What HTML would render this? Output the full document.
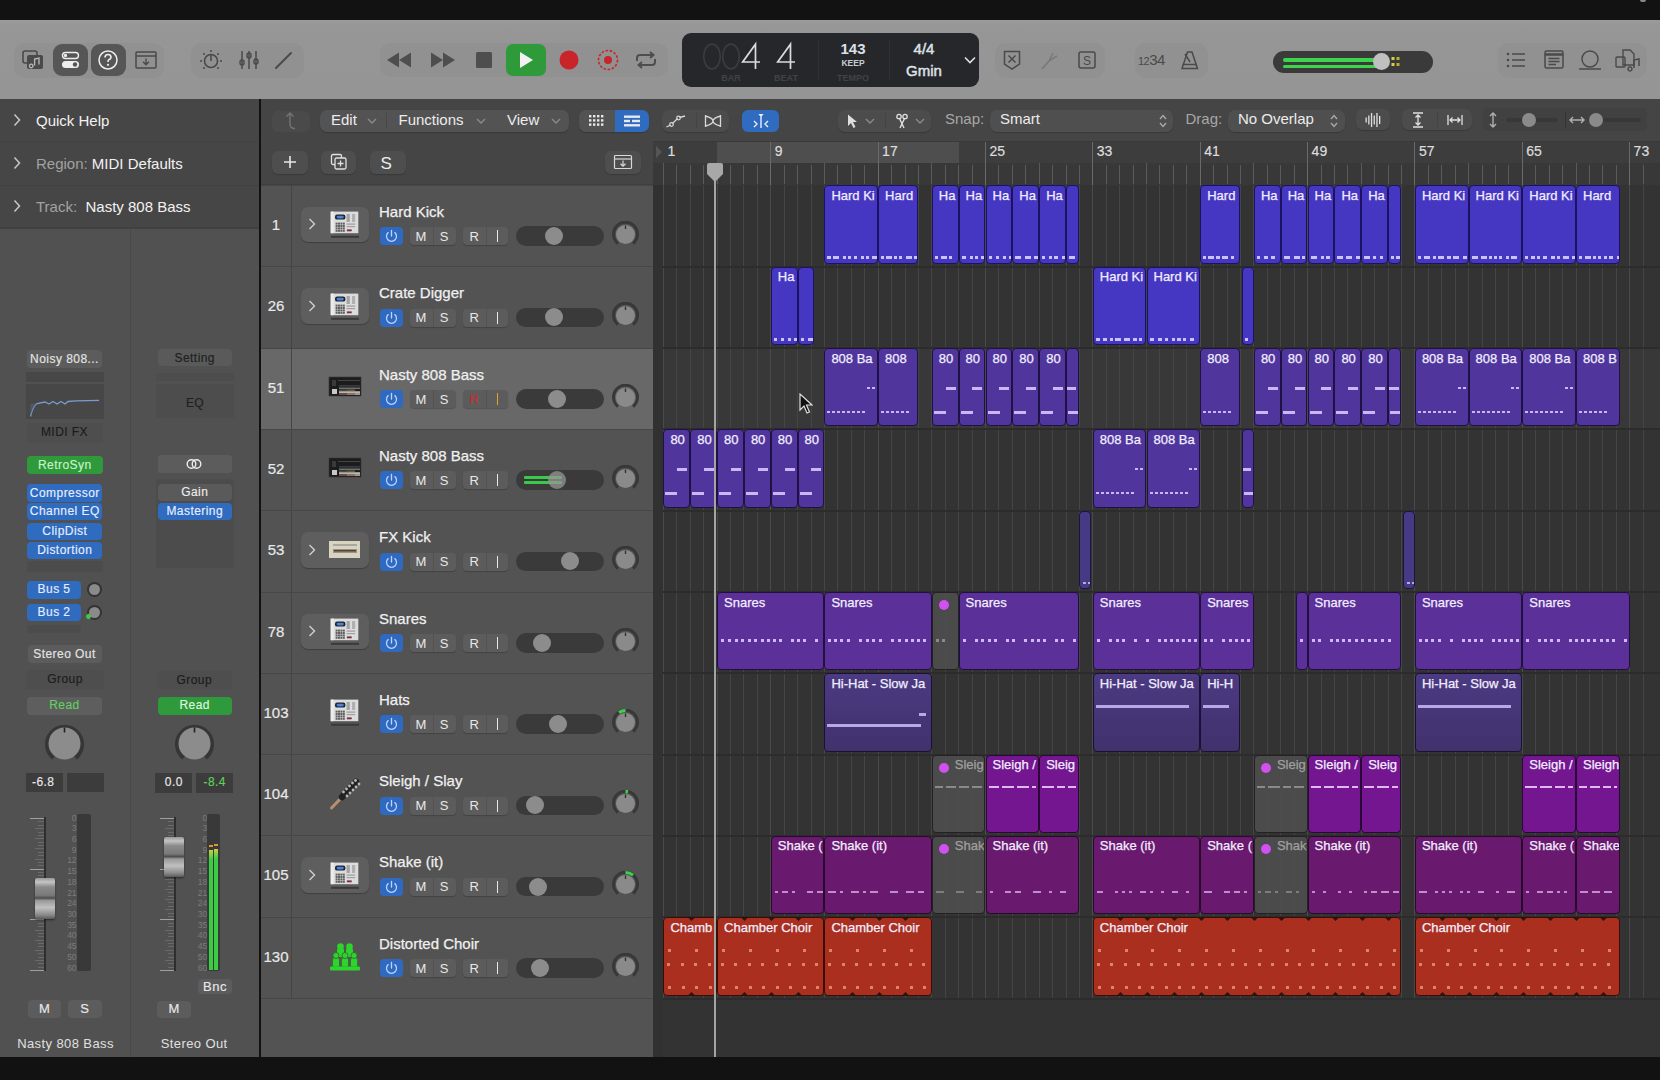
<!DOCTYPE html><html><head><meta charset="utf-8"><style>
html,body{margin:0;padding:0;} body{width:1660px;height:1080px;overflow:hidden;position:relative;background:#121212;font-family:"Liberation Sans", sans-serif;} div{box-sizing:border-box;}
.rg{position:absolute;border:1px solid;border-radius:4px;overflow:hidden;box-sizing:border-box;font-family:"Liberation Sans",sans-serif}.rg i{position:absolute;display:block}
</style></head><body>
<div style="position:absolute;left:0px;top:0px;width:1660px;height:20px;background:#121212"></div>
<div style="position:absolute;left:0px;top:20px;width:1660px;height:79px;background:linear-gradient(#9b9b9b, #969696 6px, #959595)"></div>
<div style="position:absolute;left:0px;top:99px;width:259px;height:958px;background:#515151"></div>
<div style="position:absolute;left:0px;top:99px;width:259px;height:128px;background:#464646"></div>
<div style="position:absolute;left:0px;top:140.5px;width:259px;height:1px;background:#424242"></div>
<div style="position:absolute;left:0px;top:184.5px;width:259px;height:1px;background:#424242"></div>
<div style="position:absolute;left:0px;top:227px;width:259px;height:2px;background:#404040"></div>
<div style="position:absolute;left:130px;top:228px;width:1px;height:829px;background:#484848"></div>
<div style="position:absolute;left:259px;top:99px;width:1.5px;height:958px;background:#121212"></div>
<div style="position:absolute;left:260.5px;top:99px;width:392.5px;height:958px;background:#535353"></div>
<div style="position:absolute;left:260.5px;top:99px;width:392.5px;height:86px;background:#454545"></div>
<div style="position:absolute;left:260.5px;top:184px;width:392.5px;height:1.5px;background:#3f3f3f"></div>
<div style="position:absolute;left:653px;top:99px;width:1007px;height:44px;background:#454545"></div>
<div style="position:absolute;left:653px;top:141px;width:1007px;height:44px;background:#3a3a3a"></div>
<div style="position:absolute;left:653px;top:185px;width:1007px;height:872px;background:#333333"></div>
<div style="position:absolute;left:653px;top:348.0px;width:1007px;height:81.3px;background:#383838"></div>
<div style="position:absolute;left:662.9px;top:185px;width:1px;height:813px;background:#4a4a4a"></div>
<div style="position:absolute;left:676.3px;top:185px;width:1px;height:813px;background:#454545"></div>
<div style="position:absolute;left:689.7px;top:185px;width:1px;height:813px;background:#454545"></div>
<div style="position:absolute;left:703.2px;top:185px;width:1px;height:813px;background:#454545"></div>
<div style="position:absolute;left:716.6px;top:185px;width:1px;height:813px;background:#454545"></div>
<div style="position:absolute;left:730.0px;top:185px;width:1px;height:813px;background:#454545"></div>
<div style="position:absolute;left:743.4px;top:185px;width:1px;height:813px;background:#454545"></div>
<div style="position:absolute;left:756.8px;top:185px;width:1px;height:813px;background:#454545"></div>
<div style="position:absolute;left:770.3px;top:185px;width:1px;height:813px;background:#4a4a4a"></div>
<div style="position:absolute;left:783.7px;top:185px;width:1px;height:813px;background:#454545"></div>
<div style="position:absolute;left:797.1px;top:185px;width:1px;height:813px;background:#454545"></div>
<div style="position:absolute;left:810.5px;top:185px;width:1px;height:813px;background:#454545"></div>
<div style="position:absolute;left:823.9px;top:185px;width:1px;height:813px;background:#454545"></div>
<div style="position:absolute;left:837.4px;top:185px;width:1px;height:813px;background:#454545"></div>
<div style="position:absolute;left:850.8px;top:185px;width:1px;height:813px;background:#454545"></div>
<div style="position:absolute;left:864.2px;top:185px;width:1px;height:813px;background:#454545"></div>
<div style="position:absolute;left:877.6px;top:185px;width:1px;height:813px;background:#4a4a4a"></div>
<div style="position:absolute;left:891.0px;top:185px;width:1px;height:813px;background:#454545"></div>
<div style="position:absolute;left:904.5px;top:185px;width:1px;height:813px;background:#454545"></div>
<div style="position:absolute;left:917.9px;top:185px;width:1px;height:813px;background:#454545"></div>
<div style="position:absolute;left:931.3px;top:185px;width:1px;height:813px;background:#454545"></div>
<div style="position:absolute;left:944.7px;top:185px;width:1px;height:813px;background:#454545"></div>
<div style="position:absolute;left:958.1px;top:185px;width:1px;height:813px;background:#454545"></div>
<div style="position:absolute;left:971.6px;top:185px;width:1px;height:813px;background:#454545"></div>
<div style="position:absolute;left:985.0px;top:185px;width:1px;height:813px;background:#4a4a4a"></div>
<div style="position:absolute;left:998.4px;top:185px;width:1px;height:813px;background:#454545"></div>
<div style="position:absolute;left:1011.8px;top:185px;width:1px;height:813px;background:#454545"></div>
<div style="position:absolute;left:1025.2px;top:185px;width:1px;height:813px;background:#454545"></div>
<div style="position:absolute;left:1038.7px;top:185px;width:1px;height:813px;background:#454545"></div>
<div style="position:absolute;left:1052.1px;top:185px;width:1px;height:813px;background:#454545"></div>
<div style="position:absolute;left:1065.5px;top:185px;width:1px;height:813px;background:#454545"></div>
<div style="position:absolute;left:1078.9px;top:185px;width:1px;height:813px;background:#454545"></div>
<div style="position:absolute;left:1092.3px;top:185px;width:1px;height:813px;background:#4a4a4a"></div>
<div style="position:absolute;left:1105.8px;top:185px;width:1px;height:813px;background:#454545"></div>
<div style="position:absolute;left:1119.2px;top:185px;width:1px;height:813px;background:#454545"></div>
<div style="position:absolute;left:1132.6px;top:185px;width:1px;height:813px;background:#454545"></div>
<div style="position:absolute;left:1146.0px;top:185px;width:1px;height:813px;background:#454545"></div>
<div style="position:absolute;left:1159.4px;top:185px;width:1px;height:813px;background:#454545"></div>
<div style="position:absolute;left:1172.9px;top:185px;width:1px;height:813px;background:#454545"></div>
<div style="position:absolute;left:1186.3px;top:185px;width:1px;height:813px;background:#454545"></div>
<div style="position:absolute;left:1199.7px;top:185px;width:1px;height:813px;background:#4a4a4a"></div>
<div style="position:absolute;left:1213.1px;top:185px;width:1px;height:813px;background:#454545"></div>
<div style="position:absolute;left:1226.5px;top:185px;width:1px;height:813px;background:#454545"></div>
<div style="position:absolute;left:1240.0px;top:185px;width:1px;height:813px;background:#454545"></div>
<div style="position:absolute;left:1253.4px;top:185px;width:1px;height:813px;background:#454545"></div>
<div style="position:absolute;left:1266.8px;top:185px;width:1px;height:813px;background:#454545"></div>
<div style="position:absolute;left:1280.2px;top:185px;width:1px;height:813px;background:#454545"></div>
<div style="position:absolute;left:1293.6px;top:185px;width:1px;height:813px;background:#454545"></div>
<div style="position:absolute;left:1307.1px;top:185px;width:1px;height:813px;background:#4a4a4a"></div>
<div style="position:absolute;left:1320.5px;top:185px;width:1px;height:813px;background:#454545"></div>
<div style="position:absolute;left:1333.9px;top:185px;width:1px;height:813px;background:#454545"></div>
<div style="position:absolute;left:1347.3px;top:185px;width:1px;height:813px;background:#454545"></div>
<div style="position:absolute;left:1360.7px;top:185px;width:1px;height:813px;background:#454545"></div>
<div style="position:absolute;left:1374.2px;top:185px;width:1px;height:813px;background:#454545"></div>
<div style="position:absolute;left:1387.6px;top:185px;width:1px;height:813px;background:#454545"></div>
<div style="position:absolute;left:1401.0px;top:185px;width:1px;height:813px;background:#454545"></div>
<div style="position:absolute;left:1414.4px;top:185px;width:1px;height:813px;background:#4a4a4a"></div>
<div style="position:absolute;left:1427.8px;top:185px;width:1px;height:813px;background:#454545"></div>
<div style="position:absolute;left:1441.3px;top:185px;width:1px;height:813px;background:#454545"></div>
<div style="position:absolute;left:1454.7px;top:185px;width:1px;height:813px;background:#454545"></div>
<div style="position:absolute;left:1468.1px;top:185px;width:1px;height:813px;background:#454545"></div>
<div style="position:absolute;left:1481.5px;top:185px;width:1px;height:813px;background:#454545"></div>
<div style="position:absolute;left:1494.9px;top:185px;width:1px;height:813px;background:#454545"></div>
<div style="position:absolute;left:1508.4px;top:185px;width:1px;height:813px;background:#454545"></div>
<div style="position:absolute;left:1521.8px;top:185px;width:1px;height:813px;background:#4a4a4a"></div>
<div style="position:absolute;left:1535.2px;top:185px;width:1px;height:813px;background:#454545"></div>
<div style="position:absolute;left:1548.6px;top:185px;width:1px;height:813px;background:#454545"></div>
<div style="position:absolute;left:1562.0px;top:185px;width:1px;height:813px;background:#454545"></div>
<div style="position:absolute;left:1575.5px;top:185px;width:1px;height:813px;background:#454545"></div>
<div style="position:absolute;left:1588.9px;top:185px;width:1px;height:813px;background:#454545"></div>
<div style="position:absolute;left:1602.3px;top:185px;width:1px;height:813px;background:#454545"></div>
<div style="position:absolute;left:1615.7px;top:185px;width:1px;height:813px;background:#454545"></div>
<div style="position:absolute;left:1629.1px;top:185px;width:1px;height:813px;background:#4a4a4a"></div>
<div style="position:absolute;left:1642.6px;top:185px;width:1px;height:813px;background:#454545"></div>
<div style="position:absolute;left:653px;top:265.6px;width:1007px;height:2px;background:#2c2c2c"></div>
<div style="position:absolute;left:653px;top:347.0px;width:1007px;height:2px;background:#2c2c2c"></div>
<div style="position:absolute;left:653px;top:428.3px;width:1007px;height:2px;background:#2c2c2c"></div>
<div style="position:absolute;left:653px;top:509.6px;width:1007px;height:2px;background:#2c2c2c"></div>
<div style="position:absolute;left:653px;top:591.0px;width:1007px;height:2px;background:#2c2c2c"></div>
<div style="position:absolute;left:653px;top:672.3px;width:1007px;height:2px;background:#2c2c2c"></div>
<div style="position:absolute;left:653px;top:753.6px;width:1007px;height:2px;background:#2c2c2c"></div>
<div style="position:absolute;left:653px;top:834.9px;width:1007px;height:2px;background:#2c2c2c"></div>
<div style="position:absolute;left:653px;top:916.3px;width:1007px;height:2px;background:#2c2c2c"></div>
<div style="position:absolute;left:653px;top:997.6px;width:1007px;height:2px;background:#2c2c2c"></div>
<div style="position:absolute;left:653px;top:185px;width:10px;height:872px;background:#313131"></div>
<div class="rg" style="left:824.4px;top:185.3px;width:53.7px;height:78.3px;background:#4637c2;border-color:#1b1360"><i style="left:2px;top:70px;width:4px;height:3px;background:#c9c2ff"></i><i style="left:8px;top:70px;width:6px;height:3px;background:#c9c2ff"></i><i style="left:18px;top:70px;width:3px;height:3px;background:#c9c2ff"></i><i style="left:23px;top:70px;width:3px;height:3px;background:#c9c2ff"></i><i style="left:29px;top:70px;width:3px;height:3px;background:#c9c2ff"></i><i style="left:36px;top:70px;width:3px;height:3px;background:#c9c2ff"></i><i style="left:41px;top:70px;width:3px;height:3px;background:#c9c2ff"></i><i style="left:47px;top:70px;width:6px;height:3px;background:#c9c2ff"></i><b style="position:absolute;left:6px;top:1.5px;font-weight:normal;font-size:13px;line-height:15px;color:#f2eeff;white-space:nowrap;-webkit-text-stroke:0.25px #f2eeff">Hard Ki</b></div>
<div class="rg" style="left:878.1px;top:185.3px;width:40.3px;height:78.3px;background:#4637c2;border-color:#1b1360"><i style="left:2px;top:70px;width:3px;height:3px;background:#c9c2ff"></i><i style="left:7px;top:70px;width:6px;height:3px;background:#c9c2ff"></i><i style="left:15px;top:70px;width:3px;height:3px;background:#c9c2ff"></i><i style="left:20px;top:70px;width:3px;height:3px;background:#c9c2ff"></i><i style="left:27px;top:70px;width:6px;height:3px;background:#c9c2ff"></i><i style="left:35px;top:70px;width:3px;height:3px;background:#c9c2ff"></i><b style="position:absolute;left:6px;top:1.5px;font-weight:normal;font-size:13px;line-height:15px;color:#f2eeff;white-space:nowrap;-webkit-text-stroke:0.25px #f2eeff">Hard</b></div>
<div class="rg" style="left:931.8px;top:185.3px;width:26.8px;height:78.3px;background:#4637c2;border-color:#1b1360"><i style="left:2px;top:70px;width:3px;height:3px;background:#c9c2ff"></i><i style="left:8px;top:70px;width:6px;height:3px;background:#c9c2ff"></i><i style="left:16px;top:70px;width:3px;height:3px;background:#c9c2ff"></i><b style="position:absolute;left:6px;top:1.5px;font-weight:normal;font-size:13px;line-height:15px;color:#f2eeff;white-space:nowrap;-webkit-text-stroke:0.25px #f2eeff">Ha</b></div>
<div class="rg" style="left:958.6px;top:185.3px;width:26.8px;height:78.3px;background:#4637c2;border-color:#1b1360"><i style="left:2px;top:70px;width:4px;height:3px;background:#c9c2ff"></i><i style="left:10px;top:70px;width:3px;height:3px;background:#c9c2ff"></i><i style="left:15px;top:70px;width:3px;height:3px;background:#c9c2ff"></i><i style="left:21px;top:70px;width:3px;height:3px;background:#c9c2ff"></i><b style="position:absolute;left:6px;top:1.5px;font-weight:normal;font-size:13px;line-height:15px;color:#f2eeff;white-space:nowrap;-webkit-text-stroke:0.25px #f2eeff">Ha</b></div>
<div class="rg" style="left:985.5px;top:185.3px;width:26.8px;height:78.3px;background:#4637c2;border-color:#1b1360"><i style="left:2px;top:70px;width:3px;height:3px;background:#c9c2ff"></i><i style="left:9px;top:70px;width:3px;height:3px;background:#c9c2ff"></i><i style="left:16px;top:70px;width:3px;height:3px;background:#c9c2ff"></i><i style="left:22px;top:70px;width:6px;height:3px;background:#c9c2ff"></i><b style="position:absolute;left:6px;top:1.5px;font-weight:normal;font-size:13px;line-height:15px;color:#f2eeff;white-space:nowrap;-webkit-text-stroke:0.25px #f2eeff">Ha</b></div>
<div class="rg" style="left:1012.3px;top:185.3px;width:26.8px;height:78.3px;background:#4637c2;border-color:#1b1360"><i style="left:2px;top:70px;width:6px;height:3px;background:#c9c2ff"></i><i style="left:12px;top:70px;width:6px;height:3px;background:#c9c2ff"></i><i style="left:21px;top:70px;width:4px;height:3px;background:#c9c2ff"></i><b style="position:absolute;left:6px;top:1.5px;font-weight:normal;font-size:13px;line-height:15px;color:#f2eeff;white-space:nowrap;-webkit-text-stroke:0.25px #f2eeff">Ha</b></div>
<div class="rg" style="left:1039.2px;top:185.3px;width:26.8px;height:78.3px;background:#4637c2;border-color:#1b1360"><i style="left:2px;top:70px;width:3px;height:3px;background:#c9c2ff"></i><i style="left:9px;top:70px;width:3px;height:3px;background:#c9c2ff"></i><i style="left:14px;top:70px;width:4px;height:3px;background:#c9c2ff"></i><i style="left:22px;top:70px;width:6px;height:3px;background:#c9c2ff"></i><b style="position:absolute;left:6px;top:1.5px;font-weight:normal;font-size:13px;line-height:15px;color:#f2eeff;white-space:nowrap;-webkit-text-stroke:0.25px #f2eeff">Ha</b></div>
<div class="rg" style="left:1066.0px;top:185.3px;width:13.4px;height:78.3px;background:#4637c2;border-color:#1b1360"><i style="left:2px;top:70px;width:6px;height:3px;background:#c9c2ff"></i></div>
<div class="rg" style="left:1200.2px;top:185.3px;width:40.3px;height:78.3px;background:#4637c2;border-color:#1b1360"><i style="left:2px;top:70px;width:3px;height:3px;background:#c9c2ff"></i><i style="left:7px;top:70px;width:6px;height:3px;background:#c9c2ff"></i><i style="left:15px;top:70px;width:4px;height:3px;background:#c9c2ff"></i><i style="left:21px;top:70px;width:6px;height:3px;background:#c9c2ff"></i><i style="left:30px;top:70px;width:3px;height:3px;background:#c9c2ff"></i><b style="position:absolute;left:6px;top:1.5px;font-weight:normal;font-size:13px;line-height:15px;color:#f2eeff;white-space:nowrap;-webkit-text-stroke:0.25px #f2eeff">Hard</b></div>
<div class="rg" style="left:1253.9px;top:185.3px;width:26.8px;height:78.3px;background:#4637c2;border-color:#1b1360"><i style="left:2px;top:70px;width:3px;height:3px;background:#c9c2ff"></i><i style="left:9px;top:70px;width:4px;height:3px;background:#c9c2ff"></i><i style="left:16px;top:70px;width:4px;height:3px;background:#c9c2ff"></i><b style="position:absolute;left:6px;top:1.5px;font-weight:normal;font-size:13px;line-height:15px;color:#f2eeff;white-space:nowrap;-webkit-text-stroke:0.25px #f2eeff">Ha</b></div>
<div class="rg" style="left:1280.7px;top:185.3px;width:26.8px;height:78.3px;background:#4637c2;border-color:#1b1360"><i style="left:2px;top:70px;width:6px;height:3px;background:#c9c2ff"></i><i style="left:12px;top:70px;width:6px;height:3px;background:#c9c2ff"></i><i style="left:20px;top:70px;width:3px;height:3px;background:#c9c2ff"></i><b style="position:absolute;left:6px;top:1.5px;font-weight:normal;font-size:13px;line-height:15px;color:#f2eeff;white-space:nowrap;-webkit-text-stroke:0.25px #f2eeff">Ha</b></div>
<div class="rg" style="left:1307.6px;top:185.3px;width:26.8px;height:78.3px;background:#4637c2;border-color:#1b1360"><i style="left:2px;top:70px;width:6px;height:3px;background:#c9c2ff"></i><i style="left:12px;top:70px;width:3px;height:3px;background:#c9c2ff"></i><i style="left:17px;top:70px;width:4px;height:3px;background:#c9c2ff"></i><b style="position:absolute;left:6px;top:1.5px;font-weight:normal;font-size:13px;line-height:15px;color:#f2eeff;white-space:nowrap;-webkit-text-stroke:0.25px #f2eeff">Ha</b></div>
<div class="rg" style="left:1334.4px;top:185.3px;width:26.8px;height:78.3px;background:#4637c2;border-color:#1b1360"><i style="left:2px;top:70px;width:6px;height:3px;background:#c9c2ff"></i><i style="left:11px;top:70px;width:6px;height:3px;background:#c9c2ff"></i><i style="left:21px;top:70px;width:4px;height:3px;background:#c9c2ff"></i><b style="position:absolute;left:6px;top:1.5px;font-weight:normal;font-size:13px;line-height:15px;color:#f2eeff;white-space:nowrap;-webkit-text-stroke:0.25px #f2eeff">Ha</b></div>
<div class="rg" style="left:1361.2px;top:185.3px;width:26.8px;height:78.3px;background:#4637c2;border-color:#1b1360"><i style="left:2px;top:70px;width:6px;height:3px;background:#c9c2ff"></i><i style="left:11px;top:70px;width:3px;height:3px;background:#c9c2ff"></i><i style="left:18px;top:70px;width:3px;height:3px;background:#c9c2ff"></i><b style="position:absolute;left:6px;top:1.5px;font-weight:normal;font-size:13px;line-height:15px;color:#f2eeff;white-space:nowrap;-webkit-text-stroke:0.25px #f2eeff">Ha</b></div>
<div class="rg" style="left:1388.1px;top:185.3px;width:13.4px;height:78.3px;background:#4637c2;border-color:#1b1360"><i style="left:2px;top:70px;width:3px;height:3px;background:#c9c2ff"></i><i style="left:7px;top:70px;width:4px;height:3px;background:#c9c2ff"></i></div>
<div class="rg" style="left:1414.9px;top:185.3px;width:53.7px;height:78.3px;background:#4637c2;border-color:#1b1360"><i style="left:2px;top:70px;width:3px;height:3px;background:#c9c2ff"></i><i style="left:8px;top:70px;width:6px;height:3px;background:#c9c2ff"></i><i style="left:17px;top:70px;width:3px;height:3px;background:#c9c2ff"></i><i style="left:22px;top:70px;width:6px;height:3px;background:#c9c2ff"></i><i style="left:31px;top:70px;width:4px;height:3px;background:#c9c2ff"></i><i style="left:37px;top:70px;width:6px;height:3px;background:#c9c2ff"></i><i style="left:47px;top:70px;width:4px;height:3px;background:#c9c2ff"></i><b style="position:absolute;left:6px;top:1.5px;font-weight:normal;font-size:13px;line-height:15px;color:#f2eeff;white-space:nowrap;-webkit-text-stroke:0.25px #f2eeff">Hard Ki</b></div>
<div class="rg" style="left:1468.6px;top:185.3px;width:53.7px;height:78.3px;background:#4637c2;border-color:#1b1360"><i style="left:2px;top:70px;width:6px;height:3px;background:#c9c2ff"></i><i style="left:11px;top:70px;width:6px;height:3px;background:#c9c2ff"></i><i style="left:19px;top:70px;width:3px;height:3px;background:#c9c2ff"></i><i style="left:24px;top:70px;width:3px;height:3px;background:#c9c2ff"></i><i style="left:29px;top:70px;width:3px;height:3px;background:#c9c2ff"></i><i style="left:36px;top:70px;width:3px;height:3px;background:#c9c2ff"></i><i style="left:41px;top:70px;width:6px;height:3px;background:#c9c2ff"></i><b style="position:absolute;left:6px;top:1.5px;font-weight:normal;font-size:13px;line-height:15px;color:#f2eeff;white-space:nowrap;-webkit-text-stroke:0.25px #f2eeff">Hard Ki</b></div>
<div class="rg" style="left:1522.3px;top:185.3px;width:53.7px;height:78.3px;background:#4637c2;border-color:#1b1360"><i style="left:2px;top:70px;width:3px;height:3px;background:#c9c2ff"></i><i style="left:8px;top:70px;width:4px;height:3px;background:#c9c2ff"></i><i style="left:14px;top:70px;width:3px;height:3px;background:#c9c2ff"></i><i style="left:20px;top:70px;width:4px;height:3px;background:#c9c2ff"></i><i style="left:28px;top:70px;width:4px;height:3px;background:#c9c2ff"></i><i style="left:34px;top:70px;width:3px;height:3px;background:#c9c2ff"></i><i style="left:40px;top:70px;width:6px;height:3px;background:#c9c2ff"></i><i style="left:49px;top:70px;width:6px;height:3px;background:#c9c2ff"></i><b style="position:absolute;left:6px;top:1.5px;font-weight:normal;font-size:13px;line-height:15px;color:#f2eeff;white-space:nowrap;-webkit-text-stroke:0.25px #f2eeff">Hard Ki</b></div>
<div class="rg" style="left:1576.0px;top:185.3px;width:44.3px;height:78.3px;background:#4637c2;border-color:#1b1360"><i style="left:2px;top:70px;width:3px;height:3px;background:#c9c2ff"></i><i style="left:8px;top:70px;width:6px;height:3px;background:#c9c2ff"></i><i style="left:16px;top:70px;width:3px;height:3px;background:#c9c2ff"></i><i style="left:21px;top:70px;width:3px;height:3px;background:#c9c2ff"></i><i style="left:27px;top:70px;width:3px;height:3px;background:#c9c2ff"></i><i style="left:32px;top:70px;width:4px;height:3px;background:#c9c2ff"></i><i style="left:40px;top:70px;width:3px;height:3px;background:#c9c2ff"></i><b style="position:absolute;left:6px;top:1.5px;font-weight:normal;font-size:13px;line-height:15px;color:#f2eeff;white-space:nowrap;-webkit-text-stroke:0.25px #f2eeff">Hard</b></div>
<div class="rg" style="left:770.8px;top:266.6px;width:26.8px;height:78.3px;background:#4637c2;border-color:#1b1360"><i style="left:2px;top:70px;width:3px;height:3px;background:#c9c2ff"></i><i style="left:9px;top:70px;width:3px;height:3px;background:#c9c2ff"></i><i style="left:16px;top:70px;width:3px;height:3px;background:#c9c2ff"></i><i style="left:22px;top:70px;width:3px;height:3px;background:#c9c2ff"></i><b style="position:absolute;left:6px;top:1.5px;font-weight:normal;font-size:13px;line-height:15px;color:#f2eeff;white-space:nowrap;-webkit-text-stroke:0.25px #f2eeff">Ha</b></div>
<div class="rg" style="left:797.6px;top:266.6px;width:16.8px;height:78.3px;background:#4637c2;border-color:#1b1360"><i style="left:2px;top:70px;width:3px;height:3px;background:#c9c2ff"></i><i style="left:9px;top:70px;width:6px;height:3px;background:#c9c2ff"></i></div>
<div class="rg" style="left:1092.8px;top:266.6px;width:53.7px;height:78.3px;background:#4637c2;border-color:#1b1360"><i style="left:2px;top:70px;width:4px;height:3px;background:#c9c2ff"></i><i style="left:9px;top:70px;width:4px;height:3px;background:#c9c2ff"></i><i style="left:16px;top:70px;width:3px;height:3px;background:#c9c2ff"></i><i style="left:21px;top:70px;width:6px;height:3px;background:#c9c2ff"></i><i style="left:30px;top:70px;width:6px;height:3px;background:#c9c2ff"></i><i style="left:39px;top:70px;width:4px;height:3px;background:#c9c2ff"></i><i style="left:45px;top:70px;width:3px;height:3px;background:#c9c2ff"></i><b style="position:absolute;left:6px;top:1.5px;font-weight:normal;font-size:13px;line-height:15px;color:#f2eeff;white-space:nowrap;-webkit-text-stroke:0.25px #f2eeff">Hard Ki</b></div>
<div class="rg" style="left:1146.5px;top:266.6px;width:53.7px;height:78.3px;background:#4637c2;border-color:#1b1360"><i style="left:2px;top:70px;width:4px;height:3px;background:#c9c2ff"></i><i style="left:10px;top:70px;width:4px;height:3px;background:#c9c2ff"></i><i style="left:17px;top:70px;width:3px;height:3px;background:#c9c2ff"></i><i style="left:24px;top:70px;width:3px;height:3px;background:#c9c2ff"></i><i style="left:29px;top:70px;width:4px;height:3px;background:#c9c2ff"></i><i style="left:35px;top:70px;width:3px;height:3px;background:#c9c2ff"></i><i style="left:42px;top:70px;width:4px;height:3px;background:#c9c2ff"></i><b style="position:absolute;left:6px;top:1.5px;font-weight:normal;font-size:13px;line-height:15px;color:#f2eeff;white-space:nowrap;-webkit-text-stroke:0.25px #f2eeff">Hard Ki</b></div>
<div class="rg" style="left:1241.8px;top:266.6px;width:12.1px;height:78.3px;background:#4637c2;border-color:#1b1360"><i style="left:2px;top:70px;width:3px;height:3px;background:#c9c2ff"></i></div>
<div class="rg" style="left:824.4px;top:348.0px;width:53.7px;height:78.3px;background:#50369c;border-color:#1e1245"><i style="left:41.680000000000064px;top:38px;width:3px;height:2px;background:#c8b8f8"></i><i style="left:46.680000000000064px;top:38px;width:3px;height:2px;background:#c8b8f8"></i><i style="left:2px;top:62px;width:3px;height:2px;background:#c8b8f8"></i><i style="left:7px;top:62px;width:3px;height:2px;background:#c8b8f8"></i><i style="left:12px;top:62px;width:3px;height:2px;background:#c8b8f8"></i><i style="left:17px;top:62px;width:3px;height:2px;background:#c8b8f8"></i><i style="left:22px;top:62px;width:3px;height:2px;background:#c8b8f8"></i><i style="left:27px;top:62px;width:3px;height:2px;background:#c8b8f8"></i><i style="left:32px;top:62px;width:3px;height:2px;background:#c8b8f8"></i><i style="left:37px;top:62px;width:3px;height:2px;background:#c8b8f8"></i><b style="position:absolute;left:6px;top:1.5px;font-weight:normal;font-size:13px;line-height:15px;color:#f2eeff;white-space:nowrap;-webkit-text-stroke:0.25px #f2eeff">808 Ba</b></div>
<div class="rg" style="left:878.1px;top:348.0px;width:40.3px;height:78.3px;background:#50369c;border-color:#1e1245"><i style="left:2px;top:62px;width:3px;height:2px;background:#c8b8f8"></i><i style="left:7px;top:62px;width:3px;height:2px;background:#c8b8f8"></i><i style="left:12px;top:62px;width:3px;height:2px;background:#c8b8f8"></i><i style="left:17px;top:62px;width:3px;height:2px;background:#c8b8f8"></i><i style="left:22px;top:62px;width:3px;height:2px;background:#c8b8f8"></i><i style="left:27px;top:62px;width:3px;height:2px;background:#c8b8f8"></i><b style="position:absolute;left:6px;top:1.5px;font-weight:normal;font-size:13px;line-height:15px;color:#f2eeff;white-space:nowrap;-webkit-text-stroke:0.25px #f2eeff">808</b></div>
<div class="rg" style="left:931.8px;top:348.0px;width:26.8px;height:78.3px;background:#50369c;border-color:#1e1245"><i style="left:12.840000000000032px;top:38px;width:10px;height:3px;background:#c8b8f8"></i><i style="left:1px;top:62px;width:12px;height:3px;background:#c8b8f8"></i><b style="position:absolute;left:6px;top:1.5px;font-weight:normal;font-size:13px;line-height:15px;color:#f2eeff;white-space:nowrap;-webkit-text-stroke:0.25px #f2eeff">80</b></div>
<div class="rg" style="left:958.6px;top:348.0px;width:26.8px;height:78.3px;background:#50369c;border-color:#1e1245"><i style="left:12.840000000000032px;top:38px;width:10px;height:3px;background:#c8b8f8"></i><i style="left:1px;top:62px;width:12px;height:3px;background:#c8b8f8"></i><b style="position:absolute;left:6px;top:1.5px;font-weight:normal;font-size:13px;line-height:15px;color:#f2eeff;white-space:nowrap;-webkit-text-stroke:0.25px #f2eeff">80</b></div>
<div class="rg" style="left:985.5px;top:348.0px;width:26.8px;height:78.3px;background:#50369c;border-color:#1e1245"><i style="left:12.839999999999918px;top:38px;width:10px;height:3px;background:#c8b8f8"></i><i style="left:1px;top:62px;width:12px;height:3px;background:#c8b8f8"></i><b style="position:absolute;left:6px;top:1.5px;font-weight:normal;font-size:13px;line-height:15px;color:#f2eeff;white-space:nowrap;-webkit-text-stroke:0.25px #f2eeff">80</b></div>
<div class="rg" style="left:1012.3px;top:348.0px;width:26.8px;height:78.3px;background:#50369c;border-color:#1e1245"><i style="left:12.839999999999918px;top:38px;width:10px;height:3px;background:#c8b8f8"></i><i style="left:1px;top:62px;width:12px;height:3px;background:#c8b8f8"></i><b style="position:absolute;left:6px;top:1.5px;font-weight:normal;font-size:13px;line-height:15px;color:#f2eeff;white-space:nowrap;-webkit-text-stroke:0.25px #f2eeff">80</b></div>
<div class="rg" style="left:1039.2px;top:348.0px;width:26.8px;height:78.3px;background:#50369c;border-color:#1e1245"><i style="left:12.840000000000146px;top:38px;width:10px;height:3px;background:#c8b8f8"></i><i style="left:1px;top:62px;width:12px;height:3px;background:#c8b8f8"></i><b style="position:absolute;left:6px;top:1.5px;font-weight:normal;font-size:13px;line-height:15px;color:#f2eeff;white-space:nowrap;-webkit-text-stroke:0.25px #f2eeff">80</b></div>
<div class="rg" style="left:1066.0px;top:348.0px;width:13.4px;height:78.3px;background:#50369c;border-color:#1e1245"><i style="left:-0.5799999999999272px;top:38px;width:10px;height:3px;background:#c8b8f8"></i><i style="left:1px;top:62px;width:12px;height:3px;background:#c8b8f8"></i></div>
<div class="rg" style="left:1200.2px;top:348.0px;width:40.3px;height:78.3px;background:#50369c;border-color:#1e1245"><i style="left:2px;top:62px;width:3px;height:2px;background:#c8b8f8"></i><i style="left:7px;top:62px;width:3px;height:2px;background:#c8b8f8"></i><i style="left:12px;top:62px;width:3px;height:2px;background:#c8b8f8"></i><i style="left:17px;top:62px;width:3px;height:2px;background:#c8b8f8"></i><i style="left:22px;top:62px;width:3px;height:2px;background:#c8b8f8"></i><i style="left:27px;top:62px;width:3px;height:2px;background:#c8b8f8"></i><b style="position:absolute;left:6px;top:1.5px;font-weight:normal;font-size:13px;line-height:15px;color:#f2eeff;white-space:nowrap;-webkit-text-stroke:0.25px #f2eeff">808</b></div>
<div class="rg" style="left:1253.9px;top:348.0px;width:26.8px;height:78.3px;background:#50369c;border-color:#1e1245"><i style="left:12.839999999999918px;top:38px;width:10px;height:3px;background:#c8b8f8"></i><i style="left:1px;top:62px;width:12px;height:3px;background:#c8b8f8"></i><b style="position:absolute;left:6px;top:1.5px;font-weight:normal;font-size:13px;line-height:15px;color:#f2eeff;white-space:nowrap;-webkit-text-stroke:0.25px #f2eeff">80</b></div>
<div class="rg" style="left:1280.7px;top:348.0px;width:26.8px;height:78.3px;background:#50369c;border-color:#1e1245"><i style="left:12.839999999999918px;top:38px;width:10px;height:3px;background:#c8b8f8"></i><i style="left:1px;top:62px;width:12px;height:3px;background:#c8b8f8"></i><b style="position:absolute;left:6px;top:1.5px;font-weight:normal;font-size:13px;line-height:15px;color:#f2eeff;white-space:nowrap;-webkit-text-stroke:0.25px #f2eeff">80</b></div>
<div class="rg" style="left:1307.6px;top:348.0px;width:26.8px;height:78.3px;background:#50369c;border-color:#1e1245"><i style="left:12.840000000000146px;top:38px;width:10px;height:3px;background:#c8b8f8"></i><i style="left:1px;top:62px;width:12px;height:3px;background:#c8b8f8"></i><b style="position:absolute;left:6px;top:1.5px;font-weight:normal;font-size:13px;line-height:15px;color:#f2eeff;white-space:nowrap;-webkit-text-stroke:0.25px #f2eeff">80</b></div>
<div class="rg" style="left:1334.4px;top:348.0px;width:26.8px;height:78.3px;background:#50369c;border-color:#1e1245"><i style="left:12.839999999999918px;top:38px;width:10px;height:3px;background:#c8b8f8"></i><i style="left:1px;top:62px;width:12px;height:3px;background:#c8b8f8"></i><b style="position:absolute;left:6px;top:1.5px;font-weight:normal;font-size:13px;line-height:15px;color:#f2eeff;white-space:nowrap;-webkit-text-stroke:0.25px #f2eeff">80</b></div>
<div class="rg" style="left:1361.2px;top:348.0px;width:26.8px;height:78.3px;background:#50369c;border-color:#1e1245"><i style="left:12.839999999999918px;top:38px;width:10px;height:3px;background:#c8b8f8"></i><i style="left:1px;top:62px;width:12px;height:3px;background:#c8b8f8"></i><b style="position:absolute;left:6px;top:1.5px;font-weight:normal;font-size:13px;line-height:15px;color:#f2eeff;white-space:nowrap;-webkit-text-stroke:0.25px #f2eeff">80</b></div>
<div class="rg" style="left:1388.1px;top:348.0px;width:13.4px;height:78.3px;background:#50369c;border-color:#1e1245"><i style="left:-0.5799999999999272px;top:38px;width:10px;height:3px;background:#c8b8f8"></i><i style="left:1px;top:62px;width:12px;height:3px;background:#c8b8f8"></i></div>
<div class="rg" style="left:1414.9px;top:348.0px;width:53.7px;height:78.3px;background:#50369c;border-color:#1e1245"><i style="left:41.679999999999836px;top:38px;width:3px;height:2px;background:#c8b8f8"></i><i style="left:46.679999999999836px;top:38px;width:3px;height:2px;background:#c8b8f8"></i><i style="left:2px;top:62px;width:3px;height:2px;background:#c8b8f8"></i><i style="left:7px;top:62px;width:3px;height:2px;background:#c8b8f8"></i><i style="left:12px;top:62px;width:3px;height:2px;background:#c8b8f8"></i><i style="left:17px;top:62px;width:3px;height:2px;background:#c8b8f8"></i><i style="left:22px;top:62px;width:3px;height:2px;background:#c8b8f8"></i><i style="left:27px;top:62px;width:3px;height:2px;background:#c8b8f8"></i><i style="left:32px;top:62px;width:3px;height:2px;background:#c8b8f8"></i><i style="left:37px;top:62px;width:3px;height:2px;background:#c8b8f8"></i><b style="position:absolute;left:6px;top:1.5px;font-weight:normal;font-size:13px;line-height:15px;color:#f2eeff;white-space:nowrap;-webkit-text-stroke:0.25px #f2eeff">808 Ba</b></div>
<div class="rg" style="left:1468.6px;top:348.0px;width:53.7px;height:78.3px;background:#50369c;border-color:#1e1245"><i style="left:41.680000000000064px;top:38px;width:3px;height:2px;background:#c8b8f8"></i><i style="left:46.680000000000064px;top:38px;width:3px;height:2px;background:#c8b8f8"></i><i style="left:2px;top:62px;width:3px;height:2px;background:#c8b8f8"></i><i style="left:7px;top:62px;width:3px;height:2px;background:#c8b8f8"></i><i style="left:12px;top:62px;width:3px;height:2px;background:#c8b8f8"></i><i style="left:17px;top:62px;width:3px;height:2px;background:#c8b8f8"></i><i style="left:22px;top:62px;width:3px;height:2px;background:#c8b8f8"></i><i style="left:27px;top:62px;width:3px;height:2px;background:#c8b8f8"></i><i style="left:32px;top:62px;width:3px;height:2px;background:#c8b8f8"></i><i style="left:37px;top:62px;width:3px;height:2px;background:#c8b8f8"></i><b style="position:absolute;left:6px;top:1.5px;font-weight:normal;font-size:13px;line-height:15px;color:#f2eeff;white-space:nowrap;-webkit-text-stroke:0.25px #f2eeff">808 Ba</b></div>
<div class="rg" style="left:1522.3px;top:348.0px;width:53.7px;height:78.3px;background:#50369c;border-color:#1e1245"><i style="left:41.680000000000064px;top:38px;width:3px;height:2px;background:#c8b8f8"></i><i style="left:46.680000000000064px;top:38px;width:3px;height:2px;background:#c8b8f8"></i><i style="left:2px;top:62px;width:3px;height:2px;background:#c8b8f8"></i><i style="left:7px;top:62px;width:3px;height:2px;background:#c8b8f8"></i><i style="left:12px;top:62px;width:3px;height:2px;background:#c8b8f8"></i><i style="left:17px;top:62px;width:3px;height:2px;background:#c8b8f8"></i><i style="left:22px;top:62px;width:3px;height:2px;background:#c8b8f8"></i><i style="left:27px;top:62px;width:3px;height:2px;background:#c8b8f8"></i><i style="left:32px;top:62px;width:3px;height:2px;background:#c8b8f8"></i><i style="left:37px;top:62px;width:3px;height:2px;background:#c8b8f8"></i><b style="position:absolute;left:6px;top:1.5px;font-weight:normal;font-size:13px;line-height:15px;color:#f2eeff;white-space:nowrap;-webkit-text-stroke:0.25px #f2eeff">808 Ba</b></div>
<div class="rg" style="left:1576.0px;top:348.0px;width:44.3px;height:78.3px;background:#50369c;border-color:#1e1245"><i style="left:2px;top:62px;width:3px;height:2px;background:#c8b8f8"></i><i style="left:7px;top:62px;width:3px;height:2px;background:#c8b8f8"></i><i style="left:12px;top:62px;width:3px;height:2px;background:#c8b8f8"></i><i style="left:17px;top:62px;width:3px;height:2px;background:#c8b8f8"></i><i style="left:22px;top:62px;width:3px;height:2px;background:#c8b8f8"></i><i style="left:27px;top:62px;width:3px;height:2px;background:#c8b8f8"></i><b style="position:absolute;left:6px;top:1.5px;font-weight:normal;font-size:13px;line-height:15px;color:#f2eeff;white-space:nowrap;-webkit-text-stroke:0.25px #f2eeff">808 B</b></div>
<div class="rg" style="left:663.4px;top:429.3px;width:26.8px;height:78.3px;background:#50369c;border-color:#1e1245"><i style="left:12.840000000000032px;top:38px;width:10px;height:3px;background:#c8b8f8"></i><i style="left:1px;top:62px;width:12px;height:3px;background:#c8b8f8"></i><b style="position:absolute;left:6px;top:1.5px;font-weight:normal;font-size:13px;line-height:15px;color:#f2eeff;white-space:nowrap;-webkit-text-stroke:0.25px #f2eeff">80</b></div>
<div class="rg" style="left:690.2px;top:429.3px;width:26.8px;height:78.3px;background:#50369c;border-color:#1e1245"><i style="left:12.839999999999918px;top:38px;width:10px;height:3px;background:#c8b8f8"></i><i style="left:1px;top:62px;width:12px;height:3px;background:#c8b8f8"></i><b style="position:absolute;left:6px;top:1.5px;font-weight:normal;font-size:13px;line-height:15px;color:#f2eeff;white-space:nowrap;-webkit-text-stroke:0.25px #f2eeff">80</b></div>
<div class="rg" style="left:717.1px;top:429.3px;width:26.8px;height:78.3px;background:#50369c;border-color:#1e1245"><i style="left:12.840000000000032px;top:38px;width:10px;height:3px;background:#c8b8f8"></i><i style="left:1px;top:62px;width:12px;height:3px;background:#c8b8f8"></i><b style="position:absolute;left:6px;top:1.5px;font-weight:normal;font-size:13px;line-height:15px;color:#f2eeff;white-space:nowrap;-webkit-text-stroke:0.25px #f2eeff">80</b></div>
<div class="rg" style="left:743.9px;top:429.3px;width:26.8px;height:78.3px;background:#50369c;border-color:#1e1245"><i style="left:12.840000000000032px;top:38px;width:10px;height:3px;background:#c8b8f8"></i><i style="left:1px;top:62px;width:12px;height:3px;background:#c8b8f8"></i><b style="position:absolute;left:6px;top:1.5px;font-weight:normal;font-size:13px;line-height:15px;color:#f2eeff;white-space:nowrap;-webkit-text-stroke:0.25px #f2eeff">80</b></div>
<div class="rg" style="left:770.8px;top:429.3px;width:26.8px;height:78.3px;background:#50369c;border-color:#1e1245"><i style="left:12.839999999999918px;top:38px;width:10px;height:3px;background:#c8b8f8"></i><i style="left:1px;top:62px;width:12px;height:3px;background:#c8b8f8"></i><b style="position:absolute;left:6px;top:1.5px;font-weight:normal;font-size:13px;line-height:15px;color:#f2eeff;white-space:nowrap;-webkit-text-stroke:0.25px #f2eeff">80</b></div>
<div class="rg" style="left:797.6px;top:429.3px;width:26.8px;height:78.3px;background:#50369c;border-color:#1e1245"><i style="left:12.840000000000032px;top:38px;width:10px;height:3px;background:#c8b8f8"></i><i style="left:1px;top:62px;width:12px;height:3px;background:#c8b8f8"></i><b style="position:absolute;left:6px;top:1.5px;font-weight:normal;font-size:13px;line-height:15px;color:#f2eeff;white-space:nowrap;-webkit-text-stroke:0.25px #f2eeff">80</b></div>
<div class="rg" style="left:1092.8px;top:429.3px;width:53.7px;height:78.3px;background:#50369c;border-color:#1e1245"><i style="left:41.680000000000064px;top:38px;width:3px;height:2px;background:#c8b8f8"></i><i style="left:46.680000000000064px;top:38px;width:3px;height:2px;background:#c8b8f8"></i><i style="left:2px;top:62px;width:3px;height:2px;background:#c8b8f8"></i><i style="left:7px;top:62px;width:3px;height:2px;background:#c8b8f8"></i><i style="left:12px;top:62px;width:3px;height:2px;background:#c8b8f8"></i><i style="left:17px;top:62px;width:3px;height:2px;background:#c8b8f8"></i><i style="left:22px;top:62px;width:3px;height:2px;background:#c8b8f8"></i><i style="left:27px;top:62px;width:3px;height:2px;background:#c8b8f8"></i><i style="left:32px;top:62px;width:3px;height:2px;background:#c8b8f8"></i><i style="left:37px;top:62px;width:3px;height:2px;background:#c8b8f8"></i><b style="position:absolute;left:6px;top:1.5px;font-weight:normal;font-size:13px;line-height:15px;color:#f2eeff;white-space:nowrap;-webkit-text-stroke:0.25px #f2eeff">808 Ba</b></div>
<div class="rg" style="left:1146.5px;top:429.3px;width:53.7px;height:78.3px;background:#50369c;border-color:#1e1245"><i style="left:41.679999999999836px;top:38px;width:3px;height:2px;background:#c8b8f8"></i><i style="left:46.679999999999836px;top:38px;width:3px;height:2px;background:#c8b8f8"></i><i style="left:2px;top:62px;width:3px;height:2px;background:#c8b8f8"></i><i style="left:7px;top:62px;width:3px;height:2px;background:#c8b8f8"></i><i style="left:12px;top:62px;width:3px;height:2px;background:#c8b8f8"></i><i style="left:17px;top:62px;width:3px;height:2px;background:#c8b8f8"></i><i style="left:22px;top:62px;width:3px;height:2px;background:#c8b8f8"></i><i style="left:27px;top:62px;width:3px;height:2px;background:#c8b8f8"></i><i style="left:32px;top:62px;width:3px;height:2px;background:#c8b8f8"></i><i style="left:37px;top:62px;width:3px;height:2px;background:#c8b8f8"></i><b style="position:absolute;left:6px;top:1.5px;font-weight:normal;font-size:13px;line-height:15px;color:#f2eeff;white-space:nowrap;-webkit-text-stroke:0.25px #f2eeff">808 Ba</b></div>
<div class="rg" style="left:1241.8px;top:429.3px;width:12.1px;height:78.3px;background:#50369c;border-color:#1e1245"><i style="left:-1.9220000000000255px;top:38px;width:10px;height:3px;background:#c8b8f8"></i><i style="left:1px;top:62px;width:12px;height:3px;background:#c8b8f8"></i></div>
<div class="rg" style="left:1079.4px;top:510.6px;width:12.1px;height:78.3px;background:#463a84;border-color:#1c1540"><i style="left:3px;top:70px;width:3px;height:2px;background:#b8a8e8"></i><i style="left:8px;top:70px;width:3px;height:2px;background:#b8a8e8"></i></div>
<div class="rg" style="left:1402.8px;top:510.6px;width:12.7px;height:78.3px;background:#463a84;border-color:#1c1540"><i style="left:3px;top:70px;width:3px;height:2px;background:#b8a8e8"></i><i style="left:8px;top:70px;width:3px;height:2px;background:#b8a8e8"></i></div>
<div class="rg" style="left:717.1px;top:592.0px;width:107.4px;height:78.3px;background:#5c3099;border-color:#20103f"><i style="left:3px;top:46px;width:3px;height:2.5px;background:#d0b8ff"></i><i style="left:10px;top:46px;width:3px;height:2.5px;background:#d0b8ff"></i><i style="left:17px;top:46px;width:3px;height:2.5px;background:#d0b8ff"></i><i style="left:23px;top:46px;width:3px;height:2.5px;background:#d0b8ff"></i><i style="left:30px;top:46px;width:3px;height:2.5px;background:#d0b8ff"></i><i style="left:36px;top:46px;width:3px;height:2.5px;background:#d0b8ff"></i><i style="left:43px;top:46px;width:3px;height:2.5px;background:#d0b8ff"></i><i style="left:49px;top:46px;width:3px;height:2.5px;background:#d0b8ff"></i><i style="left:55px;top:46px;width:3px;height:2.5px;background:#d0b8ff"></i><i style="left:61px;top:46px;width:3px;height:2.5px;background:#d0b8ff"></i><i style="left:73px;top:46px;width:3px;height:2.5px;background:#d0b8ff"></i><i style="left:79px;top:46px;width:3px;height:2.5px;background:#d0b8ff"></i><i style="left:85px;top:46px;width:3px;height:2.5px;background:#d0b8ff"></i><i style="left:97px;top:46px;width:3px;height:2.5px;background:#d0b8ff"></i><b style="position:absolute;left:6px;top:1.5px;font-weight:normal;font-size:13px;line-height:15px;color:#f2eeff;white-space:nowrap;-webkit-text-stroke:0.25px #f2eeff">Snares</b></div>
<div class="rg" style="left:824.4px;top:592.0px;width:107.4px;height:78.3px;background:#5c3099;border-color:#20103f"><i style="left:3px;top:46px;width:3px;height:2.5px;background:#d0b8ff"></i><i style="left:9px;top:46px;width:3px;height:2.5px;background:#d0b8ff"></i><i style="left:15px;top:46px;width:3px;height:2.5px;background:#d0b8ff"></i><i style="left:22px;top:46px;width:3px;height:2.5px;background:#d0b8ff"></i><i style="left:34px;top:46px;width:3px;height:2.5px;background:#d0b8ff"></i><i style="left:41px;top:46px;width:3px;height:2.5px;background:#d0b8ff"></i><i style="left:47px;top:46px;width:3px;height:2.5px;background:#d0b8ff"></i><i style="left:54px;top:46px;width:3px;height:2.5px;background:#d0b8ff"></i><i style="left:66px;top:46px;width:3px;height:2.5px;background:#d0b8ff"></i><i style="left:73px;top:46px;width:3px;height:2.5px;background:#d0b8ff"></i><i style="left:80px;top:46px;width:3px;height:2.5px;background:#d0b8ff"></i><i style="left:86px;top:46px;width:3px;height:2.5px;background:#d0b8ff"></i><i style="left:92px;top:46px;width:3px;height:2.5px;background:#d0b8ff"></i><i style="left:98px;top:46px;width:3px;height:2.5px;background:#d0b8ff"></i><b style="position:absolute;left:6px;top:1.5px;font-weight:normal;font-size:13px;line-height:15px;color:#f2eeff;white-space:nowrap;-webkit-text-stroke:0.25px #f2eeff">Snares</b></div>
<div class="rg" style="left:958.6px;top:592.0px;width:120.8px;height:78.3px;background:#5c3099;border-color:#20103f"><i style="left:3px;top:46px;width:3px;height:2.5px;background:#d0b8ff"></i><i style="left:15px;top:46px;width:3px;height:2.5px;background:#d0b8ff"></i><i style="left:21px;top:46px;width:3px;height:2.5px;background:#d0b8ff"></i><i style="left:28px;top:46px;width:3px;height:2.5px;background:#d0b8ff"></i><i style="left:34px;top:46px;width:3px;height:2.5px;background:#d0b8ff"></i><i style="left:46px;top:46px;width:3px;height:2.5px;background:#d0b8ff"></i><i style="left:52px;top:46px;width:3px;height:2.5px;background:#d0b8ff"></i><i style="left:64px;top:46px;width:3px;height:2.5px;background:#d0b8ff"></i><i style="left:71px;top:46px;width:3px;height:2.5px;background:#d0b8ff"></i><i style="left:77px;top:46px;width:3px;height:2.5px;background:#d0b8ff"></i><i style="left:83px;top:46px;width:3px;height:2.5px;background:#d0b8ff"></i><i style="left:95px;top:46px;width:3px;height:2.5px;background:#d0b8ff"></i><i style="left:101px;top:46px;width:3px;height:2.5px;background:#d0b8ff"></i><i style="left:113px;top:46px;width:3px;height:2.5px;background:#d0b8ff"></i><b style="position:absolute;left:6px;top:1.5px;font-weight:normal;font-size:13px;line-height:15px;color:#f2eeff;white-space:nowrap;-webkit-text-stroke:0.25px #f2eeff">Snares</b></div>
<div class="rg" style="left:1092.8px;top:592.0px;width:107.4px;height:78.3px;background:#5c3099;border-color:#20103f"><i style="left:3px;top:46px;width:3px;height:2.5px;background:#d0b8ff"></i><i style="left:15px;top:46px;width:3px;height:2.5px;background:#d0b8ff"></i><i style="left:22px;top:46px;width:3px;height:2.5px;background:#d0b8ff"></i><i style="left:28px;top:46px;width:3px;height:2.5px;background:#d0b8ff"></i><i style="left:40px;top:46px;width:3px;height:2.5px;background:#d0b8ff"></i><i style="left:52px;top:46px;width:3px;height:2.5px;background:#d0b8ff"></i><i style="left:64px;top:46px;width:3px;height:2.5px;background:#d0b8ff"></i><i style="left:70px;top:46px;width:3px;height:2.5px;background:#d0b8ff"></i><i style="left:76px;top:46px;width:3px;height:2.5px;background:#d0b8ff"></i><i style="left:82px;top:46px;width:3px;height:2.5px;background:#d0b8ff"></i><i style="left:88px;top:46px;width:3px;height:2.5px;background:#d0b8ff"></i><i style="left:94px;top:46px;width:3px;height:2.5px;background:#d0b8ff"></i><i style="left:100px;top:46px;width:3px;height:2.5px;background:#d0b8ff"></i><b style="position:absolute;left:6px;top:1.5px;font-weight:normal;font-size:13px;line-height:15px;color:#f2eeff;white-space:nowrap;-webkit-text-stroke:0.25px #f2eeff">Snares</b></div>
<div class="rg" style="left:1200.2px;top:592.0px;width:53.7px;height:78.3px;background:#5c3099;border-color:#20103f"><i style="left:3px;top:46px;width:3px;height:2.5px;background:#d0b8ff"></i><i style="left:9px;top:46px;width:3px;height:2.5px;background:#d0b8ff"></i><i style="left:21px;top:46px;width:3px;height:2.5px;background:#d0b8ff"></i><i style="left:28px;top:46px;width:3px;height:2.5px;background:#d0b8ff"></i><i style="left:34px;top:46px;width:3px;height:2.5px;background:#d0b8ff"></i><i style="left:40px;top:46px;width:3px;height:2.5px;background:#d0b8ff"></i><i style="left:46px;top:46px;width:3px;height:2.5px;background:#d0b8ff"></i><b style="position:absolute;left:6px;top:1.5px;font-weight:normal;font-size:13px;line-height:15px;color:#f2eeff;white-space:nowrap;-webkit-text-stroke:0.25px #f2eeff">Snares</b></div>
<div class="rg" style="left:1295.5px;top:592.0px;width:12.1px;height:78.3px;background:#5c3099;border-color:#20103f"><i style="left:3px;top:46px;width:3px;height:2.5px;background:#d0b8ff"></i></div>
<div class="rg" style="left:1307.6px;top:592.0px;width:93.9px;height:78.3px;background:#5c3099;border-color:#20103f"><i style="left:3px;top:46px;width:3px;height:2.5px;background:#d0b8ff"></i><i style="left:9px;top:46px;width:3px;height:2.5px;background:#d0b8ff"></i><i style="left:21px;top:46px;width:3px;height:2.5px;background:#d0b8ff"></i><i style="left:27px;top:46px;width:3px;height:2.5px;background:#d0b8ff"></i><i style="left:33px;top:46px;width:3px;height:2.5px;background:#d0b8ff"></i><i style="left:39px;top:46px;width:3px;height:2.5px;background:#d0b8ff"></i><i style="left:46px;top:46px;width:3px;height:2.5px;background:#d0b8ff"></i><i style="left:52px;top:46px;width:3px;height:2.5px;background:#d0b8ff"></i><i style="left:59px;top:46px;width:3px;height:2.5px;background:#d0b8ff"></i><i style="left:65px;top:46px;width:3px;height:2.5px;background:#d0b8ff"></i><i style="left:72px;top:46px;width:3px;height:2.5px;background:#d0b8ff"></i><i style="left:79px;top:46px;width:3px;height:2.5px;background:#d0b8ff"></i><b style="position:absolute;left:6px;top:1.5px;font-weight:normal;font-size:13px;line-height:15px;color:#f2eeff;white-space:nowrap;-webkit-text-stroke:0.25px #f2eeff">Snares</b></div>
<div class="rg" style="left:1414.9px;top:592.0px;width:107.4px;height:78.3px;background:#5c3099;border-color:#20103f"><i style="left:3px;top:46px;width:3px;height:2.5px;background:#d0b8ff"></i><i style="left:9px;top:46px;width:3px;height:2.5px;background:#d0b8ff"></i><i style="left:15px;top:46px;width:3px;height:2.5px;background:#d0b8ff"></i><i style="left:22px;top:46px;width:3px;height:2.5px;background:#d0b8ff"></i><i style="left:34px;top:46px;width:3px;height:2.5px;background:#d0b8ff"></i><i style="left:46px;top:46px;width:3px;height:2.5px;background:#d0b8ff"></i><i style="left:52px;top:46px;width:3px;height:2.5px;background:#d0b8ff"></i><i style="left:58px;top:46px;width:3px;height:2.5px;background:#d0b8ff"></i><i style="left:64px;top:46px;width:3px;height:2.5px;background:#d0b8ff"></i><i style="left:76px;top:46px;width:3px;height:2.5px;background:#d0b8ff"></i><i style="left:82px;top:46px;width:3px;height:2.5px;background:#d0b8ff"></i><i style="left:88px;top:46px;width:3px;height:2.5px;background:#d0b8ff"></i><i style="left:94px;top:46px;width:3px;height:2.5px;background:#d0b8ff"></i><i style="left:100px;top:46px;width:3px;height:2.5px;background:#d0b8ff"></i><b style="position:absolute;left:6px;top:1.5px;font-weight:normal;font-size:13px;line-height:15px;color:#f2eeff;white-space:nowrap;-webkit-text-stroke:0.25px #f2eeff">Snares</b></div>
<div class="rg" style="left:1522.3px;top:592.0px;width:107.4px;height:78.3px;background:#5c3099;border-color:#20103f"><i style="left:3px;top:46px;width:3px;height:2.5px;background:#d0b8ff"></i><i style="left:15px;top:46px;width:3px;height:2.5px;background:#d0b8ff"></i><i style="left:21px;top:46px;width:3px;height:2.5px;background:#d0b8ff"></i><i style="left:27px;top:46px;width:3px;height:2.5px;background:#d0b8ff"></i><i style="left:34px;top:46px;width:3px;height:2.5px;background:#d0b8ff"></i><i style="left:46px;top:46px;width:3px;height:2.5px;background:#d0b8ff"></i><i style="left:52px;top:46px;width:3px;height:2.5px;background:#d0b8ff"></i><i style="left:58px;top:46px;width:3px;height:2.5px;background:#d0b8ff"></i><i style="left:64px;top:46px;width:3px;height:2.5px;background:#d0b8ff"></i><i style="left:70px;top:46px;width:3px;height:2.5px;background:#d0b8ff"></i><i style="left:77px;top:46px;width:3px;height:2.5px;background:#d0b8ff"></i><i style="left:83px;top:46px;width:3px;height:2.5px;background:#d0b8ff"></i><i style="left:89px;top:46px;width:3px;height:2.5px;background:#d0b8ff"></i><i style="left:101px;top:46px;width:3px;height:2.5px;background:#d0b8ff"></i><b style="position:absolute;left:6px;top:1.5px;font-weight:normal;font-size:13px;line-height:15px;color:#f2eeff;white-space:nowrap;-webkit-text-stroke:0.25px #f2eeff">Snares</b></div>
<div class="rg" style="left:931.8px;top:592.0px;width:26.8px;height:78.3px;background:rgba(78,78,78,0.9);border-color:#222222"><i style="left:3px;top:46px;width:3px;height:2.5px;background:#8a8a8a"></i><i style="left:9px;top:46px;width:3px;height:2.5px;background:#8a8a8a"></i><i style="left:6px;top:7px;width:10px;height:10px;border-radius:50%;background:#d050f0"></i></div>
<div class="rg" style="left:824.4px;top:673.3px;width:107.4px;height:78.3px;background:linear-gradient(#4c3a82, #41316c);border-color:#1a1235"><i style="left:2px;top:50px;width:93.36000000000001px;height:2.5px;background:#b8a8e8"></i><i style="left:93.36000000000001px;top:39px;width:7px;height:3px;background:#b8a8e8"></i><b style="position:absolute;left:6px;top:1.5px;font-weight:normal;font-size:13px;line-height:15px;color:#f2eeff;white-space:nowrap;-webkit-text-stroke:0.25px #f2eeff">Hi-Hat - Slow Ja</b></div>
<div class="rg" style="left:1092.8px;top:673.3px;width:107.4px;height:78.3px;background:linear-gradient(#4c3a82, #41316c);border-color:#1a1235"><i style="left:2px;top:31px;width:93.3599999999999px;height:2.5px;background:#b8a8e8"></i><b style="position:absolute;left:6px;top:1.5px;font-weight:normal;font-size:13px;line-height:15px;color:#f2eeff;white-space:nowrap;-webkit-text-stroke:0.25px #f2eeff">Hi-Hat - Slow Ja</b></div>
<div class="rg" style="left:1200.2px;top:673.3px;width:40.3px;height:78.3px;background:linear-gradient(#4c3a82, #41316c);border-color:#1a1235"><i style="left:2px;top:31px;width:26.26000000000022px;height:2.5px;background:#b8a8e8"></i><b style="position:absolute;left:6px;top:1.5px;font-weight:normal;font-size:13px;line-height:15px;color:#f2eeff;white-space:nowrap;-webkit-text-stroke:0.25px #f2eeff">Hi-H</b></div>
<div class="rg" style="left:1414.9px;top:673.3px;width:107.4px;height:78.3px;background:linear-gradient(#4c3a82, #41316c);border-color:#1a1235"><i style="left:2px;top:31px;width:93.3599999999999px;height:2.5px;background:#b8a8e8"></i><b style="position:absolute;left:6px;top:1.5px;font-weight:normal;font-size:13px;line-height:15px;color:#f2eeff;white-space:nowrap;-webkit-text-stroke:0.25px #f2eeff">Hi-Hat - Slow Ja</b></div>
<div class="rg" style="left:985.5px;top:754.6px;width:53.7px;height:78.3px;background:#731690;border-color:#2a0838"><i style="left:2px;top:30px;width:10px;height:2.5px;background:#e0b8f0"></i><i style="left:15px;top:30px;width:12px;height:2.5px;background:#e0b8f0"></i><i style="left:30px;top:30px;width:12px;height:2.5px;background:#e0b8f0"></i><i style="left:45px;top:30px;width:4.679999999999836px;height:2.5px;background:#e0b8f0"></i><b style="position:absolute;left:6px;top:1.5px;font-weight:normal;font-size:13px;line-height:15px;color:#f2eeff;white-space:nowrap;-webkit-text-stroke:0.25px #f2eeff">Sleigh /</b></div>
<div class="rg" style="left:1039.2px;top:754.6px;width:40.3px;height:78.3px;background:#731690;border-color:#2a0838"><i style="left:2px;top:30px;width:12px;height:2.5px;background:#e0b8f0"></i><i style="left:17px;top:30px;width:8px;height:2.5px;background:#e0b8f0"></i><i style="left:28px;top:30px;width:8.260000000000218px;height:2.5px;background:#e0b8f0"></i><b style="position:absolute;left:6px;top:1.5px;font-weight:normal;font-size:13px;line-height:15px;color:#f2eeff;white-space:nowrap;-webkit-text-stroke:0.25px #f2eeff">Sleig</b></div>
<div class="rg" style="left:1307.6px;top:754.6px;width:53.7px;height:78.3px;background:#731690;border-color:#2a0838"><i style="left:2px;top:30px;width:10px;height:2.5px;background:#e0b8f0"></i><i style="left:15px;top:30px;width:10px;height:2.5px;background:#e0b8f0"></i><i style="left:28px;top:30px;width:12px;height:2.5px;background:#e0b8f0"></i><i style="left:43px;top:30px;width:6.680000000000064px;height:2.5px;background:#e0b8f0"></i><b style="position:absolute;left:6px;top:1.5px;font-weight:normal;font-size:13px;line-height:15px;color:#f2eeff;white-space:nowrap;-webkit-text-stroke:0.25px #f2eeff">Sleigh /</b></div>
<div class="rg" style="left:1361.2px;top:754.6px;width:40.3px;height:78.3px;background:#731690;border-color:#2a0838"><i style="left:2px;top:30px;width:10px;height:2.5px;background:#e0b8f0"></i><i style="left:15px;top:30px;width:12px;height:2.5px;background:#e0b8f0"></i><i style="left:30px;top:30px;width:6.259999999999991px;height:2.5px;background:#e0b8f0"></i><b style="position:absolute;left:6px;top:1.5px;font-weight:normal;font-size:13px;line-height:15px;color:#f2eeff;white-space:nowrap;-webkit-text-stroke:0.25px #f2eeff">Sleig</b></div>
<div class="rg" style="left:1522.3px;top:754.6px;width:53.7px;height:78.3px;background:#731690;border-color:#2a0838"><i style="left:2px;top:30px;width:12px;height:2.5px;background:#e0b8f0"></i><i style="left:17px;top:30px;width:12px;height:2.5px;background:#e0b8f0"></i><i style="left:32px;top:30px;width:10px;height:2.5px;background:#e0b8f0"></i><i style="left:45px;top:30px;width:4.680000000000064px;height:2.5px;background:#e0b8f0"></i><b style="position:absolute;left:6px;top:1.5px;font-weight:normal;font-size:13px;line-height:15px;color:#f2eeff;white-space:nowrap;-webkit-text-stroke:0.25px #f2eeff">Sleigh /</b></div>
<div class="rg" style="left:1576.0px;top:754.6px;width:44.3px;height:78.3px;background:#731690;border-color:#2a0838"><i style="left:2px;top:30px;width:8px;height:2.5px;background:#e0b8f0"></i><i style="left:13px;top:30px;width:10px;height:2.5px;background:#e0b8f0"></i><i style="left:26px;top:30px;width:8px;height:2.5px;background:#e0b8f0"></i><i style="left:37px;top:30px;width:3.286000000000058px;height:2.5px;background:#e0b8f0"></i><b style="position:absolute;left:6px;top:1.5px;font-weight:normal;font-size:13px;line-height:15px;color:#f2eeff;white-space:nowrap;-webkit-text-stroke:0.25px #f2eeff">Sleigh</b></div>
<div class="rg" style="left:931.8px;top:754.6px;width:53.7px;height:78.3px;background:rgba(78,78,78,0.9);border-color:#222222"><i style="left:2px;top:30px;width:8px;height:2.5px;background:#8a8a8a"></i><i style="left:13px;top:30px;width:10px;height:2.5px;background:#8a8a8a"></i><i style="left:26px;top:30px;width:10px;height:2.5px;background:#8a8a8a"></i><i style="left:39px;top:30px;width:10px;height:2.5px;background:#8a8a8a"></i><i style="left:6px;top:7px;width:10px;height:10px;border-radius:50%;background:#d050f0"></i><b style="position:absolute;left:22px;top:1.5px;font-weight:normal;font-size:13px;line-height:15px;color:#a0a0a0;white-space:nowrap;-webkit-text-stroke:0.25px #a0a0a0">Sleig</b></div>
<div class="rg" style="left:1253.9px;top:754.6px;width:53.7px;height:78.3px;background:rgba(78,78,78,0.9);border-color:#222222"><i style="left:2px;top:30px;width:8px;height:2.5px;background:#8a8a8a"></i><i style="left:13px;top:30px;width:12px;height:2.5px;background:#8a8a8a"></i><i style="left:28px;top:30px;width:8px;height:2.5px;background:#8a8a8a"></i><i style="left:39px;top:30px;width:10px;height:2.5px;background:#8a8a8a"></i><i style="left:6px;top:7px;width:10px;height:10px;border-radius:50%;background:#d050f0"></i><b style="position:absolute;left:22px;top:1.5px;font-weight:normal;font-size:13px;line-height:15px;color:#a0a0a0;white-space:nowrap;-webkit-text-stroke:0.25px #a0a0a0">Sleig</b></div>
<div class="rg" style="left:770.8px;top:835.9px;width:53.7px;height:78.3px;background:#6a1a6e;border-color:#280a2c"><i style="left:3px;top:54px;width:3px;height:2.5px;background:#d8a8e0;opacity:.8"></i><i style="left:10px;top:54px;width:6px;height:2.5px;background:#d8a8e0;opacity:.8"></i><i style="left:20px;top:54px;width:3px;height:2.5px;background:#d8a8e0;opacity:.8"></i><i style="left:35px;top:54px;width:6px;height:2.5px;background:#d8a8e0;opacity:.8"></i><i style="left:45px;top:54px;width:6px;height:2.5px;background:#d8a8e0;opacity:.8"></i><b style="position:absolute;left:6px;top:1.5px;font-weight:normal;font-size:13px;line-height:15px;color:#f2eeff;white-space:nowrap;-webkit-text-stroke:0.25px #f2eeff">Shake (</b></div>
<div class="rg" style="left:824.4px;top:835.9px;width:107.4px;height:78.3px;background:#6a1a6e;border-color:#280a2c"><i style="left:3px;top:54px;width:8px;height:2.5px;background:#d8a8e0;opacity:.8"></i><i style="left:15px;top:54px;width:3px;height:2.5px;background:#d8a8e0;opacity:.8"></i><i style="left:26px;top:54px;width:8px;height:2.5px;background:#d8a8e0;opacity:.8"></i><i style="left:38px;top:54px;width:3px;height:2.5px;background:#d8a8e0;opacity:.8"></i><i style="left:45px;top:54px;width:8px;height:2.5px;background:#d8a8e0;opacity:.8"></i><i style="left:65px;top:54px;width:8px;height:2.5px;background:#d8a8e0;opacity:.8"></i><i style="left:81px;top:54px;width:8px;height:2.5px;background:#d8a8e0;opacity:.8"></i><i style="left:93px;top:54px;width:6px;height:2.5px;background:#d8a8e0;opacity:.8"></i><b style="position:absolute;left:6px;top:1.5px;font-weight:normal;font-size:13px;line-height:15px;color:#f2eeff;white-space:nowrap;-webkit-text-stroke:0.25px #f2eeff">Shake (it)</b></div>
<div class="rg" style="left:985.5px;top:835.9px;width:93.9px;height:78.3px;background:#6a1a6e;border-color:#280a2c"><i style="left:3px;top:54px;width:3px;height:2.5px;background:#d8a8e0;opacity:.8"></i><i style="left:18px;top:54px;width:6px;height:2.5px;background:#d8a8e0;opacity:.8"></i><i style="left:28px;top:54px;width:6px;height:2.5px;background:#d8a8e0;opacity:.8"></i><i style="left:46px;top:54px;width:8px;height:2.5px;background:#d8a8e0;opacity:.8"></i><i style="left:62px;top:54px;width:3px;height:2.5px;background:#d8a8e0;opacity:.8"></i><i style="left:73px;top:54px;width:6px;height:2.5px;background:#d8a8e0;opacity:.8"></i><b style="position:absolute;left:6px;top:1.5px;font-weight:normal;font-size:13px;line-height:15px;color:#f2eeff;white-space:nowrap;-webkit-text-stroke:0.25px #f2eeff">Shake (it)</b></div>
<div class="rg" style="left:1092.8px;top:835.9px;width:107.4px;height:78.3px;background:#6a1a6e;border-color:#280a2c"><i style="left:3px;top:54px;width:6px;height:2.5px;background:#d8a8e0;opacity:.8"></i><i style="left:21px;top:54px;width:3px;height:2.5px;background:#d8a8e0;opacity:.8"></i><i style="left:28px;top:54px;width:3px;height:2.5px;background:#d8a8e0;opacity:.8"></i><i style="left:35px;top:54px;width:3px;height:2.5px;background:#d8a8e0;opacity:.8"></i><i style="left:46px;top:54px;width:6px;height:2.5px;background:#d8a8e0;opacity:.8"></i><i style="left:56px;top:54px;width:3px;height:2.5px;background:#d8a8e0;opacity:.8"></i><i style="left:67px;top:54px;width:3px;height:2.5px;background:#d8a8e0;opacity:.8"></i><i style="left:78px;top:54px;width:6px;height:2.5px;background:#d8a8e0;opacity:.8"></i><i style="left:92px;top:54px;width:3px;height:2.5px;background:#d8a8e0;opacity:.8"></i><b style="position:absolute;left:6px;top:1.5px;font-weight:normal;font-size:13px;line-height:15px;color:#f2eeff;white-space:nowrap;-webkit-text-stroke:0.25px #f2eeff">Shake (it)</b></div>
<div class="rg" style="left:1200.2px;top:835.9px;width:53.7px;height:78.3px;background:#6a1a6e;border-color:#280a2c"><i style="left:3px;top:54px;width:8px;height:2.5px;background:#d8a8e0;opacity:.8"></i><i style="left:23px;top:54px;width:6px;height:2.5px;background:#d8a8e0;opacity:.8"></i><i style="left:33px;top:54px;width:6px;height:2.5px;background:#d8a8e0;opacity:.8"></i><i style="left:43px;top:54px;width:3px;height:2.5px;background:#d8a8e0;opacity:.8"></i><b style="position:absolute;left:6px;top:1.5px;font-weight:normal;font-size:13px;line-height:15px;color:#f2eeff;white-space:nowrap;-webkit-text-stroke:0.25px #f2eeff">Shake (</b></div>
<div class="rg" style="left:1307.6px;top:835.9px;width:93.9px;height:78.3px;background:#6a1a6e;border-color:#280a2c"><i style="left:3px;top:54px;width:3px;height:2.5px;background:#d8a8e0;opacity:.8"></i><i style="left:14px;top:54px;width:3px;height:2.5px;background:#d8a8e0;opacity:.8"></i><i style="left:29px;top:54px;width:3px;height:2.5px;background:#d8a8e0;opacity:.8"></i><i style="left:40px;top:54px;width:3px;height:2.5px;background:#d8a8e0;opacity:.8"></i><i style="left:55px;top:54px;width:3px;height:2.5px;background:#d8a8e0;opacity:.8"></i><i style="left:62px;top:54px;width:6px;height:2.5px;background:#d8a8e0;opacity:.8"></i><i style="left:72px;top:54px;width:8px;height:2.5px;background:#d8a8e0;opacity:.8"></i><i style="left:84px;top:54px;width:6px;height:2.5px;background:#d8a8e0;opacity:.8"></i><b style="position:absolute;left:6px;top:1.5px;font-weight:normal;font-size:13px;line-height:15px;color:#f2eeff;white-space:nowrap;-webkit-text-stroke:0.25px #f2eeff">Shake (it)</b></div>
<div class="rg" style="left:1414.9px;top:835.9px;width:107.4px;height:78.3px;background:#6a1a6e;border-color:#280a2c"><i style="left:3px;top:54px;width:8px;height:2.5px;background:#d8a8e0;opacity:.8"></i><i style="left:19px;top:54px;width:3px;height:2.5px;background:#d8a8e0;opacity:.8"></i><i style="left:26px;top:54px;width:3px;height:2.5px;background:#d8a8e0;opacity:.8"></i><i style="left:33px;top:54px;width:3px;height:2.5px;background:#d8a8e0;opacity:.8"></i><i style="left:44px;top:54px;width:3px;height:2.5px;background:#d8a8e0;opacity:.8"></i><i style="left:51px;top:54px;width:3px;height:2.5px;background:#d8a8e0;opacity:.8"></i><i style="left:62px;top:54px;width:6px;height:2.5px;background:#d8a8e0;opacity:.8"></i><i style="left:80px;top:54px;width:3px;height:2.5px;background:#d8a8e0;opacity:.8"></i><i style="left:91px;top:54px;width:8px;height:2.5px;background:#d8a8e0;opacity:.8"></i><b style="position:absolute;left:6px;top:1.5px;font-weight:normal;font-size:13px;line-height:15px;color:#f2eeff;white-space:nowrap;-webkit-text-stroke:0.25px #f2eeff">Shake (it)</b></div>
<div class="rg" style="left:1522.3px;top:835.9px;width:53.7px;height:78.3px;background:#6a1a6e;border-color:#280a2c"><i style="left:3px;top:54px;width:3px;height:2.5px;background:#d8a8e0;opacity:.8"></i><i style="left:14px;top:54px;width:6px;height:2.5px;background:#d8a8e0;opacity:.8"></i><i style="left:24px;top:54px;width:6px;height:2.5px;background:#d8a8e0;opacity:.8"></i><i style="left:34px;top:54px;width:3px;height:2.5px;background:#d8a8e0;opacity:.8"></i><i style="left:41px;top:54px;width:3px;height:2.5px;background:#d8a8e0;opacity:.8"></i><b style="position:absolute;left:6px;top:1.5px;font-weight:normal;font-size:13px;line-height:15px;color:#f2eeff;white-space:nowrap;-webkit-text-stroke:0.25px #f2eeff">Shake (</b></div>
<div class="rg" style="left:1576.0px;top:835.9px;width:44.3px;height:78.3px;background:#6a1a6e;border-color:#280a2c"><i style="left:3px;top:54px;width:8px;height:2.5px;background:#d8a8e0;opacity:.8"></i><i style="left:15px;top:54px;width:8px;height:2.5px;background:#d8a8e0;opacity:.8"></i><i style="left:27px;top:54px;width:8px;height:2.5px;background:#d8a8e0;opacity:.8"></i><b style="position:absolute;left:6px;top:1.5px;font-weight:normal;font-size:13px;line-height:15px;color:#f2eeff;white-space:nowrap;-webkit-text-stroke:0.25px #f2eeff">Shake</b></div>
<div class="rg" style="left:931.8px;top:835.9px;width:53.7px;height:78.3px;background:rgba(78,78,78,0.9);border-color:#222222"><i style="left:3px;top:54px;width:8px;height:2.5px;background:#8a8a8a;opacity:.8"></i><i style="left:23px;top:54px;width:8px;height:2.5px;background:#8a8a8a;opacity:.8"></i><i style="left:43px;top:54px;width:6px;height:2.5px;background:#8a8a8a;opacity:.8"></i><i style="left:6px;top:7px;width:10px;height:10px;border-radius:50%;background:#d050f0"></i><b style="position:absolute;left:22px;top:1.5px;font-weight:normal;font-size:13px;line-height:15px;color:#a0a0a0;white-space:nowrap;-webkit-text-stroke:0.25px #a0a0a0">Shak</b></div>
<div class="rg" style="left:1253.9px;top:835.9px;width:53.7px;height:78.3px;background:rgba(78,78,78,0.9);border-color:#222222"><i style="left:3px;top:54px;width:3px;height:2.5px;background:#8a8a8a;opacity:.8"></i><i style="left:10px;top:54px;width:6px;height:2.5px;background:#8a8a8a;opacity:.8"></i><i style="left:20px;top:54px;width:3px;height:2.5px;background:#8a8a8a;opacity:.8"></i><i style="left:31px;top:54px;width:6px;height:2.5px;background:#8a8a8a;opacity:.8"></i><i style="left:41px;top:54px;width:3px;height:2.5px;background:#8a8a8a;opacity:.8"></i><i style="left:6px;top:7px;width:10px;height:10px;border-radius:50%;background:#d050f0"></i><b style="position:absolute;left:22px;top:1.5px;font-weight:normal;font-size:13px;line-height:15px;color:#a0a0a0;white-space:nowrap;-webkit-text-stroke:0.25px #a0a0a0">Shak</b></div>
<div class="rg" style="left:663.4px;top:917.3px;width:53.7px;height:78.3px;background:#aa2f1f;border-color:#3a0e08"><i style="left:4.0px;top:31px;width:3px;height:2.5px;background:#f0a080;opacity:.75"></i><i style="left:30.8px;top:31px;width:3px;height:2.5px;background:#f0a080;opacity:.75"></i><i style="left:3.0px;top:45px;width:3px;height:2.5px;background:#f0a080;opacity:.75"></i><i style="left:16.4px;top:45px;width:3px;height:2.5px;background:#f0a080;opacity:.75"></i><i style="left:29.8px;top:45px;width:3px;height:2.5px;background:#f0a080;opacity:.75"></i><i style="left:43.3px;top:45px;width:3px;height:2.5px;background:#f0a080;opacity:.75"></i><i style="left:4.0px;top:68px;width:3px;height:2.5px;background:#f0a080;opacity:.75"></i><i style="left:17.4px;top:68px;width:3px;height:2.5px;background:#f0a080;opacity:.75"></i><i style="left:30.8px;top:68px;width:3px;height:2.5px;background:#f0a080;opacity:.75"></i><i style="left:44.3px;top:68px;width:3px;height:2.5px;background:#f0a080;opacity:.75"></i><i style="left:24.3px;top:-3.5px;width:5px;height:5px;background:#2a1410;transform:rotate(45deg)"></i><i style="left:24.3px;top:74.8px;width:5px;height:5px;background:#2a1410;transform:rotate(45deg)"></i><b style="position:absolute;left:6px;top:1.5px;font-weight:normal;font-size:13px;line-height:15px;color:#f2eeff;white-space:nowrap;-webkit-text-stroke:0.25px #f2eeff">Chamb</b></div>
<div class="rg" style="left:717.1px;top:917.3px;width:107.4px;height:78.3px;background:#aa2f1f;border-color:#3a0e08"><i style="left:4.0px;top:31px;width:3px;height:2.5px;background:#f0a080;opacity:.75"></i><i style="left:30.8px;top:31px;width:3px;height:2.5px;background:#f0a080;opacity:.75"></i><i style="left:57.7px;top:31px;width:3px;height:2.5px;background:#f0a080;opacity:.75"></i><i style="left:84.5px;top:31px;width:3px;height:2.5px;background:#f0a080;opacity:.75"></i><i style="left:3.0px;top:45px;width:3px;height:2.5px;background:#f0a080;opacity:.75"></i><i style="left:16.4px;top:45px;width:3px;height:2.5px;background:#f0a080;opacity:.75"></i><i style="left:29.8px;top:45px;width:3px;height:2.5px;background:#f0a080;opacity:.75"></i><i style="left:43.3px;top:45px;width:3px;height:2.5px;background:#f0a080;opacity:.75"></i><i style="left:56.7px;top:45px;width:3px;height:2.5px;background:#f0a080;opacity:.75"></i><i style="left:70.1px;top:45px;width:3px;height:2.5px;background:#f0a080;opacity:.75"></i><i style="left:83.5px;top:45px;width:3px;height:2.5px;background:#f0a080;opacity:.75"></i><i style="left:96.9px;top:45px;width:3px;height:2.5px;background:#f0a080;opacity:.75"></i><i style="left:4.0px;top:68px;width:3px;height:2.5px;background:#f0a080;opacity:.75"></i><i style="left:17.4px;top:68px;width:3px;height:2.5px;background:#f0a080;opacity:.75"></i><i style="left:30.8px;top:68px;width:3px;height:2.5px;background:#f0a080;opacity:.75"></i><i style="left:44.3px;top:68px;width:3px;height:2.5px;background:#f0a080;opacity:.75"></i><i style="left:57.7px;top:68px;width:3px;height:2.5px;background:#f0a080;opacity:.75"></i><i style="left:71.1px;top:68px;width:3px;height:2.5px;background:#f0a080;opacity:.75"></i><i style="left:84.5px;top:68px;width:3px;height:2.5px;background:#f0a080;opacity:.75"></i><i style="left:97.9px;top:68px;width:3px;height:2.5px;background:#f0a080;opacity:.75"></i><i style="left:24.3px;top:-3.5px;width:5px;height:5px;background:#2a1410;transform:rotate(45deg)"></i><i style="left:24.3px;top:74.8px;width:5px;height:5px;background:#2a1410;transform:rotate(45deg)"></i><i style="left:51.2px;top:-3.5px;width:5px;height:5px;background:#2a1410;transform:rotate(45deg)"></i><i style="left:51.2px;top:74.8px;width:5px;height:5px;background:#2a1410;transform:rotate(45deg)"></i><i style="left:78.0px;top:-3.5px;width:5px;height:5px;background:#2a1410;transform:rotate(45deg)"></i><i style="left:78.0px;top:74.8px;width:5px;height:5px;background:#2a1410;transform:rotate(45deg)"></i><b style="position:absolute;left:6px;top:1.5px;font-weight:normal;font-size:13px;line-height:15px;color:#f2eeff;white-space:nowrap;-webkit-text-stroke:0.25px #f2eeff">Chamber Choir</b></div>
<div class="rg" style="left:824.4px;top:917.3px;width:107.4px;height:78.3px;background:#aa2f1f;border-color:#3a0e08"><i style="left:4.0px;top:31px;width:3px;height:2.5px;background:#f0a080;opacity:.75"></i><i style="left:30.8px;top:31px;width:3px;height:2.5px;background:#f0a080;opacity:.75"></i><i style="left:57.7px;top:31px;width:3px;height:2.5px;background:#f0a080;opacity:.75"></i><i style="left:84.5px;top:31px;width:3px;height:2.5px;background:#f0a080;opacity:.75"></i><i style="left:3.0px;top:45px;width:3px;height:2.5px;background:#f0a080;opacity:.75"></i><i style="left:16.4px;top:45px;width:3px;height:2.5px;background:#f0a080;opacity:.75"></i><i style="left:29.8px;top:45px;width:3px;height:2.5px;background:#f0a080;opacity:.75"></i><i style="left:43.3px;top:45px;width:3px;height:2.5px;background:#f0a080;opacity:.75"></i><i style="left:56.7px;top:45px;width:3px;height:2.5px;background:#f0a080;opacity:.75"></i><i style="left:70.1px;top:45px;width:3px;height:2.5px;background:#f0a080;opacity:.75"></i><i style="left:83.5px;top:45px;width:3px;height:2.5px;background:#f0a080;opacity:.75"></i><i style="left:96.9px;top:45px;width:3px;height:2.5px;background:#f0a080;opacity:.75"></i><i style="left:4.0px;top:68px;width:3px;height:2.5px;background:#f0a080;opacity:.75"></i><i style="left:17.4px;top:68px;width:3px;height:2.5px;background:#f0a080;opacity:.75"></i><i style="left:30.8px;top:68px;width:3px;height:2.5px;background:#f0a080;opacity:.75"></i><i style="left:44.3px;top:68px;width:3px;height:2.5px;background:#f0a080;opacity:.75"></i><i style="left:57.7px;top:68px;width:3px;height:2.5px;background:#f0a080;opacity:.75"></i><i style="left:71.1px;top:68px;width:3px;height:2.5px;background:#f0a080;opacity:.75"></i><i style="left:84.5px;top:68px;width:3px;height:2.5px;background:#f0a080;opacity:.75"></i><i style="left:97.9px;top:68px;width:3px;height:2.5px;background:#f0a080;opacity:.75"></i><i style="left:24.3px;top:-3.5px;width:5px;height:5px;background:#2a1410;transform:rotate(45deg)"></i><i style="left:24.3px;top:74.8px;width:5px;height:5px;background:#2a1410;transform:rotate(45deg)"></i><i style="left:51.2px;top:-3.5px;width:5px;height:5px;background:#2a1410;transform:rotate(45deg)"></i><i style="left:51.2px;top:74.8px;width:5px;height:5px;background:#2a1410;transform:rotate(45deg)"></i><i style="left:78.0px;top:-3.5px;width:5px;height:5px;background:#2a1410;transform:rotate(45deg)"></i><i style="left:78.0px;top:74.8px;width:5px;height:5px;background:#2a1410;transform:rotate(45deg)"></i><b style="position:absolute;left:6px;top:1.5px;font-weight:normal;font-size:13px;line-height:15px;color:#f2eeff;white-space:nowrap;-webkit-text-stroke:0.25px #f2eeff">Chamber Choir</b></div>
<div class="rg" style="left:1092.8px;top:917.3px;width:308.7px;height:78.3px;background:#aa2f1f;border-color:#3a0e08"><i style="left:4.0px;top:31px;width:3px;height:2.5px;background:#f0a080;opacity:.75"></i><i style="left:30.8px;top:31px;width:3px;height:2.5px;background:#f0a080;opacity:.75"></i><i style="left:57.7px;top:31px;width:3px;height:2.5px;background:#f0a080;opacity:.75"></i><i style="left:84.5px;top:31px;width:3px;height:2.5px;background:#f0a080;opacity:.75"></i><i style="left:111.4px;top:31px;width:3px;height:2.5px;background:#f0a080;opacity:.75"></i><i style="left:138.2px;top:31px;width:3px;height:2.5px;background:#f0a080;opacity:.75"></i><i style="left:165.0px;top:31px;width:3px;height:2.5px;background:#f0a080;opacity:.75"></i><i style="left:191.9px;top:31px;width:3px;height:2.5px;background:#f0a080;opacity:.75"></i><i style="left:218.7px;top:31px;width:3px;height:2.5px;background:#f0a080;opacity:.75"></i><i style="left:245.6px;top:31px;width:3px;height:2.5px;background:#f0a080;opacity:.75"></i><i style="left:272.4px;top:31px;width:3px;height:2.5px;background:#f0a080;opacity:.75"></i><i style="left:299.2px;top:31px;width:3px;height:2.5px;background:#f0a080;opacity:.75"></i><i style="left:3.0px;top:45px;width:3px;height:2.5px;background:#f0a080;opacity:.75"></i><i style="left:16.4px;top:45px;width:3px;height:2.5px;background:#f0a080;opacity:.75"></i><i style="left:29.8px;top:45px;width:3px;height:2.5px;background:#f0a080;opacity:.75"></i><i style="left:43.3px;top:45px;width:3px;height:2.5px;background:#f0a080;opacity:.75"></i><i style="left:56.7px;top:45px;width:3px;height:2.5px;background:#f0a080;opacity:.75"></i><i style="left:70.1px;top:45px;width:3px;height:2.5px;background:#f0a080;opacity:.75"></i><i style="left:83.5px;top:45px;width:3px;height:2.5px;background:#f0a080;opacity:.75"></i><i style="left:96.9px;top:45px;width:3px;height:2.5px;background:#f0a080;opacity:.75"></i><i style="left:110.4px;top:45px;width:3px;height:2.5px;background:#f0a080;opacity:.75"></i><i style="left:123.8px;top:45px;width:3px;height:2.5px;background:#f0a080;opacity:.75"></i><i style="left:137.2px;top:45px;width:3px;height:2.5px;background:#f0a080;opacity:.75"></i><i style="left:150.6px;top:45px;width:3px;height:2.5px;background:#f0a080;opacity:.75"></i><i style="left:164.0px;top:45px;width:3px;height:2.5px;background:#f0a080;opacity:.75"></i><i style="left:177.5px;top:45px;width:3px;height:2.5px;background:#f0a080;opacity:.75"></i><i style="left:190.9px;top:45px;width:3px;height:2.5px;background:#f0a080;opacity:.75"></i><i style="left:204.3px;top:45px;width:3px;height:2.5px;background:#f0a080;opacity:.75"></i><i style="left:217.7px;top:45px;width:3px;height:2.5px;background:#f0a080;opacity:.75"></i><i style="left:231.1px;top:45px;width:3px;height:2.5px;background:#f0a080;opacity:.75"></i><i style="left:244.6px;top:45px;width:3px;height:2.5px;background:#f0a080;opacity:.75"></i><i style="left:258.0px;top:45px;width:3px;height:2.5px;background:#f0a080;opacity:.75"></i><i style="left:271.4px;top:45px;width:3px;height:2.5px;background:#f0a080;opacity:.75"></i><i style="left:284.8px;top:45px;width:3px;height:2.5px;background:#f0a080;opacity:.75"></i><i style="left:298.2px;top:45px;width:3px;height:2.5px;background:#f0a080;opacity:.75"></i><i style="left:4.0px;top:68px;width:3px;height:2.5px;background:#f0a080;opacity:.75"></i><i style="left:17.4px;top:68px;width:3px;height:2.5px;background:#f0a080;opacity:.75"></i><i style="left:30.8px;top:68px;width:3px;height:2.5px;background:#f0a080;opacity:.75"></i><i style="left:44.3px;top:68px;width:3px;height:2.5px;background:#f0a080;opacity:.75"></i><i style="left:57.7px;top:68px;width:3px;height:2.5px;background:#f0a080;opacity:.75"></i><i style="left:71.1px;top:68px;width:3px;height:2.5px;background:#f0a080;opacity:.75"></i><i style="left:84.5px;top:68px;width:3px;height:2.5px;background:#f0a080;opacity:.75"></i><i style="left:97.9px;top:68px;width:3px;height:2.5px;background:#f0a080;opacity:.75"></i><i style="left:111.4px;top:68px;width:3px;height:2.5px;background:#f0a080;opacity:.75"></i><i style="left:124.8px;top:68px;width:3px;height:2.5px;background:#f0a080;opacity:.75"></i><i style="left:138.2px;top:68px;width:3px;height:2.5px;background:#f0a080;opacity:.75"></i><i style="left:151.6px;top:68px;width:3px;height:2.5px;background:#f0a080;opacity:.75"></i><i style="left:165.0px;top:68px;width:3px;height:2.5px;background:#f0a080;opacity:.75"></i><i style="left:178.5px;top:68px;width:3px;height:2.5px;background:#f0a080;opacity:.75"></i><i style="left:191.9px;top:68px;width:3px;height:2.5px;background:#f0a080;opacity:.75"></i><i style="left:205.3px;top:68px;width:3px;height:2.5px;background:#f0a080;opacity:.75"></i><i style="left:218.7px;top:68px;width:3px;height:2.5px;background:#f0a080;opacity:.75"></i><i style="left:232.1px;top:68px;width:3px;height:2.5px;background:#f0a080;opacity:.75"></i><i style="left:245.6px;top:68px;width:3px;height:2.5px;background:#f0a080;opacity:.75"></i><i style="left:259.0px;top:68px;width:3px;height:2.5px;background:#f0a080;opacity:.75"></i><i style="left:272.4px;top:68px;width:3px;height:2.5px;background:#f0a080;opacity:.75"></i><i style="left:285.8px;top:68px;width:3px;height:2.5px;background:#f0a080;opacity:.75"></i><i style="left:299.2px;top:68px;width:3px;height:2.5px;background:#f0a080;opacity:.75"></i><i style="left:24.3px;top:-3.5px;width:5px;height:5px;background:#2a1410;transform:rotate(45deg)"></i><i style="left:24.3px;top:74.8px;width:5px;height:5px;background:#2a1410;transform:rotate(45deg)"></i><i style="left:51.2px;top:-3.5px;width:5px;height:5px;background:#2a1410;transform:rotate(45deg)"></i><i style="left:51.2px;top:74.8px;width:5px;height:5px;background:#2a1410;transform:rotate(45deg)"></i><i style="left:78.0px;top:-3.5px;width:5px;height:5px;background:#2a1410;transform:rotate(45deg)"></i><i style="left:78.0px;top:74.8px;width:5px;height:5px;background:#2a1410;transform:rotate(45deg)"></i><i style="left:104.9px;top:-3.5px;width:5px;height:5px;background:#2a1410;transform:rotate(45deg)"></i><i style="left:104.9px;top:74.8px;width:5px;height:5px;background:#2a1410;transform:rotate(45deg)"></i><i style="left:131.7px;top:-3.5px;width:5px;height:5px;background:#2a1410;transform:rotate(45deg)"></i><i style="left:131.7px;top:74.8px;width:5px;height:5px;background:#2a1410;transform:rotate(45deg)"></i><i style="left:158.5px;top:-3.5px;width:5px;height:5px;background:#2a1410;transform:rotate(45deg)"></i><i style="left:158.5px;top:74.8px;width:5px;height:5px;background:#2a1410;transform:rotate(45deg)"></i><i style="left:185.4px;top:-3.5px;width:5px;height:5px;background:#2a1410;transform:rotate(45deg)"></i><i style="left:185.4px;top:74.8px;width:5px;height:5px;background:#2a1410;transform:rotate(45deg)"></i><i style="left:212.2px;top:-3.5px;width:5px;height:5px;background:#2a1410;transform:rotate(45deg)"></i><i style="left:212.2px;top:74.8px;width:5px;height:5px;background:#2a1410;transform:rotate(45deg)"></i><i style="left:239.1px;top:-3.5px;width:5px;height:5px;background:#2a1410;transform:rotate(45deg)"></i><i style="left:239.1px;top:74.8px;width:5px;height:5px;background:#2a1410;transform:rotate(45deg)"></i><i style="left:265.9px;top:-3.5px;width:5px;height:5px;background:#2a1410;transform:rotate(45deg)"></i><i style="left:265.9px;top:74.8px;width:5px;height:5px;background:#2a1410;transform:rotate(45deg)"></i><i style="left:292.7px;top:-3.5px;width:5px;height:5px;background:#2a1410;transform:rotate(45deg)"></i><i style="left:292.7px;top:74.8px;width:5px;height:5px;background:#2a1410;transform:rotate(45deg)"></i><b style="position:absolute;left:6px;top:1.5px;font-weight:normal;font-size:13px;line-height:15px;color:#f2eeff;white-space:nowrap;-webkit-text-stroke:0.25px #f2eeff">Chamber Choir</b></div>
<div class="rg" style="left:1414.9px;top:917.3px;width:205.3px;height:78.3px;background:#aa2f1f;border-color:#3a0e08"><i style="left:4.0px;top:31px;width:3px;height:2.5px;background:#f0a080;opacity:.75"></i><i style="left:30.8px;top:31px;width:3px;height:2.5px;background:#f0a080;opacity:.75"></i><i style="left:57.7px;top:31px;width:3px;height:2.5px;background:#f0a080;opacity:.75"></i><i style="left:84.5px;top:31px;width:3px;height:2.5px;background:#f0a080;opacity:.75"></i><i style="left:111.4px;top:31px;width:3px;height:2.5px;background:#f0a080;opacity:.75"></i><i style="left:138.2px;top:31px;width:3px;height:2.5px;background:#f0a080;opacity:.75"></i><i style="left:165.0px;top:31px;width:3px;height:2.5px;background:#f0a080;opacity:.75"></i><i style="left:191.9px;top:31px;width:3px;height:2.5px;background:#f0a080;opacity:.75"></i><i style="left:3.0px;top:45px;width:3px;height:2.5px;background:#f0a080;opacity:.75"></i><i style="left:16.4px;top:45px;width:3px;height:2.5px;background:#f0a080;opacity:.75"></i><i style="left:29.8px;top:45px;width:3px;height:2.5px;background:#f0a080;opacity:.75"></i><i style="left:43.3px;top:45px;width:3px;height:2.5px;background:#f0a080;opacity:.75"></i><i style="left:56.7px;top:45px;width:3px;height:2.5px;background:#f0a080;opacity:.75"></i><i style="left:70.1px;top:45px;width:3px;height:2.5px;background:#f0a080;opacity:.75"></i><i style="left:83.5px;top:45px;width:3px;height:2.5px;background:#f0a080;opacity:.75"></i><i style="left:96.9px;top:45px;width:3px;height:2.5px;background:#f0a080;opacity:.75"></i><i style="left:110.4px;top:45px;width:3px;height:2.5px;background:#f0a080;opacity:.75"></i><i style="left:123.8px;top:45px;width:3px;height:2.5px;background:#f0a080;opacity:.75"></i><i style="left:137.2px;top:45px;width:3px;height:2.5px;background:#f0a080;opacity:.75"></i><i style="left:150.6px;top:45px;width:3px;height:2.5px;background:#f0a080;opacity:.75"></i><i style="left:164.0px;top:45px;width:3px;height:2.5px;background:#f0a080;opacity:.75"></i><i style="left:177.5px;top:45px;width:3px;height:2.5px;background:#f0a080;opacity:.75"></i><i style="left:190.9px;top:45px;width:3px;height:2.5px;background:#f0a080;opacity:.75"></i><i style="left:4.0px;top:68px;width:3px;height:2.5px;background:#f0a080;opacity:.75"></i><i style="left:17.4px;top:68px;width:3px;height:2.5px;background:#f0a080;opacity:.75"></i><i style="left:30.8px;top:68px;width:3px;height:2.5px;background:#f0a080;opacity:.75"></i><i style="left:44.3px;top:68px;width:3px;height:2.5px;background:#f0a080;opacity:.75"></i><i style="left:57.7px;top:68px;width:3px;height:2.5px;background:#f0a080;opacity:.75"></i><i style="left:71.1px;top:68px;width:3px;height:2.5px;background:#f0a080;opacity:.75"></i><i style="left:84.5px;top:68px;width:3px;height:2.5px;background:#f0a080;opacity:.75"></i><i style="left:97.9px;top:68px;width:3px;height:2.5px;background:#f0a080;opacity:.75"></i><i style="left:111.4px;top:68px;width:3px;height:2.5px;background:#f0a080;opacity:.75"></i><i style="left:124.8px;top:68px;width:3px;height:2.5px;background:#f0a080;opacity:.75"></i><i style="left:138.2px;top:68px;width:3px;height:2.5px;background:#f0a080;opacity:.75"></i><i style="left:151.6px;top:68px;width:3px;height:2.5px;background:#f0a080;opacity:.75"></i><i style="left:165.0px;top:68px;width:3px;height:2.5px;background:#f0a080;opacity:.75"></i><i style="left:178.5px;top:68px;width:3px;height:2.5px;background:#f0a080;opacity:.75"></i><i style="left:191.9px;top:68px;width:3px;height:2.5px;background:#f0a080;opacity:.75"></i><i style="left:24.3px;top:-3.5px;width:5px;height:5px;background:#2a1410;transform:rotate(45deg)"></i><i style="left:24.3px;top:74.8px;width:5px;height:5px;background:#2a1410;transform:rotate(45deg)"></i><i style="left:51.2px;top:-3.5px;width:5px;height:5px;background:#2a1410;transform:rotate(45deg)"></i><i style="left:51.2px;top:74.8px;width:5px;height:5px;background:#2a1410;transform:rotate(45deg)"></i><i style="left:78.0px;top:-3.5px;width:5px;height:5px;background:#2a1410;transform:rotate(45deg)"></i><i style="left:78.0px;top:74.8px;width:5px;height:5px;background:#2a1410;transform:rotate(45deg)"></i><i style="left:104.9px;top:-3.5px;width:5px;height:5px;background:#2a1410;transform:rotate(45deg)"></i><i style="left:104.9px;top:74.8px;width:5px;height:5px;background:#2a1410;transform:rotate(45deg)"></i><i style="left:131.7px;top:-3.5px;width:5px;height:5px;background:#2a1410;transform:rotate(45deg)"></i><i style="left:131.7px;top:74.8px;width:5px;height:5px;background:#2a1410;transform:rotate(45deg)"></i><i style="left:158.5px;top:-3.5px;width:5px;height:5px;background:#2a1410;transform:rotate(45deg)"></i><i style="left:158.5px;top:74.8px;width:5px;height:5px;background:#2a1410;transform:rotate(45deg)"></i><i style="left:185.4px;top:-3.5px;width:5px;height:5px;background:#2a1410;transform:rotate(45deg)"></i><i style="left:185.4px;top:74.8px;width:5px;height:5px;background:#2a1410;transform:rotate(45deg)"></i><b style="position:absolute;left:6px;top:1.5px;font-weight:normal;font-size:13px;line-height:15px;color:#f2eeff;white-space:nowrap;-webkit-text-stroke:0.25px #f2eeff">Chamber Choir</b></div>
<div style="position:absolute;left:653px;top:142px;width:1007px;height:20.5px;background:#3d3d3d"></div>
<div style="position:absolute;left:717.1px;top:142px;width:241.6px;height:20.5px;background:#4e4e4e"></div>
<div style="position:absolute;left:653px;top:162.5px;width:1007px;height:22px;background:#383838"></div>
<div style="position:absolute;left:662.9px;top:163px;width:1px;height:22px;background:#5a5a5a"></div>
<div style="position:absolute;left:667.4px;top:144px;font-size:14px;line-height:14px;color:#dcdcdc;-webkit-text-stroke:0.2px #dcdcdc">1</div>
<div style="position:absolute;left:676.3px;top:165px;width:1px;height:19px;background:#5a5a5a"></div>
<div style="position:absolute;left:689.7px;top:165px;width:1px;height:19px;background:#5a5a5a"></div>
<div style="position:absolute;left:703.2px;top:165px;width:1px;height:19px;background:#5a5a5a"></div>
<div style="position:absolute;left:716.6px;top:163px;width:1px;height:21px;background:#5a5a5a"></div>
<div style="position:absolute;left:730.0px;top:165px;width:1px;height:19px;background:#5a5a5a"></div>
<div style="position:absolute;left:743.4px;top:165px;width:1px;height:19px;background:#5a5a5a"></div>
<div style="position:absolute;left:756.8px;top:165px;width:1px;height:19px;background:#5a5a5a"></div>
<div style="position:absolute;left:770.3px;top:142px;width:1px;height:43px;background:#6a6a6a"></div>
<div style="position:absolute;left:774.8px;top:144px;font-size:14px;line-height:14px;color:#dcdcdc;-webkit-text-stroke:0.2px #dcdcdc">9</div>
<div style="position:absolute;left:783.7px;top:165px;width:1px;height:19px;background:#5a5a5a"></div>
<div style="position:absolute;left:797.1px;top:165px;width:1px;height:19px;background:#5a5a5a"></div>
<div style="position:absolute;left:810.5px;top:165px;width:1px;height:19px;background:#5a5a5a"></div>
<div style="position:absolute;left:823.9px;top:163px;width:1px;height:21px;background:#5a5a5a"></div>
<div style="position:absolute;left:837.4px;top:165px;width:1px;height:19px;background:#5a5a5a"></div>
<div style="position:absolute;left:850.8px;top:165px;width:1px;height:19px;background:#5a5a5a"></div>
<div style="position:absolute;left:864.2px;top:165px;width:1px;height:19px;background:#5a5a5a"></div>
<div style="position:absolute;left:877.6px;top:142px;width:1px;height:43px;background:#6a6a6a"></div>
<div style="position:absolute;left:882.1px;top:144px;font-size:14px;line-height:14px;color:#dcdcdc;-webkit-text-stroke:0.2px #dcdcdc">17</div>
<div style="position:absolute;left:891.0px;top:165px;width:1px;height:19px;background:#5a5a5a"></div>
<div style="position:absolute;left:904.5px;top:165px;width:1px;height:19px;background:#5a5a5a"></div>
<div style="position:absolute;left:917.9px;top:165px;width:1px;height:19px;background:#5a5a5a"></div>
<div style="position:absolute;left:931.3px;top:163px;width:1px;height:21px;background:#5a5a5a"></div>
<div style="position:absolute;left:944.7px;top:165px;width:1px;height:19px;background:#5a5a5a"></div>
<div style="position:absolute;left:958.1px;top:165px;width:1px;height:19px;background:#5a5a5a"></div>
<div style="position:absolute;left:971.6px;top:165px;width:1px;height:19px;background:#5a5a5a"></div>
<div style="position:absolute;left:985.0px;top:142px;width:1px;height:43px;background:#6a6a6a"></div>
<div style="position:absolute;left:989.5px;top:144px;font-size:14px;line-height:14px;color:#dcdcdc;-webkit-text-stroke:0.2px #dcdcdc">25</div>
<div style="position:absolute;left:998.4px;top:165px;width:1px;height:19px;background:#5a5a5a"></div>
<div style="position:absolute;left:1011.8px;top:165px;width:1px;height:19px;background:#5a5a5a"></div>
<div style="position:absolute;left:1025.2px;top:165px;width:1px;height:19px;background:#5a5a5a"></div>
<div style="position:absolute;left:1038.7px;top:163px;width:1px;height:21px;background:#5a5a5a"></div>
<div style="position:absolute;left:1052.1px;top:165px;width:1px;height:19px;background:#5a5a5a"></div>
<div style="position:absolute;left:1065.5px;top:165px;width:1px;height:19px;background:#5a5a5a"></div>
<div style="position:absolute;left:1078.9px;top:165px;width:1px;height:19px;background:#5a5a5a"></div>
<div style="position:absolute;left:1092.3px;top:142px;width:1px;height:43px;background:#6a6a6a"></div>
<div style="position:absolute;left:1096.8px;top:144px;font-size:14px;line-height:14px;color:#dcdcdc;-webkit-text-stroke:0.2px #dcdcdc">33</div>
<div style="position:absolute;left:1105.8px;top:165px;width:1px;height:19px;background:#5a5a5a"></div>
<div style="position:absolute;left:1119.2px;top:165px;width:1px;height:19px;background:#5a5a5a"></div>
<div style="position:absolute;left:1132.6px;top:165px;width:1px;height:19px;background:#5a5a5a"></div>
<div style="position:absolute;left:1146.0px;top:163px;width:1px;height:21px;background:#5a5a5a"></div>
<div style="position:absolute;left:1159.4px;top:165px;width:1px;height:19px;background:#5a5a5a"></div>
<div style="position:absolute;left:1172.9px;top:165px;width:1px;height:19px;background:#5a5a5a"></div>
<div style="position:absolute;left:1186.3px;top:165px;width:1px;height:19px;background:#5a5a5a"></div>
<div style="position:absolute;left:1199.7px;top:142px;width:1px;height:43px;background:#6a6a6a"></div>
<div style="position:absolute;left:1204.2px;top:144px;font-size:14px;line-height:14px;color:#dcdcdc;-webkit-text-stroke:0.2px #dcdcdc">41</div>
<div style="position:absolute;left:1213.1px;top:165px;width:1px;height:19px;background:#5a5a5a"></div>
<div style="position:absolute;left:1226.5px;top:165px;width:1px;height:19px;background:#5a5a5a"></div>
<div style="position:absolute;left:1240.0px;top:165px;width:1px;height:19px;background:#5a5a5a"></div>
<div style="position:absolute;left:1253.4px;top:163px;width:1px;height:21px;background:#5a5a5a"></div>
<div style="position:absolute;left:1266.8px;top:165px;width:1px;height:19px;background:#5a5a5a"></div>
<div style="position:absolute;left:1280.2px;top:165px;width:1px;height:19px;background:#5a5a5a"></div>
<div style="position:absolute;left:1293.6px;top:165px;width:1px;height:19px;background:#5a5a5a"></div>
<div style="position:absolute;left:1307.1px;top:142px;width:1px;height:43px;background:#6a6a6a"></div>
<div style="position:absolute;left:1311.6px;top:144px;font-size:14px;line-height:14px;color:#dcdcdc;-webkit-text-stroke:0.2px #dcdcdc">49</div>
<div style="position:absolute;left:1320.5px;top:165px;width:1px;height:19px;background:#5a5a5a"></div>
<div style="position:absolute;left:1333.9px;top:165px;width:1px;height:19px;background:#5a5a5a"></div>
<div style="position:absolute;left:1347.3px;top:165px;width:1px;height:19px;background:#5a5a5a"></div>
<div style="position:absolute;left:1360.7px;top:163px;width:1px;height:21px;background:#5a5a5a"></div>
<div style="position:absolute;left:1374.2px;top:165px;width:1px;height:19px;background:#5a5a5a"></div>
<div style="position:absolute;left:1387.6px;top:165px;width:1px;height:19px;background:#5a5a5a"></div>
<div style="position:absolute;left:1401.0px;top:165px;width:1px;height:19px;background:#5a5a5a"></div>
<div style="position:absolute;left:1414.4px;top:142px;width:1px;height:43px;background:#6a6a6a"></div>
<div style="position:absolute;left:1418.9px;top:144px;font-size:14px;line-height:14px;color:#dcdcdc;-webkit-text-stroke:0.2px #dcdcdc">57</div>
<div style="position:absolute;left:1427.8px;top:165px;width:1px;height:19px;background:#5a5a5a"></div>
<div style="position:absolute;left:1441.3px;top:165px;width:1px;height:19px;background:#5a5a5a"></div>
<div style="position:absolute;left:1454.7px;top:165px;width:1px;height:19px;background:#5a5a5a"></div>
<div style="position:absolute;left:1468.1px;top:163px;width:1px;height:21px;background:#5a5a5a"></div>
<div style="position:absolute;left:1481.5px;top:165px;width:1px;height:19px;background:#5a5a5a"></div>
<div style="position:absolute;left:1494.9px;top:165px;width:1px;height:19px;background:#5a5a5a"></div>
<div style="position:absolute;left:1508.4px;top:165px;width:1px;height:19px;background:#5a5a5a"></div>
<div style="position:absolute;left:1521.8px;top:142px;width:1px;height:43px;background:#6a6a6a"></div>
<div style="position:absolute;left:1526.3px;top:144px;font-size:14px;line-height:14px;color:#dcdcdc;-webkit-text-stroke:0.2px #dcdcdc">65</div>
<div style="position:absolute;left:1535.2px;top:165px;width:1px;height:19px;background:#5a5a5a"></div>
<div style="position:absolute;left:1548.6px;top:165px;width:1px;height:19px;background:#5a5a5a"></div>
<div style="position:absolute;left:1562.0px;top:165px;width:1px;height:19px;background:#5a5a5a"></div>
<div style="position:absolute;left:1575.5px;top:163px;width:1px;height:21px;background:#5a5a5a"></div>
<div style="position:absolute;left:1588.9px;top:165px;width:1px;height:19px;background:#5a5a5a"></div>
<div style="position:absolute;left:1602.3px;top:165px;width:1px;height:19px;background:#5a5a5a"></div>
<div style="position:absolute;left:1615.7px;top:165px;width:1px;height:19px;background:#5a5a5a"></div>
<div style="position:absolute;left:1629.1px;top:142px;width:1px;height:43px;background:#6a6a6a"></div>
<div style="position:absolute;left:1633.6px;top:144px;font-size:14px;line-height:14px;color:#dcdcdc;-webkit-text-stroke:0.2px #dcdcdc">73</div>
<div style="position:absolute;left:1642.6px;top:165px;width:1px;height:19px;background:#5a5a5a"></div>
<svg style="position:absolute;left:655px;top:145px" width="8" height="14"><path d="M1 1 L7 7 L1 13 Z" fill="#555"/></svg>
<div style="position:absolute;left:714.2px;top:172px;width:2px;height:885px;background:#a4a4a4"></div>
<svg style="position:absolute;left:705px;top:162px" width="20" height="22"><path d="M2 3 Q2 1 4 1 L16 1 Q18 1 18 3 L18 12 L10 20 L2 12 Z" fill="#a8a8a8"/></svg>
<svg style="position:absolute;left:799px;top:393px" width="14" height="22" viewBox="0 0 14 22"><path d="M1 1 L1 17 L5 13 L8 20 L10.5 19 L7.5 12 L13 12 Z" fill="#111" stroke="#ddd" stroke-width="1.2"/></svg>
<div style="position:absolute;left:260.5px;top:185.3px;width:392.5px;height:81.33px;background:#535353"></div>
<div style="position:absolute;left:260.5px;top:184.8px;width:392.5px;height:1px;background:#474747"></div>
<div style="position:absolute;left:291px;top:185.3px;width:1px;height:81.33px;background:#454545"></div>
<div style="position:absolute;left:260.5px;top:216.8px;width:31px;text-align:center;font-size:15px;line-height:15px;color:#e8e8e8;-webkit-text-stroke:0.2px #e8e8e8">1</div>
<div style="position:absolute;left:301px;top:206.8px;width:68px;height:35.5px;border-radius:7px;background:#5e5e5e;box-shadow:0 1px 1px rgba(0,0,0,.25)"></div>
<svg style="position:absolute;left:307px;top:217.3px" width="10" height="14" viewBox="0 0 10 14"><path d="M2.5 2 L7.5 7 L2.5 12" fill="none" stroke="#d0d0d0" stroke-width="1.4"/></svg>
<svg style="position:absolute;left:329px;top:210.3px" width="32" height="30" viewBox="0 0 32 30">
<rect x="2" y="25.8" width="28" height="2" fill="#3a3a3a"/>
<rect x="1.7" y="1.6" width="27.6" height="21.6" fill="#dcdcdc"/>
<rect x="1.7" y="1.6" width="3" height="21.6" fill="#ececec"/>
<rect x="6" y="4.6" width="10.4" height="5" rx="2.2" fill="#1c2230"/><rect x="7.6" y="5.7" width="7.2" height="2.8" rx="1.4" fill="#4a82d4"/>
<rect x="6.6" y="12.6" width="2" height="2" fill="#606060"/><rect x="6.6" y="15.0" width="2" height="2" fill="#606060"/><rect x="6.6" y="17.4" width="2" height="2" fill="#606060"/><rect x="6.6" y="19.8" width="2" height="2" fill="#606060"/><rect x="9.0" y="12.6" width="2" height="2" fill="#606060"/><rect x="9.0" y="15.0" width="2" height="2" fill="#606060"/><rect x="9.0" y="17.4" width="2" height="2" fill="#606060"/><rect x="9.0" y="19.8" width="2" height="2" fill="#606060"/><rect x="11.4" y="12.6" width="2" height="2" fill="#606060"/><rect x="11.4" y="15.0" width="2" height="2" fill="#606060"/><rect x="11.4" y="17.4" width="2" height="2" fill="#606060"/><rect x="11.4" y="19.8" width="2" height="2" fill="#606060"/><rect x="13.8" y="12.6" width="2" height="2" fill="#606060"/><rect x="13.8" y="15.0" width="2" height="2" fill="#606060"/><rect x="13.8" y="17.4" width="2" height="2" fill="#606060"/><rect x="13.8" y="19.8" width="2" height="2" fill="#606060"/>
<rect x="17.6" y="4" width="3.2" height="8" fill="#a4a4a4"/><rect x="23" y="4" width="3.2" height="8" fill="#b0b0b0"/>
<rect x="17.6" y="13.5" width="8.6" height="1.2" fill="#9a9a9a"/><rect x="17.6" y="16" width="8.6" height="1.2" fill="#a0a0a0"/>
<rect x="17.9" y="19.4" width="4.8" height="1.9" fill="#7a3040"/>
</svg>
<div style="position:absolute;left:379px;top:202.8px;font-size:15px;line-height:17px;color:#f0f0f0;white-space:nowrap;-webkit-text-stroke:0.25px #f0f0f0">Hard Kick</div>
<div style="position:absolute;left:380.3px;top:227.3px;width:23px;height:18px;border-radius:4px;background:#2f6ac0"><svg width="23" height="18" viewBox="0 0 23 18" style="position:absolute;left:0;top:0"><path d="M8.2 5.6 A5 5 0 1 0 14.8 5.6" fill="none" stroke="#bcd4ff" stroke-width="1.3" stroke-linecap="round"/><path d="M11.5 3.5 V9" stroke="#bcd4ff" stroke-width="1.3" stroke-linecap="round"/></svg></div>
<div style="position:absolute;left:410px;top:227.3px;width:46px;height:18px;border-radius:4px;background:#5c5c5c;box-shadow:0 1px 1px rgba(0,0,0,.2)"></div>
<div style="position:absolute;left:432.5px;top:227.3px;width:1px;height:18px;background:#525252"></div>
<div style="position:absolute;left:410px;top:229.8px;width:22px;text-align:center;font-size:13px;line-height:13px;color:#e8e8e8">M</div>
<div style="position:absolute;left:433px;top:229.8px;width:22px;text-align:center;font-size:13px;line-height:13px;color:#e8e8e8">S</div>
<div style="position:absolute;left:463.3px;top:227.3px;width:45px;height:18px;border-radius:4px;background:#5c5c5c;box-shadow:0 1px 1px rgba(0,0,0,.2)"></div>
<div style="position:absolute;left:486px;top:227.3px;width:1px;height:18px;background:#525252"></div>
<div style="position:absolute;left:463.3px;top:229.8px;width:22px;text-align:center;font-size:13px;line-height:13px;color:#e8e8e8">R</div>
<div style="position:absolute;left:496.5px;top:230.3px;width:1.6px;height:12px;background:#e8e8e8"></div>
<div style="position:absolute;left:516.4px;top:226.3px;width:87.3px;height:19.5px;border-radius:10px;background:#3a3a3a"></div>
<div style="position:absolute;left:545.0px;top:227.1px;width:18px;height:18px;border-radius:50%;background:#8c8c8c"></div>
<svg style="position:absolute;left:612.3px;top:220.8px" width="27" height="27" viewBox="0 0 27 27">
<path d="M6 22.5 A12 12 0 1 1 21 22.5" stroke="#383838" stroke-width="3" fill="none"/>
<circle cx="13.5" cy="13.5" r="9.5" fill="#8a8a8a"/><rect x="12.8" y="4.5" width="1.4" height="3.5" fill="#333"/></svg>
<div style="position:absolute;left:260.5px;top:266.6px;width:392.5px;height:81.33px;background:#535353"></div>
<div style="position:absolute;left:260.5px;top:266.1px;width:392.5px;height:1px;background:#474747"></div>
<div style="position:absolute;left:291px;top:266.6px;width:1px;height:81.33px;background:#454545"></div>
<div style="position:absolute;left:260.5px;top:298.1px;width:31px;text-align:center;font-size:15px;line-height:15px;color:#e8e8e8;-webkit-text-stroke:0.2px #e8e8e8">26</div>
<div style="position:absolute;left:301px;top:288.1px;width:68px;height:35.5px;border-radius:7px;background:#5e5e5e;box-shadow:0 1px 1px rgba(0,0,0,.25)"></div>
<svg style="position:absolute;left:307px;top:298.6px" width="10" height="14" viewBox="0 0 10 14"><path d="M2.5 2 L7.5 7 L2.5 12" fill="none" stroke="#d0d0d0" stroke-width="1.4"/></svg>
<svg style="position:absolute;left:329px;top:291.63px" width="32" height="30" viewBox="0 0 32 30">
<rect x="2" y="25.8" width="28" height="2" fill="#3a3a3a"/>
<rect x="1.7" y="1.6" width="27.6" height="21.6" fill="#dcdcdc"/>
<rect x="1.7" y="1.6" width="3" height="21.6" fill="#ececec"/>
<rect x="6" y="4.6" width="10.4" height="5" rx="2.2" fill="#1c2230"/><rect x="7.6" y="5.7" width="7.2" height="2.8" rx="1.4" fill="#4a82d4"/>
<rect x="6.6" y="12.6" width="2" height="2" fill="#606060"/><rect x="6.6" y="15.0" width="2" height="2" fill="#606060"/><rect x="6.6" y="17.4" width="2" height="2" fill="#606060"/><rect x="6.6" y="19.8" width="2" height="2" fill="#606060"/><rect x="9.0" y="12.6" width="2" height="2" fill="#606060"/><rect x="9.0" y="15.0" width="2" height="2" fill="#606060"/><rect x="9.0" y="17.4" width="2" height="2" fill="#606060"/><rect x="9.0" y="19.8" width="2" height="2" fill="#606060"/><rect x="11.4" y="12.6" width="2" height="2" fill="#606060"/><rect x="11.4" y="15.0" width="2" height="2" fill="#606060"/><rect x="11.4" y="17.4" width="2" height="2" fill="#606060"/><rect x="11.4" y="19.8" width="2" height="2" fill="#606060"/><rect x="13.8" y="12.6" width="2" height="2" fill="#606060"/><rect x="13.8" y="15.0" width="2" height="2" fill="#606060"/><rect x="13.8" y="17.4" width="2" height="2" fill="#606060"/><rect x="13.8" y="19.8" width="2" height="2" fill="#606060"/>
<rect x="17.6" y="4" width="3.2" height="8" fill="#a4a4a4"/><rect x="23" y="4" width="3.2" height="8" fill="#b0b0b0"/>
<rect x="17.6" y="13.5" width="8.6" height="1.2" fill="#9a9a9a"/><rect x="17.6" y="16" width="8.6" height="1.2" fill="#a0a0a0"/>
<rect x="17.9" y="19.4" width="4.8" height="1.9" fill="#7a3040"/>
</svg>
<div style="position:absolute;left:379px;top:284.1px;font-size:15px;line-height:17px;color:#f0f0f0;white-space:nowrap;-webkit-text-stroke:0.25px #f0f0f0">Crate Digger</div>
<div style="position:absolute;left:380.3px;top:308.6px;width:23px;height:18px;border-radius:4px;background:#2f6ac0"><svg width="23" height="18" viewBox="0 0 23 18" style="position:absolute;left:0;top:0"><path d="M8.2 5.6 A5 5 0 1 0 14.8 5.6" fill="none" stroke="#bcd4ff" stroke-width="1.3" stroke-linecap="round"/><path d="M11.5 3.5 V9" stroke="#bcd4ff" stroke-width="1.3" stroke-linecap="round"/></svg></div>
<div style="position:absolute;left:410px;top:308.6px;width:46px;height:18px;border-radius:4px;background:#5c5c5c;box-shadow:0 1px 1px rgba(0,0,0,.2)"></div>
<div style="position:absolute;left:432.5px;top:308.6px;width:1px;height:18px;background:#525252"></div>
<div style="position:absolute;left:410px;top:311.1px;width:22px;text-align:center;font-size:13px;line-height:13px;color:#e8e8e8">M</div>
<div style="position:absolute;left:433px;top:311.1px;width:22px;text-align:center;font-size:13px;line-height:13px;color:#e8e8e8">S</div>
<div style="position:absolute;left:463.3px;top:308.6px;width:45px;height:18px;border-radius:4px;background:#5c5c5c;box-shadow:0 1px 1px rgba(0,0,0,.2)"></div>
<div style="position:absolute;left:486px;top:308.6px;width:1px;height:18px;background:#525252"></div>
<div style="position:absolute;left:463.3px;top:311.1px;width:22px;text-align:center;font-size:13px;line-height:13px;color:#e8e8e8">R</div>
<div style="position:absolute;left:496.5px;top:311.6px;width:1.6px;height:12px;background:#e8e8e8"></div>
<div style="position:absolute;left:516.4px;top:307.6px;width:87.3px;height:19.5px;border-radius:10px;background:#3a3a3a"></div>
<div style="position:absolute;left:545.0px;top:308.4px;width:18px;height:18px;border-radius:50%;background:#8c8c8c"></div>
<svg style="position:absolute;left:612.3px;top:302.1px" width="27" height="27" viewBox="0 0 27 27">
<path d="M6 22.5 A12 12 0 1 1 21 22.5" stroke="#383838" stroke-width="3" fill="none"/>
<circle cx="13.5" cy="13.5" r="9.5" fill="#8a8a8a"/><rect x="12.8" y="4.5" width="1.4" height="3.5" fill="#333"/></svg>
<div style="position:absolute;left:260.5px;top:348.0px;width:392.5px;height:81.33px;background:#686868"></div>
<div style="position:absolute;left:260.5px;top:347.5px;width:392.5px;height:1px;background:#474747"></div>
<div style="position:absolute;left:291px;top:348.0px;width:1px;height:81.33px;background:#454545"></div>
<div style="position:absolute;left:260.5px;top:379.5px;width:31px;text-align:center;font-size:15px;line-height:15px;color:#e8e8e8;-webkit-text-stroke:0.2px #e8e8e8">51</div>
<svg style="position:absolute;left:328px;top:375.96000000000004px" width="34" height="22" viewBox="0 0 34 22">
<rect x="1" y="1" width="32" height="19" fill="#1c1c1c" stroke="#3a3a3a" stroke-width="0.6"/>
<rect x="10" y="4" width="22" height="1" fill="#444"/>
<rect x="4" y="4" width="4" height="6" fill="#3a3a3a"/>
<rect x="11" y="9" width="21" height="1.6" fill="#3a3a46"/>
<rect x="11" y="11.5" width="21" height="1.6" fill="#707068"/>
<rect x="11" y="13.4" width="8" height="1.6" fill="#4a4a40"/><rect x="19" y="13.4" width="8" height="1.6" fill="#5a6040"/>
<rect x="4" y="13" width="5" height="5" fill="#c8c8c8"/>
<rect x="11" y="15.2" width="21" height="1.8" fill="#b8b4b0"/>
<rect x="11" y="17" width="8" height="2" fill="#6a4a58"/><rect x="19" y="17" width="8" height="2" fill="#907060"/><rect x="27" y="17" width="5" height="2" fill="#a09890"/>
</svg>
<div style="position:absolute;left:379px;top:365.5px;font-size:15px;line-height:17px;color:#f0f0f0;white-space:nowrap;-webkit-text-stroke:0.25px #f0f0f0">Nasty 808 Bass</div>
<div style="position:absolute;left:380.3px;top:390.0px;width:23px;height:18px;border-radius:4px;background:#2f6ac0"><svg width="23" height="18" viewBox="0 0 23 18" style="position:absolute;left:0;top:0"><path d="M8.2 5.6 A5 5 0 1 0 14.8 5.6" fill="none" stroke="#bcd4ff" stroke-width="1.3" stroke-linecap="round"/><path d="M11.5 3.5 V9" stroke="#bcd4ff" stroke-width="1.3" stroke-linecap="round"/></svg></div>
<div style="position:absolute;left:410px;top:390.0px;width:46px;height:18px;border-radius:4px;background:#5c5c5c;box-shadow:0 1px 1px rgba(0,0,0,.2)"></div>
<div style="position:absolute;left:432.5px;top:390.0px;width:1px;height:18px;background:#525252"></div>
<div style="position:absolute;left:410px;top:392.5px;width:22px;text-align:center;font-size:13px;line-height:13px;color:#e8e8e8">M</div>
<div style="position:absolute;left:433px;top:392.5px;width:22px;text-align:center;font-size:13px;line-height:13px;color:#e8e8e8">S</div>
<div style="position:absolute;left:463.3px;top:390.0px;width:45px;height:18px;border-radius:4px;background:#5c5c5c;box-shadow:0 1px 1px rgba(0,0,0,.2)"></div>
<div style="position:absolute;left:486px;top:390.0px;width:1px;height:18px;background:#525252"></div>
<div style="position:absolute;left:463.3px;top:392.5px;width:22px;text-align:center;font-size:13px;line-height:13px;color:#d02a2a">R</div>
<div style="position:absolute;left:496.5px;top:393.0px;width:1.6px;height:12px;background:#e8a030"></div>
<div style="position:absolute;left:516.4px;top:389.0px;width:87.3px;height:19.5px;border-radius:10px;background:#3a3a3a"></div>
<div style="position:absolute;left:548.0px;top:389.7px;width:18px;height:18px;border-radius:50%;background:#8c8c8c"></div>
<svg style="position:absolute;left:612.3px;top:383.5px" width="27" height="27" viewBox="0 0 27 27">
<path d="M6 22.5 A12 12 0 1 1 21 22.5" stroke="#383838" stroke-width="3" fill="none"/>
<circle cx="13.5" cy="13.5" r="9.5" fill="#8a8a8a"/><rect x="12.8" y="4.5" width="1.4" height="3.5" fill="#333"/></svg>
<div style="position:absolute;left:260.5px;top:429.3px;width:392.5px;height:81.33px;background:#535353"></div>
<div style="position:absolute;left:260.5px;top:428.8px;width:392.5px;height:1px;background:#474747"></div>
<div style="position:absolute;left:291px;top:429.3px;width:1px;height:81.33px;background:#454545"></div>
<div style="position:absolute;left:260.5px;top:460.8px;width:31px;text-align:center;font-size:15px;line-height:15px;color:#e8e8e8;-webkit-text-stroke:0.2px #e8e8e8">52</div>
<svg style="position:absolute;left:328px;top:457.29px" width="34" height="22" viewBox="0 0 34 22">
<rect x="1" y="1" width="32" height="19" fill="#1c1c1c" stroke="#3a3a3a" stroke-width="0.6"/>
<rect x="10" y="4" width="22" height="1" fill="#444"/>
<rect x="4" y="4" width="4" height="6" fill="#3a3a3a"/>
<rect x="11" y="9" width="21" height="1.6" fill="#3a3a46"/>
<rect x="11" y="11.5" width="21" height="1.6" fill="#707068"/>
<rect x="11" y="13.4" width="8" height="1.6" fill="#4a4a40"/><rect x="19" y="13.4" width="8" height="1.6" fill="#5a6040"/>
<rect x="4" y="13" width="5" height="5" fill="#c8c8c8"/>
<rect x="11" y="15.2" width="21" height="1.8" fill="#b8b4b0"/>
<rect x="11" y="17" width="8" height="2" fill="#6a4a58"/><rect x="19" y="17" width="8" height="2" fill="#907060"/><rect x="27" y="17" width="5" height="2" fill="#a09890"/>
</svg>
<div style="position:absolute;left:379px;top:446.8px;font-size:15px;line-height:17px;color:#f0f0f0;white-space:nowrap;-webkit-text-stroke:0.25px #f0f0f0">Nasty 808 Bass</div>
<div style="position:absolute;left:380.3px;top:471.3px;width:23px;height:18px;border-radius:4px;background:#2f6ac0"><svg width="23" height="18" viewBox="0 0 23 18" style="position:absolute;left:0;top:0"><path d="M8.2 5.6 A5 5 0 1 0 14.8 5.6" fill="none" stroke="#bcd4ff" stroke-width="1.3" stroke-linecap="round"/><path d="M11.5 3.5 V9" stroke="#bcd4ff" stroke-width="1.3" stroke-linecap="round"/></svg></div>
<div style="position:absolute;left:410px;top:471.3px;width:46px;height:18px;border-radius:4px;background:#5c5c5c;box-shadow:0 1px 1px rgba(0,0,0,.2)"></div>
<div style="position:absolute;left:432.5px;top:471.3px;width:1px;height:18px;background:#525252"></div>
<div style="position:absolute;left:410px;top:473.8px;width:22px;text-align:center;font-size:13px;line-height:13px;color:#e8e8e8">M</div>
<div style="position:absolute;left:433px;top:473.8px;width:22px;text-align:center;font-size:13px;line-height:13px;color:#e8e8e8">S</div>
<div style="position:absolute;left:463.3px;top:471.3px;width:45px;height:18px;border-radius:4px;background:#5c5c5c;box-shadow:0 1px 1px rgba(0,0,0,.2)"></div>
<div style="position:absolute;left:486px;top:471.3px;width:1px;height:18px;background:#525252"></div>
<div style="position:absolute;left:463.3px;top:473.8px;width:22px;text-align:center;font-size:13px;line-height:13px;color:#e8e8e8">R</div>
<div style="position:absolute;left:496.5px;top:474.3px;width:1.6px;height:12px;background:#e8e8e8"></div>
<div style="position:absolute;left:516.4px;top:470.3px;width:87.3px;height:19.5px;border-radius:10px;background:#3a3a3a"></div>
<div style="position:absolute;left:524px;top:476.3px;width:38px;height:3px;background:#3cc84a;border-radius:1px"></div>
<div style="position:absolute;left:524px;top:481.3px;width:38px;height:3px;background:#3cc84a;border-radius:1px"></div>
<div style="position:absolute;left:548.0px;top:471.0px;width:18px;height:18px;border-radius:50%;background:rgba(150,150,150,.75)"></div>
<svg style="position:absolute;left:612.3px;top:464.8px" width="27" height="27" viewBox="0 0 27 27">
<path d="M6 22.5 A12 12 0 1 1 21 22.5" stroke="#383838" stroke-width="3" fill="none"/>
<circle cx="13.5" cy="13.5" r="9.5" fill="#8a8a8a"/><rect x="12.8" y="4.5" width="1.4" height="3.5" fill="#333"/></svg>
<div style="position:absolute;left:260.5px;top:510.6px;width:392.5px;height:81.33px;background:#535353"></div>
<div style="position:absolute;left:260.5px;top:510.1px;width:392.5px;height:1px;background:#474747"></div>
<div style="position:absolute;left:291px;top:510.6px;width:1px;height:81.33px;background:#454545"></div>
<div style="position:absolute;left:260.5px;top:542.1px;width:31px;text-align:center;font-size:15px;line-height:15px;color:#e8e8e8;-webkit-text-stroke:0.2px #e8e8e8">53</div>
<div style="position:absolute;left:301px;top:532.1px;width:68px;height:35.5px;border-radius:7px;background:#5e5e5e;box-shadow:0 1px 1px rgba(0,0,0,.25)"></div>
<svg style="position:absolute;left:307px;top:542.6px" width="10" height="14" viewBox="0 0 10 14"><path d="M2.5 2 L7.5 7 L2.5 12" fill="none" stroke="#d0d0d0" stroke-width="1.4"/></svg>
<svg style="position:absolute;left:328px;top:539.62px" width="34" height="20" viewBox="0 0 34 20">
<rect x="1" y="1" width="31" height="17" fill="#d8d4c0"/>
<rect x="5" y="4" width="24" height="2" fill="#a8a8a0"/>
<rect x="5" y="9" width="24" height="4" fill="#9a9488"/>
<rect x="6" y="10" width="22" height="1.5" fill="#5a4030"/>
</svg>
<div style="position:absolute;left:379px;top:528.1px;font-size:15px;line-height:17px;color:#f0f0f0;white-space:nowrap;-webkit-text-stroke:0.25px #f0f0f0">FX Kick</div>
<div style="position:absolute;left:380.3px;top:552.6px;width:23px;height:18px;border-radius:4px;background:#2f6ac0"><svg width="23" height="18" viewBox="0 0 23 18" style="position:absolute;left:0;top:0"><path d="M8.2 5.6 A5 5 0 1 0 14.8 5.6" fill="none" stroke="#bcd4ff" stroke-width="1.3" stroke-linecap="round"/><path d="M11.5 3.5 V9" stroke="#bcd4ff" stroke-width="1.3" stroke-linecap="round"/></svg></div>
<div style="position:absolute;left:410px;top:552.6px;width:46px;height:18px;border-radius:4px;background:#5c5c5c;box-shadow:0 1px 1px rgba(0,0,0,.2)"></div>
<div style="position:absolute;left:432.5px;top:552.6px;width:1px;height:18px;background:#525252"></div>
<div style="position:absolute;left:410px;top:555.1px;width:22px;text-align:center;font-size:13px;line-height:13px;color:#e8e8e8">M</div>
<div style="position:absolute;left:433px;top:555.1px;width:22px;text-align:center;font-size:13px;line-height:13px;color:#e8e8e8">S</div>
<div style="position:absolute;left:463.3px;top:552.6px;width:45px;height:18px;border-radius:4px;background:#5c5c5c;box-shadow:0 1px 1px rgba(0,0,0,.2)"></div>
<div style="position:absolute;left:486px;top:552.6px;width:1px;height:18px;background:#525252"></div>
<div style="position:absolute;left:463.3px;top:555.1px;width:22px;text-align:center;font-size:13px;line-height:13px;color:#e8e8e8">R</div>
<div style="position:absolute;left:496.5px;top:555.6px;width:1.6px;height:12px;background:#e8e8e8"></div>
<div style="position:absolute;left:516.4px;top:551.6px;width:87.3px;height:19.5px;border-radius:10px;background:#3a3a3a"></div>
<div style="position:absolute;left:560.6px;top:552.4px;width:18px;height:18px;border-radius:50%;background:#8c8c8c"></div>
<svg style="position:absolute;left:612.3px;top:546.1px" width="27" height="27" viewBox="0 0 27 27">
<path d="M6 22.5 A12 12 0 1 1 21 22.5" stroke="#383838" stroke-width="3" fill="none"/>
<circle cx="13.5" cy="13.5" r="9.5" fill="#8a8a8a"/><rect x="12.8" y="4.5" width="1.4" height="3.5" fill="#333"/></svg>
<div style="position:absolute;left:260.5px;top:592.0px;width:392.5px;height:81.33px;background:#535353"></div>
<div style="position:absolute;left:260.5px;top:591.5px;width:392.5px;height:1px;background:#474747"></div>
<div style="position:absolute;left:291px;top:592.0px;width:1px;height:81.33px;background:#454545"></div>
<div style="position:absolute;left:260.5px;top:623.5px;width:31px;text-align:center;font-size:15px;line-height:15px;color:#e8e8e8;-webkit-text-stroke:0.2px #e8e8e8">78</div>
<div style="position:absolute;left:301px;top:613.5px;width:68px;height:35.5px;border-radius:7px;background:#5e5e5e;box-shadow:0 1px 1px rgba(0,0,0,.25)"></div>
<svg style="position:absolute;left:307px;top:624.0px" width="10" height="14" viewBox="0 0 10 14"><path d="M2.5 2 L7.5 7 L2.5 12" fill="none" stroke="#d0d0d0" stroke-width="1.4"/></svg>
<svg style="position:absolute;left:329px;top:616.95px" width="32" height="30" viewBox="0 0 32 30">
<rect x="2" y="25.8" width="28" height="2" fill="#3a3a3a"/>
<rect x="1.7" y="1.6" width="27.6" height="21.6" fill="#dcdcdc"/>
<rect x="1.7" y="1.6" width="3" height="21.6" fill="#ececec"/>
<rect x="6" y="4.6" width="10.4" height="5" rx="2.2" fill="#1c2230"/><rect x="7.6" y="5.7" width="7.2" height="2.8" rx="1.4" fill="#4a82d4"/>
<rect x="6.6" y="12.6" width="2" height="2" fill="#606060"/><rect x="6.6" y="15.0" width="2" height="2" fill="#606060"/><rect x="6.6" y="17.4" width="2" height="2" fill="#606060"/><rect x="6.6" y="19.8" width="2" height="2" fill="#606060"/><rect x="9.0" y="12.6" width="2" height="2" fill="#606060"/><rect x="9.0" y="15.0" width="2" height="2" fill="#606060"/><rect x="9.0" y="17.4" width="2" height="2" fill="#606060"/><rect x="9.0" y="19.8" width="2" height="2" fill="#606060"/><rect x="11.4" y="12.6" width="2" height="2" fill="#606060"/><rect x="11.4" y="15.0" width="2" height="2" fill="#606060"/><rect x="11.4" y="17.4" width="2" height="2" fill="#606060"/><rect x="11.4" y="19.8" width="2" height="2" fill="#606060"/><rect x="13.8" y="12.6" width="2" height="2" fill="#606060"/><rect x="13.8" y="15.0" width="2" height="2" fill="#606060"/><rect x="13.8" y="17.4" width="2" height="2" fill="#606060"/><rect x="13.8" y="19.8" width="2" height="2" fill="#606060"/>
<rect x="17.6" y="4" width="3.2" height="8" fill="#a4a4a4"/><rect x="23" y="4" width="3.2" height="8" fill="#b0b0b0"/>
<rect x="17.6" y="13.5" width="8.6" height="1.2" fill="#9a9a9a"/><rect x="17.6" y="16" width="8.6" height="1.2" fill="#a0a0a0"/>
<rect x="17.9" y="19.4" width="4.8" height="1.9" fill="#7a3040"/>
</svg>
<div style="position:absolute;left:379px;top:609.5px;font-size:15px;line-height:17px;color:#f0f0f0;white-space:nowrap;-webkit-text-stroke:0.25px #f0f0f0">Snares</div>
<div style="position:absolute;left:380.3px;top:634.0px;width:23px;height:18px;border-radius:4px;background:#2f6ac0"><svg width="23" height="18" viewBox="0 0 23 18" style="position:absolute;left:0;top:0"><path d="M8.2 5.6 A5 5 0 1 0 14.8 5.6" fill="none" stroke="#bcd4ff" stroke-width="1.3" stroke-linecap="round"/><path d="M11.5 3.5 V9" stroke="#bcd4ff" stroke-width="1.3" stroke-linecap="round"/></svg></div>
<div style="position:absolute;left:410px;top:634.0px;width:46px;height:18px;border-radius:4px;background:#5c5c5c;box-shadow:0 1px 1px rgba(0,0,0,.2)"></div>
<div style="position:absolute;left:432.5px;top:634.0px;width:1px;height:18px;background:#525252"></div>
<div style="position:absolute;left:410px;top:636.5px;width:22px;text-align:center;font-size:13px;line-height:13px;color:#e8e8e8">M</div>
<div style="position:absolute;left:433px;top:636.5px;width:22px;text-align:center;font-size:13px;line-height:13px;color:#e8e8e8">S</div>
<div style="position:absolute;left:463.3px;top:634.0px;width:45px;height:18px;border-radius:4px;background:#5c5c5c;box-shadow:0 1px 1px rgba(0,0,0,.2)"></div>
<div style="position:absolute;left:486px;top:634.0px;width:1px;height:18px;background:#525252"></div>
<div style="position:absolute;left:463.3px;top:636.5px;width:22px;text-align:center;font-size:13px;line-height:13px;color:#e8e8e8">R</div>
<div style="position:absolute;left:496.5px;top:637.0px;width:1.6px;height:12px;background:#e8e8e8"></div>
<div style="position:absolute;left:516.4px;top:633.0px;width:87.3px;height:19.5px;border-radius:10px;background:#3a3a3a"></div>
<div style="position:absolute;left:532.6px;top:633.7px;width:18px;height:18px;border-radius:50%;background:#8c8c8c"></div>
<svg style="position:absolute;left:612.3px;top:627.5px" width="27" height="27" viewBox="0 0 27 27">
<path d="M6 22.5 A12 12 0 1 1 21 22.5" stroke="#383838" stroke-width="3" fill="none"/>
<circle cx="13.5" cy="13.5" r="9.5" fill="#8a8a8a"/><rect x="12.8" y="4.5" width="1.4" height="3.5" fill="#333"/></svg>
<div style="position:absolute;left:260.5px;top:673.3px;width:392.5px;height:81.33px;background:#535353"></div>
<div style="position:absolute;left:260.5px;top:672.8px;width:392.5px;height:1px;background:#474747"></div>
<div style="position:absolute;left:291px;top:673.3px;width:1px;height:81.33px;background:#454545"></div>
<div style="position:absolute;left:260.5px;top:704.8px;width:31px;text-align:center;font-size:15px;line-height:15px;color:#e8e8e8;-webkit-text-stroke:0.2px #e8e8e8">103</div>
<svg style="position:absolute;left:329px;top:698.28px" width="32" height="30" viewBox="0 0 32 30">
<rect x="2" y="25.8" width="28" height="2" fill="#3a3a3a"/>
<rect x="1.7" y="1.6" width="27.6" height="21.6" fill="#dcdcdc"/>
<rect x="1.7" y="1.6" width="3" height="21.6" fill="#ececec"/>
<rect x="6" y="4.6" width="10.4" height="5" rx="2.2" fill="#1c2230"/><rect x="7.6" y="5.7" width="7.2" height="2.8" rx="1.4" fill="#4a82d4"/>
<rect x="6.6" y="12.6" width="2" height="2" fill="#606060"/><rect x="6.6" y="15.0" width="2" height="2" fill="#606060"/><rect x="6.6" y="17.4" width="2" height="2" fill="#606060"/><rect x="6.6" y="19.8" width="2" height="2" fill="#606060"/><rect x="9.0" y="12.6" width="2" height="2" fill="#606060"/><rect x="9.0" y="15.0" width="2" height="2" fill="#606060"/><rect x="9.0" y="17.4" width="2" height="2" fill="#606060"/><rect x="9.0" y="19.8" width="2" height="2" fill="#606060"/><rect x="11.4" y="12.6" width="2" height="2" fill="#606060"/><rect x="11.4" y="15.0" width="2" height="2" fill="#606060"/><rect x="11.4" y="17.4" width="2" height="2" fill="#606060"/><rect x="11.4" y="19.8" width="2" height="2" fill="#606060"/><rect x="13.8" y="12.6" width="2" height="2" fill="#606060"/><rect x="13.8" y="15.0" width="2" height="2" fill="#606060"/><rect x="13.8" y="17.4" width="2" height="2" fill="#606060"/><rect x="13.8" y="19.8" width="2" height="2" fill="#606060"/>
<rect x="17.6" y="4" width="3.2" height="8" fill="#a4a4a4"/><rect x="23" y="4" width="3.2" height="8" fill="#b0b0b0"/>
<rect x="17.6" y="13.5" width="8.6" height="1.2" fill="#9a9a9a"/><rect x="17.6" y="16" width="8.6" height="1.2" fill="#a0a0a0"/>
<rect x="17.9" y="19.4" width="4.8" height="1.9" fill="#7a3040"/>
</svg>
<div style="position:absolute;left:379px;top:690.8px;font-size:15px;line-height:17px;color:#f0f0f0;white-space:nowrap;-webkit-text-stroke:0.25px #f0f0f0">Hats</div>
<div style="position:absolute;left:380.3px;top:715.3px;width:23px;height:18px;border-radius:4px;background:#2f6ac0"><svg width="23" height="18" viewBox="0 0 23 18" style="position:absolute;left:0;top:0"><path d="M8.2 5.6 A5 5 0 1 0 14.8 5.6" fill="none" stroke="#bcd4ff" stroke-width="1.3" stroke-linecap="round"/><path d="M11.5 3.5 V9" stroke="#bcd4ff" stroke-width="1.3" stroke-linecap="round"/></svg></div>
<div style="position:absolute;left:410px;top:715.3px;width:46px;height:18px;border-radius:4px;background:#5c5c5c;box-shadow:0 1px 1px rgba(0,0,0,.2)"></div>
<div style="position:absolute;left:432.5px;top:715.3px;width:1px;height:18px;background:#525252"></div>
<div style="position:absolute;left:410px;top:717.8px;width:22px;text-align:center;font-size:13px;line-height:13px;color:#e8e8e8">M</div>
<div style="position:absolute;left:433px;top:717.8px;width:22px;text-align:center;font-size:13px;line-height:13px;color:#e8e8e8">S</div>
<div style="position:absolute;left:463.3px;top:715.3px;width:45px;height:18px;border-radius:4px;background:#5c5c5c;box-shadow:0 1px 1px rgba(0,0,0,.2)"></div>
<div style="position:absolute;left:486px;top:715.3px;width:1px;height:18px;background:#525252"></div>
<div style="position:absolute;left:463.3px;top:717.8px;width:22px;text-align:center;font-size:13px;line-height:13px;color:#e8e8e8">R</div>
<div style="position:absolute;left:496.5px;top:718.3px;width:1.6px;height:12px;background:#e8e8e8"></div>
<div style="position:absolute;left:516.4px;top:714.3px;width:87.3px;height:19.5px;border-radius:10px;background:#3a3a3a"></div>
<div style="position:absolute;left:548.5px;top:715.0px;width:18px;height:18px;border-radius:50%;background:#8c8c8c"></div>
<svg style="position:absolute;left:612.3px;top:708.8px" width="27" height="27" viewBox="0 0 27 27">
<path d="M6 22.5 A12 12 0 1 1 21 22.5" stroke="#383838" stroke-width="3" fill="none"/><path d="M13.5 1.5 A12 12 0 0 0 7 3.4" stroke="#3cd24a" stroke-width="3" fill="none"/>
<circle cx="13.5" cy="13.5" r="9.5" fill="#8a8a8a"/><rect x="12.8" y="4.5" width="1.4" height="3.5" fill="#333"/></svg>
<div style="position:absolute;left:260.5px;top:754.6px;width:392.5px;height:81.33px;background:#535353"></div>
<div style="position:absolute;left:260.5px;top:754.1px;width:392.5px;height:1px;background:#474747"></div>
<div style="position:absolute;left:291px;top:754.6px;width:1px;height:81.33px;background:#454545"></div>
<div style="position:absolute;left:260.5px;top:786.1px;width:31px;text-align:center;font-size:15px;line-height:15px;color:#e8e8e8;-webkit-text-stroke:0.2px #e8e8e8">104</div>
<svg style="position:absolute;left:328px;top:776.6099999999999px" width="34" height="34" viewBox="0 0 34 34">
<path d="M3.5 31 L15 19" stroke="#b89070" stroke-width="3" stroke-linecap="round"/>
<path d="M14 20 L28 5" stroke="#222" stroke-width="6.5" stroke-linecap="round"/>
<g fill="#b8b8b8"><circle cx="15.5" cy="15" r="1.4"/><circle cx="18.5" cy="12" r="1.4"/><circle cx="21.5" cy="9" r="1.4"/><circle cx="24.5" cy="6" r="1.4"/><circle cx="27.5" cy="3.5" r="1.4"/>
<circle cx="19" cy="19" r="1.4"/><circle cx="22" cy="16" r="1.4"/><circle cx="25" cy="13" r="1.4"/><circle cx="28" cy="10" r="1.4"/><circle cx="31" cy="7" r="1.4"/></g>
</svg>
<div style="position:absolute;left:379px;top:772.1px;font-size:15px;line-height:17px;color:#f0f0f0;white-space:nowrap;-webkit-text-stroke:0.25px #f0f0f0">Sleigh / Slay</div>
<div style="position:absolute;left:380.3px;top:796.6px;width:23px;height:18px;border-radius:4px;background:#2f6ac0"><svg width="23" height="18" viewBox="0 0 23 18" style="position:absolute;left:0;top:0"><path d="M8.2 5.6 A5 5 0 1 0 14.8 5.6" fill="none" stroke="#bcd4ff" stroke-width="1.3" stroke-linecap="round"/><path d="M11.5 3.5 V9" stroke="#bcd4ff" stroke-width="1.3" stroke-linecap="round"/></svg></div>
<div style="position:absolute;left:410px;top:796.6px;width:46px;height:18px;border-radius:4px;background:#5c5c5c;box-shadow:0 1px 1px rgba(0,0,0,.2)"></div>
<div style="position:absolute;left:432.5px;top:796.6px;width:1px;height:18px;background:#525252"></div>
<div style="position:absolute;left:410px;top:799.1px;width:22px;text-align:center;font-size:13px;line-height:13px;color:#e8e8e8">M</div>
<div style="position:absolute;left:433px;top:799.1px;width:22px;text-align:center;font-size:13px;line-height:13px;color:#e8e8e8">S</div>
<div style="position:absolute;left:463.3px;top:796.6px;width:45px;height:18px;border-radius:4px;background:#5c5c5c;box-shadow:0 1px 1px rgba(0,0,0,.2)"></div>
<div style="position:absolute;left:486px;top:796.6px;width:1px;height:18px;background:#525252"></div>
<div style="position:absolute;left:463.3px;top:799.1px;width:22px;text-align:center;font-size:13px;line-height:13px;color:#e8e8e8">R</div>
<div style="position:absolute;left:496.5px;top:799.6px;width:1.6px;height:12px;background:#e8e8e8"></div>
<div style="position:absolute;left:516.4px;top:795.6px;width:87.3px;height:19.5px;border-radius:10px;background:#3a3a3a"></div>
<div style="position:absolute;left:525.8px;top:796.4px;width:18px;height:18px;border-radius:50%;background:#8c8c8c"></div>
<svg style="position:absolute;left:612.3px;top:790.1px" width="27" height="27" viewBox="0 0 27 27">
<path d="M6 22.5 A12 12 0 1 1 21 22.5" stroke="#383838" stroke-width="3" fill="none"/><path d="M13.5 1.5 A12 12 0 0 1 16 1.8" stroke="#3cd24a" stroke-width="3.5" fill="none"/>
<circle cx="13.5" cy="13.5" r="9.5" fill="#8a8a8a"/><rect x="12.8" y="4.5" width="1.4" height="3.5" fill="#333"/></svg>
<div style="position:absolute;left:260.5px;top:835.9px;width:392.5px;height:81.33px;background:#535353"></div>
<div style="position:absolute;left:260.5px;top:835.4px;width:392.5px;height:1px;background:#474747"></div>
<div style="position:absolute;left:291px;top:835.9px;width:1px;height:81.33px;background:#454545"></div>
<div style="position:absolute;left:260.5px;top:867.4px;width:31px;text-align:center;font-size:15px;line-height:15px;color:#e8e8e8;-webkit-text-stroke:0.2px #e8e8e8">105</div>
<div style="position:absolute;left:301px;top:857.4px;width:68px;height:35.5px;border-radius:7px;background:#5e5e5e;box-shadow:0 1px 1px rgba(0,0,0,.25)"></div>
<svg style="position:absolute;left:307px;top:867.9px" width="10" height="14" viewBox="0 0 10 14"><path d="M2.5 2 L7.5 7 L2.5 12" fill="none" stroke="#d0d0d0" stroke-width="1.4"/></svg>
<svg style="position:absolute;left:329px;top:860.94px" width="32" height="30" viewBox="0 0 32 30">
<rect x="2" y="25.8" width="28" height="2" fill="#3a3a3a"/>
<rect x="1.7" y="1.6" width="27.6" height="21.6" fill="#dcdcdc"/>
<rect x="1.7" y="1.6" width="3" height="21.6" fill="#ececec"/>
<rect x="6" y="4.6" width="10.4" height="5" rx="2.2" fill="#1c2230"/><rect x="7.6" y="5.7" width="7.2" height="2.8" rx="1.4" fill="#4a82d4"/>
<rect x="6.6" y="12.6" width="2" height="2" fill="#606060"/><rect x="6.6" y="15.0" width="2" height="2" fill="#606060"/><rect x="6.6" y="17.4" width="2" height="2" fill="#606060"/><rect x="6.6" y="19.8" width="2" height="2" fill="#606060"/><rect x="9.0" y="12.6" width="2" height="2" fill="#606060"/><rect x="9.0" y="15.0" width="2" height="2" fill="#606060"/><rect x="9.0" y="17.4" width="2" height="2" fill="#606060"/><rect x="9.0" y="19.8" width="2" height="2" fill="#606060"/><rect x="11.4" y="12.6" width="2" height="2" fill="#606060"/><rect x="11.4" y="15.0" width="2" height="2" fill="#606060"/><rect x="11.4" y="17.4" width="2" height="2" fill="#606060"/><rect x="11.4" y="19.8" width="2" height="2" fill="#606060"/><rect x="13.8" y="12.6" width="2" height="2" fill="#606060"/><rect x="13.8" y="15.0" width="2" height="2" fill="#606060"/><rect x="13.8" y="17.4" width="2" height="2" fill="#606060"/><rect x="13.8" y="19.8" width="2" height="2" fill="#606060"/>
<rect x="17.6" y="4" width="3.2" height="8" fill="#a4a4a4"/><rect x="23" y="4" width="3.2" height="8" fill="#b0b0b0"/>
<rect x="17.6" y="13.5" width="8.6" height="1.2" fill="#9a9a9a"/><rect x="17.6" y="16" width="8.6" height="1.2" fill="#a0a0a0"/>
<rect x="17.9" y="19.4" width="4.8" height="1.9" fill="#7a3040"/>
</svg>
<div style="position:absolute;left:379px;top:853.4px;font-size:15px;line-height:17px;color:#f0f0f0;white-space:nowrap;-webkit-text-stroke:0.25px #f0f0f0">Shake (it)</div>
<div style="position:absolute;left:380.3px;top:877.9px;width:23px;height:18px;border-radius:4px;background:#2f6ac0"><svg width="23" height="18" viewBox="0 0 23 18" style="position:absolute;left:0;top:0"><path d="M8.2 5.6 A5 5 0 1 0 14.8 5.6" fill="none" stroke="#bcd4ff" stroke-width="1.3" stroke-linecap="round"/><path d="M11.5 3.5 V9" stroke="#bcd4ff" stroke-width="1.3" stroke-linecap="round"/></svg></div>
<div style="position:absolute;left:410px;top:877.9px;width:46px;height:18px;border-radius:4px;background:#5c5c5c;box-shadow:0 1px 1px rgba(0,0,0,.2)"></div>
<div style="position:absolute;left:432.5px;top:877.9px;width:1px;height:18px;background:#525252"></div>
<div style="position:absolute;left:410px;top:880.4px;width:22px;text-align:center;font-size:13px;line-height:13px;color:#e8e8e8">M</div>
<div style="position:absolute;left:433px;top:880.4px;width:22px;text-align:center;font-size:13px;line-height:13px;color:#e8e8e8">S</div>
<div style="position:absolute;left:463.3px;top:877.9px;width:45px;height:18px;border-radius:4px;background:#5c5c5c;box-shadow:0 1px 1px rgba(0,0,0,.2)"></div>
<div style="position:absolute;left:486px;top:877.9px;width:1px;height:18px;background:#525252"></div>
<div style="position:absolute;left:463.3px;top:880.4px;width:22px;text-align:center;font-size:13px;line-height:13px;color:#e8e8e8">R</div>
<div style="position:absolute;left:496.5px;top:880.9px;width:1.6px;height:12px;background:#e8e8e8"></div>
<div style="position:absolute;left:516.4px;top:876.9px;width:87.3px;height:19.5px;border-radius:10px;background:#3a3a3a"></div>
<div style="position:absolute;left:529.4px;top:877.7px;width:18px;height:18px;border-radius:50%;background:#8c8c8c"></div>
<svg style="position:absolute;left:612.3px;top:871.4px" width="27" height="27" viewBox="0 0 27 27">
<path d="M6 22.5 A12 12 0 1 1 21 22.5" stroke="#383838" stroke-width="3" fill="none"/><path d="M13.5 1.5 A12 12 0 0 1 21 4.2" stroke="#3cd24a" stroke-width="3" fill="none"/>
<circle cx="13.5" cy="13.5" r="9.5" fill="#8a8a8a"/><rect x="12.8" y="4.5" width="1.4" height="3.5" fill="#333"/></svg>
<div style="position:absolute;left:260.5px;top:917.3px;width:392.5px;height:81.33px;background:#535353"></div>
<div style="position:absolute;left:260.5px;top:916.8px;width:392.5px;height:1px;background:#474747"></div>
<div style="position:absolute;left:291px;top:917.3px;width:1px;height:81.33px;background:#454545"></div>
<div style="position:absolute;left:260.5px;top:948.8px;width:31px;text-align:center;font-size:15px;line-height:15px;color:#e8e8e8;-webkit-text-stroke:0.2px #e8e8e8">130</div>
<svg style="position:absolute;left:329px;top:942.27px" width="32" height="30" viewBox="0 0 32 30">
<g fill="#2cd42c">
<circle cx="11.5" cy="4.5" r="3.3"/><circle cx="20.5" cy="4.5" r="3.3"/>
<rect x="8" y="6" width="7" height="9" rx="2"/><rect x="17" y="6" width="7" height="9" rx="2"/>
</g>
<g fill="#2cd42c" stroke="#3a6a3a" stroke-width="0.9">
<path d="M3.5 25 V18 Q3.5 15 7 15 Q10.5 15 10.5 18 V25 Z"/><path d="M12.5 25 V18 Q12.5 15 16 15 Q19.5 15 19.5 18 V25 Z"/><path d="M21.5 25 V18 Q21.5 15 25 15 Q28.5 15 28.5 18 V25 Z"/>
<circle cx="7" cy="13.5" r="3"/><circle cx="16" cy="13.5" r="3"/><circle cx="25" cy="13.5" r="3"/>
</g>
<rect x="1" y="24.5" width="30" height="4" rx="1" fill="#2cd42c"/>
</svg>
<div style="position:absolute;left:379px;top:934.8px;font-size:15px;line-height:17px;color:#f0f0f0;white-space:nowrap;-webkit-text-stroke:0.25px #f0f0f0">Distorted Choir</div>
<div style="position:absolute;left:380.3px;top:959.3px;width:23px;height:18px;border-radius:4px;background:#2f6ac0"><svg width="23" height="18" viewBox="0 0 23 18" style="position:absolute;left:0;top:0"><path d="M8.2 5.6 A5 5 0 1 0 14.8 5.6" fill="none" stroke="#bcd4ff" stroke-width="1.3" stroke-linecap="round"/><path d="M11.5 3.5 V9" stroke="#bcd4ff" stroke-width="1.3" stroke-linecap="round"/></svg></div>
<div style="position:absolute;left:410px;top:959.3px;width:46px;height:18px;border-radius:4px;background:#5c5c5c;box-shadow:0 1px 1px rgba(0,0,0,.2)"></div>
<div style="position:absolute;left:432.5px;top:959.3px;width:1px;height:18px;background:#525252"></div>
<div style="position:absolute;left:410px;top:961.8px;width:22px;text-align:center;font-size:13px;line-height:13px;color:#e8e8e8">M</div>
<div style="position:absolute;left:433px;top:961.8px;width:22px;text-align:center;font-size:13px;line-height:13px;color:#e8e8e8">S</div>
<div style="position:absolute;left:463.3px;top:959.3px;width:45px;height:18px;border-radius:4px;background:#5c5c5c;box-shadow:0 1px 1px rgba(0,0,0,.2)"></div>
<div style="position:absolute;left:486px;top:959.3px;width:1px;height:18px;background:#525252"></div>
<div style="position:absolute;left:463.3px;top:961.8px;width:22px;text-align:center;font-size:13px;line-height:13px;color:#e8e8e8">R</div>
<div style="position:absolute;left:496.5px;top:962.3px;width:1.6px;height:12px;background:#e8e8e8"></div>
<div style="position:absolute;left:516.4px;top:958.3px;width:87.3px;height:19.5px;border-radius:10px;background:#3a3a3a"></div>
<div style="position:absolute;left:531.2px;top:959.0px;width:18px;height:18px;border-radius:50%;background:#8c8c8c"></div>
<svg style="position:absolute;left:612.3px;top:952.8px" width="27" height="27" viewBox="0 0 27 27">
<path d="M6 22.5 A12 12 0 1 1 21 22.5" stroke="#383838" stroke-width="3" fill="none"/>
<circle cx="13.5" cy="13.5" r="9.5" fill="#8a8a8a"/><rect x="12.8" y="4.5" width="1.4" height="3.5" fill="#333"/></svg>
<div style="position:absolute;left:260.5px;top:998.1px;width:392.5px;height:1px;background:#474747"></div>
<svg style="position:absolute;left:12px;top:112px" width="10" height="16" viewBox="0 0 10 16"><path d="M2.5 2.5 L7.5 8 L2.5 13.5" fill="none" stroke="#c8c8c8" stroke-width="1.5"/></svg>
<div style="position:absolute;left:36px;top:113px;font-size:15px;line-height:15px;color:#f2f2f2;white-space:nowrap;">Quick Help</div>
<svg style="position:absolute;left:12px;top:155px" width="10" height="16" viewBox="0 0 10 16"><path d="M2.5 2.5 L7.5 8 L2.5 13.5" fill="none" stroke="#c8c8c8" stroke-width="1.5"/></svg>
<div style="position:absolute;left:36px;top:156px;font-size:15px;line-height:15px;color:#f2f2f2;white-space:nowrap;"><span style="color:#a2a2a2">Region:</span> MIDI Defaults</div>
<svg style="position:absolute;left:12px;top:198px" width="10" height="16" viewBox="0 0 10 16"><path d="M2.5 2.5 L7.5 8 L2.5 13.5" fill="none" stroke="#c8c8c8" stroke-width="1.5"/></svg>
<div style="position:absolute;left:36px;top:199px;font-size:15px;line-height:15px;color:#f2f2f2;white-space:nowrap;"><span style="color:#a2a2a2">Track:</span>&nbsp; Nasty 808 Bass</div>
<div style="position:absolute;left:27px;top:349.5px;width:75.0px;height:18.0px;background:#5c5c5c;border-radius:4px;text-align:center;font-size:12px;line-height:18.0px;color:#e4e4e4;white-space:nowrap;overflow:hidden;letter-spacing:0.45px;-webkit-text-stroke:0.15px #e4e4e4;"><span style="">Noisy 808...</span></div>
<div style="position:absolute;left:26px;top:372px;width:78.0px;height:9.5px;background:#474747;border-radius:0px;"></div>
<div style="position:absolute;left:26px;top:384px;width:78.0px;height:34.5px;background:#474747;border-radius:0px;"></div>
<svg style="position:absolute;left:26px;top:384px" width="78" height="35" viewBox="0 0 78 35">
<path d="M4.5 32.5 Q7 22 11 19.5 L19 18 L23 20 L27 17.5 L31 20 L35 17.5 L39 20 L42 17.5 L50 16.8 L73 16.3" fill="none" stroke="#7a9ad0" stroke-width="1.3"/>
<path d="M4.5 32.5 Q7 22 11 19.5 L4.5 19.5 Z" fill="#5a6070" opacity=".6"/>
</svg>
<div style="position:absolute;left:26.5px;top:423px;width:76.0px;height:19.5px;background:#4e4e4e;border-radius:3px;text-align:center;font-size:12px;line-height:19.5px;color:#1c1c1c;white-space:nowrap;overflow:hidden;letter-spacing:0.45px;-webkit-text-stroke:0.15px #1c1c1c;"><span style="">MIDI FX</span></div>
<div style="position:absolute;left:27px;top:455.5px;width:75.5px;height:18.0px;background:#2f9a3b;border-radius:4px;text-align:center;font-size:12px;line-height:18.0px;color:#c8f2c8;white-space:nowrap;overflow:hidden;letter-spacing:0.45px;-webkit-text-stroke:0.15px #c8f2c8;"><span style="">RetroSyn</span></div>
<div style="position:absolute;left:27.4px;top:483.6px;width:74.8px;height:18.2px;background:#2f6bbf;border-radius:4px;text-align:center;font-size:12px;line-height:18.2px;color:#e6eeff;white-space:nowrap;overflow:hidden;letter-spacing:0.45px;-webkit-text-stroke:0.15px #e6eeff;"><span style="">Compressor</span></div>
<div style="position:absolute;left:27.4px;top:503.3px;width:74.8px;height:17.0px;background:#2f6bbf;border-radius:4px;text-align:center;font-size:12px;line-height:17.0px;color:#e6eeff;white-space:nowrap;overflow:hidden;letter-spacing:0.45px;-webkit-text-stroke:0.15px #e6eeff;"><span style="">Channel EQ</span></div>
<div style="position:absolute;left:27.4px;top:522.6px;width:74.8px;height:17.0px;background:#2f6bbf;border-radius:4px;text-align:center;font-size:12px;line-height:17.0px;color:#e6eeff;white-space:nowrap;overflow:hidden;letter-spacing:0.45px;-webkit-text-stroke:0.15px #e6eeff;"><span style="">ClipDist</span></div>
<div style="position:absolute;left:27.4px;top:541.8px;width:74.8px;height:17.0px;background:#2f6bbf;border-radius:4px;text-align:center;font-size:12px;line-height:17.0px;color:#e6eeff;white-space:nowrap;overflow:hidden;letter-spacing:0.45px;-webkit-text-stroke:0.15px #e6eeff;"><span style="">Distortion</span></div>
<div style="position:absolute;left:27px;top:561px;width:76.0px;height:11.0px;background:#4c4c4c;border-radius:2px;"></div>
<div style="position:absolute;left:27.4px;top:581px;width:53.3px;height:17.8px;background:#2f6bbf;border-radius:4px;text-align:center;font-size:12px;line-height:17.8px;color:#e6eeff;white-space:nowrap;overflow:hidden;letter-spacing:0.45px;-webkit-text-stroke:0.15px #e6eeff;"><span style="">Bus 5</span></div>
<svg style="position:absolute;left:86px;top:580.7px" width="17" height="17" viewBox="0 0 17 17"><circle cx="8.5" cy="8.5" r="7.5" fill="#333"/><circle cx="8.5" cy="8.5" r="5.5" fill="#8a8a8a"/></svg>
<div style="position:absolute;left:27.4px;top:604px;width:53.3px;height:17.0px;background:#2f6bbf;border-radius:4px;text-align:center;font-size:12px;line-height:17.0px;color:#e6eeff;white-space:nowrap;overflow:hidden;letter-spacing:0.45px;-webkit-text-stroke:0.15px #e6eeff;"><span style="">Bus 2</span></div>
<svg style="position:absolute;left:86px;top:603.6px" width="17" height="17" viewBox="0 0 17 17"><circle cx="8.5" cy="8.5" r="7.5" fill="#333"/><circle cx="8.5" cy="8.5" r="5.5" fill="#8a8a8a"/></svg>
<div style="position:absolute;left:86px;top:614px;width:5px;height:5px;border-radius:50%;background:#3cc84a;transform:rotate(45deg)"></div>
<div style="position:absolute;left:27px;top:625px;width:54.0px;height:8.0px;background:#4c4c4c;border-radius:2px;"></div>
<div style="position:absolute;left:27.5px;top:645px;width:74.0px;height:18.0px;background:#5c5c5c;border-radius:4px;text-align:center;font-size:12px;line-height:18.0px;color:#e4e4e4;white-space:nowrap;overflow:hidden;letter-spacing:0.45px;-webkit-text-stroke:0.15px #e4e4e4;"><span style="">Stereo Out</span></div>
<div style="position:absolute;left:26px;top:670px;width:78.0px;height:19.0px;background:#4e4e4e;border-radius:3px;text-align:center;font-size:12px;line-height:19.0px;color:#1c1c1c;white-space:nowrap;overflow:hidden;letter-spacing:0.45px;-webkit-text-stroke:0.15px #1c1c1c;"><span style="">Group</span></div>
<div style="position:absolute;left:27px;top:697px;width:75.0px;height:17.5px;background:#5e5e5e;border-radius:4px;text-align:center;font-size:12px;line-height:17.5px;color:#5fd060;white-space:nowrap;overflow:hidden;letter-spacing:0.45px;-webkit-text-stroke:0.15px #5fd060;"><span style="">Read</span></div>
<svg style="position:absolute;left:45.0px;top:723.8px" width="39.0" height="39.0" viewBox="0 0 39.0 39.0"><path d="M8.77 33.54 A17.0 17.0 0 1 1 30.23 33.54" stroke="#363636" stroke-width="5" fill="none"/><circle cx="19.5" cy="19.5" r="16" fill="#8c8c8c"/><rect x="18.7" y="3.5" width="1.6" height="5" fill="#222"/></svg>
<div style="position:absolute;left:26px;top:772.5px;width:37.0px;height:19.5px;background:#3c3c3c;border-radius:0px;text-align:center;font-size:12px;line-height:19.5px;color:#e8e8e8;white-space:nowrap;overflow:hidden;letter-spacing:0.45px;-webkit-text-stroke:0.15px #e8e8e8;text-align:left;padding-left:6px"><span style="">-6.8</span></div>
<div style="position:absolute;left:67px;top:772.5px;width:37.0px;height:19.5px;background:#3c3c3c;border-radius:0px;"></div>
<div style="position:absolute;left:43.5px;top:817px;width:2px;height:154px;background:#2e2e2e"></div>
<div style="position:absolute;left:29.5px;top:818.0px;width:14px;height:1px;background:#a0a0a0"></div>
<div style="position:absolute;left:37.5px;top:821.4px;width:6px;height:1px;background:#6a6a6a"></div>
<div style="position:absolute;left:37.5px;top:824.8px;width:6px;height:1px;background:#6a6a6a"></div>
<div style="position:absolute;left:34.5px;top:828.1px;width:9px;height:1px;background:#6a6a6a"></div>
<div style="position:absolute;left:37.5px;top:831.5px;width:6px;height:1px;background:#6a6a6a"></div>
<div style="position:absolute;left:37.5px;top:834.9px;width:6px;height:1px;background:#6a6a6a"></div>
<div style="position:absolute;left:34.5px;top:838.3px;width:9px;height:1px;background:#6a6a6a"></div>
<div style="position:absolute;left:37.5px;top:841.6px;width:6px;height:1px;background:#6a6a6a"></div>
<div style="position:absolute;left:37.5px;top:845.0px;width:6px;height:1px;background:#6a6a6a"></div>
<div style="position:absolute;left:34.5px;top:848.4px;width:9px;height:1px;background:#6a6a6a"></div>
<div style="position:absolute;left:37.5px;top:851.8px;width:6px;height:1px;background:#6a6a6a"></div>
<div style="position:absolute;left:37.5px;top:855.2px;width:6px;height:1px;background:#6a6a6a"></div>
<div style="position:absolute;left:34.5px;top:858.5px;width:9px;height:1px;background:#6a6a6a"></div>
<div style="position:absolute;left:37.5px;top:861.9px;width:6px;height:1px;background:#6a6a6a"></div>
<div style="position:absolute;left:37.5px;top:865.3px;width:6px;height:1px;background:#6a6a6a"></div>
<div style="position:absolute;left:29.5px;top:868.7px;width:14px;height:1px;background:#a0a0a0"></div>
<div style="position:absolute;left:37.5px;top:872.0px;width:6px;height:1px;background:#6a6a6a"></div>
<div style="position:absolute;left:37.5px;top:875.4px;width:6px;height:1px;background:#6a6a6a"></div>
<div style="position:absolute;left:34.5px;top:878.8px;width:9px;height:1px;background:#6a6a6a"></div>
<div style="position:absolute;left:37.5px;top:882.2px;width:6px;height:1px;background:#6a6a6a"></div>
<div style="position:absolute;left:37.5px;top:885.6px;width:6px;height:1px;background:#6a6a6a"></div>
<div style="position:absolute;left:34.5px;top:888.9px;width:9px;height:1px;background:#6a6a6a"></div>
<div style="position:absolute;left:37.5px;top:892.3px;width:6px;height:1px;background:#6a6a6a"></div>
<div style="position:absolute;left:37.5px;top:895.7px;width:6px;height:1px;background:#6a6a6a"></div>
<div style="position:absolute;left:34.5px;top:899.1px;width:9px;height:1px;background:#6a6a6a"></div>
<div style="position:absolute;left:37.5px;top:902.4px;width:6px;height:1px;background:#6a6a6a"></div>
<div style="position:absolute;left:37.5px;top:905.8px;width:6px;height:1px;background:#6a6a6a"></div>
<div style="position:absolute;left:34.5px;top:909.2px;width:9px;height:1px;background:#6a6a6a"></div>
<div style="position:absolute;left:37.5px;top:912.6px;width:6px;height:1px;background:#6a6a6a"></div>
<div style="position:absolute;left:37.5px;top:916.0px;width:6px;height:1px;background:#6a6a6a"></div>
<div style="position:absolute;left:29.5px;top:919.3px;width:14px;height:1px;background:#a0a0a0"></div>
<div style="position:absolute;left:37.5px;top:922.7px;width:6px;height:1px;background:#6a6a6a"></div>
<div style="position:absolute;left:37.5px;top:926.1px;width:6px;height:1px;background:#6a6a6a"></div>
<div style="position:absolute;left:34.5px;top:929.5px;width:9px;height:1px;background:#6a6a6a"></div>
<div style="position:absolute;left:37.5px;top:932.8px;width:6px;height:1px;background:#6a6a6a"></div>
<div style="position:absolute;left:37.5px;top:936.2px;width:6px;height:1px;background:#6a6a6a"></div>
<div style="position:absolute;left:34.5px;top:939.6px;width:9px;height:1px;background:#6a6a6a"></div>
<div style="position:absolute;left:37.5px;top:943.0px;width:6px;height:1px;background:#6a6a6a"></div>
<div style="position:absolute;left:37.5px;top:946.4px;width:6px;height:1px;background:#6a6a6a"></div>
<div style="position:absolute;left:34.5px;top:949.7px;width:9px;height:1px;background:#6a6a6a"></div>
<div style="position:absolute;left:37.5px;top:953.1px;width:6px;height:1px;background:#6a6a6a"></div>
<div style="position:absolute;left:37.5px;top:956.5px;width:6px;height:1px;background:#6a6a6a"></div>
<div style="position:absolute;left:34.5px;top:959.9px;width:9px;height:1px;background:#6a6a6a"></div>
<div style="position:absolute;left:37.5px;top:963.2px;width:6px;height:1px;background:#6a6a6a"></div>
<div style="position:absolute;left:37.5px;top:966.6px;width:6px;height:1px;background:#6a6a6a"></div>
<div style="position:absolute;left:29.5px;top:970.0px;width:14px;height:1px;background:#a0a0a0"></div>
<div style="position:absolute;left:56.599999999999994px;top:813.5px;width:20px;text-align:right;font-size:8.5px;line-height:9px;color:#7c7c7c">0</div>
<div style="position:absolute;left:77.6px;top:817.0px;width:3px;height:1px;background:#777"></div>
<div style="position:absolute;left:56.599999999999994px;top:824.2px;width:20px;text-align:right;font-size:8.5px;line-height:9px;color:#7c7c7c">3</div>
<div style="position:absolute;left:77.6px;top:827.7px;width:3px;height:1px;background:#777"></div>
<div style="position:absolute;left:56.599999999999994px;top:834.9px;width:20px;text-align:right;font-size:8.5px;line-height:9px;color:#7c7c7c">6</div>
<div style="position:absolute;left:77.6px;top:838.4px;width:3px;height:1px;background:#777"></div>
<div style="position:absolute;left:56.599999999999994px;top:845.6px;width:20px;text-align:right;font-size:8.5px;line-height:9px;color:#7c7c7c">9</div>
<div style="position:absolute;left:77.6px;top:849.1px;width:3px;height:1px;background:#777"></div>
<div style="position:absolute;left:56.599999999999994px;top:856.4px;width:20px;text-align:right;font-size:8.5px;line-height:9px;color:#7c7c7c">12</div>
<div style="position:absolute;left:77.6px;top:859.9px;width:3px;height:1px;background:#777"></div>
<div style="position:absolute;left:56.599999999999994px;top:867.1px;width:20px;text-align:right;font-size:8.5px;line-height:9px;color:#7c7c7c">15</div>
<div style="position:absolute;left:77.6px;top:870.6px;width:3px;height:1px;background:#777"></div>
<div style="position:absolute;left:56.599999999999994px;top:877.8px;width:20px;text-align:right;font-size:8.5px;line-height:9px;color:#7c7c7c">18</div>
<div style="position:absolute;left:77.6px;top:881.3px;width:3px;height:1px;background:#777"></div>
<div style="position:absolute;left:56.599999999999994px;top:888.5px;width:20px;text-align:right;font-size:8.5px;line-height:9px;color:#7c7c7c">21</div>
<div style="position:absolute;left:77.6px;top:892.0px;width:3px;height:1px;background:#777"></div>
<div style="position:absolute;left:56.599999999999994px;top:899.2px;width:20px;text-align:right;font-size:8.5px;line-height:9px;color:#7c7c7c">24</div>
<div style="position:absolute;left:77.6px;top:902.7px;width:3px;height:1px;background:#777"></div>
<div style="position:absolute;left:56.599999999999994px;top:909.9px;width:20px;text-align:right;font-size:8.5px;line-height:9px;color:#7c7c7c">30</div>
<div style="position:absolute;left:77.6px;top:913.4px;width:3px;height:1px;background:#777"></div>
<div style="position:absolute;left:56.599999999999994px;top:920.6px;width:20px;text-align:right;font-size:8.5px;line-height:9px;color:#7c7c7c">35</div>
<div style="position:absolute;left:77.6px;top:924.1px;width:3px;height:1px;background:#777"></div>
<div style="position:absolute;left:56.599999999999994px;top:931.4px;width:20px;text-align:right;font-size:8.5px;line-height:9px;color:#7c7c7c">40</div>
<div style="position:absolute;left:77.6px;top:934.9px;width:3px;height:1px;background:#777"></div>
<div style="position:absolute;left:56.599999999999994px;top:942.1px;width:20px;text-align:right;font-size:8.5px;line-height:9px;color:#7c7c7c">45</div>
<div style="position:absolute;left:77.6px;top:945.6px;width:3px;height:1px;background:#777"></div>
<div style="position:absolute;left:56.599999999999994px;top:952.8px;width:20px;text-align:right;font-size:8.5px;line-height:9px;color:#7c7c7c">50</div>
<div style="position:absolute;left:77.6px;top:956.3px;width:3px;height:1px;background:#777"></div>
<div style="position:absolute;left:56.599999999999994px;top:963.5px;width:20px;text-align:right;font-size:8.5px;line-height:9px;color:#7c7c7c">60</div>
<div style="position:absolute;left:77.6px;top:967.0px;width:3px;height:1px;background:#777"></div>
<div style="position:absolute;left:77px;top:814px;width:13.5px;height:157px;background:#393939;border-radius:2px"></div>
<div style="position:absolute;left:35px;top:878px;width:20px;height:41px;border-radius:2px;background:linear-gradient(#9a9a9a 0%,#c4c4c4 10%,#8a8a8a 22%,#7a7a7a 42%,#4e4e4e 49%,#9a9a9a 55%,#c0c0c0 72%,#8a8a8a 90%,#5a5a5a 100%);box-shadow:0 1px 2px rgba(0,0,0,.5)"></div>
<div style="position:absolute;left:27.7px;top:1000.3px;width:33.7px;height:17.7px;background:#5c5c5c;border-radius:4px;text-align:center;font-size:13px;line-height:17.7px;color:#e8e8e8;white-space:nowrap;overflow:hidden;letter-spacing:0.45px;-webkit-text-stroke:0.15px #e8e8e8;"><span style="">M</span></div>
<div style="position:absolute;left:68.1px;top:1000.3px;width:33.5px;height:17.7px;background:#5c5c5c;border-radius:4px;text-align:center;font-size:13px;line-height:17.7px;color:#e8e8e8;white-space:nowrap;overflow:hidden;letter-spacing:0.45px;-webkit-text-stroke:0.15px #e8e8e8;"><span style="">S</span></div>
<div style="position:absolute;left:-34.5px;top:1036.5px;width:200px;text-align:center;font-size:13px;line-height:13px;color:#e0e0e0;white-space:nowrap;letter-spacing:0.4px">Nasty 808 Bass</div>
<div style="position:absolute;left:157.5px;top:348.75px;width:74.5px;height:17.5px;background:#5a5a5a;border-radius:4px;"></div>
<div style="position:absolute;left:157.5px;top:349.75px;width:74.5px;height:17.5px;background:transparent;border-radius:4px;text-align:center;font-size:12px;line-height:17.5px;color:#202020;white-space:nowrap;overflow:hidden;letter-spacing:0.45px;-webkit-text-stroke:0.15px #202020;"><span style="">Setting</span></div>
<div style="position:absolute;left:156px;top:372.5px;width:78.0px;height:8.5px;background:#4d4d4d;border-radius:0px;"></div>
<div style="position:absolute;left:156px;top:383.75px;width:78.0px;height:33.8px;background:#4d4d4d;border-radius:0px;"></div>
<div style="position:absolute;left:156px;top:387px;width:78.0px;height:33.5px;background:transparent;border-radius:0px;text-align:center;font-size:12px;line-height:33.5px;color:#202020;white-space:nowrap;overflow:hidden;letter-spacing:0.45px;-webkit-text-stroke:0.15px #202020;"><span style="">EQ</span></div>
<div style="position:absolute;left:157.5px;top:455px;width:74.5px;height:17.5px;background:#5c5c5c;border-radius:3px;"></div>
<svg style="position:absolute;left:184px;top:458px" width="20" height="12" viewBox="0 0 20 12"><circle cx="7.5" cy="6" r="4.3" fill="none" stroke="#ececec" stroke-width="1.4"/><circle cx="12.5" cy="6" r="4.3" fill="none" stroke="#ececec" stroke-width="1.4"/></svg>
<div style="position:absolute;left:156px;top:479px;width:78.0px;height:89.0px;background:#4c4c4c;border-radius:2px;"></div>
<div style="position:absolute;left:157.5px;top:483.75px;width:74.5px;height:17.5px;background:#5a5a5a;border-radius:4px;text-align:center;font-size:12px;line-height:17.5px;color:#ececec;white-space:nowrap;overflow:hidden;letter-spacing:0.45px;-webkit-text-stroke:0.15px #ececec;"><span style="">Gain</span></div>
<div style="position:absolute;left:157.5px;top:503.25px;width:74.5px;height:17.2px;background:#2f6bbf;border-radius:4px;text-align:center;font-size:12px;line-height:17.2px;color:#e6eeff;white-space:nowrap;overflow:hidden;letter-spacing:0.45px;-webkit-text-stroke:0.15px #e6eeff;"><span style="">Mastering</span></div>
<div style="position:absolute;left:156.5px;top:671px;width:75.5px;height:18.0px;background:#4e4e4e;border-radius:3px;text-align:center;font-size:12px;line-height:18.0px;color:#1c1c1c;white-space:nowrap;overflow:hidden;letter-spacing:0.45px;-webkit-text-stroke:0.15px #1c1c1c;"><span style="">Group</span></div>
<div style="position:absolute;left:157.5px;top:697.2px;width:74.5px;height:17.9px;background:#2f9a3b;border-radius:4px;text-align:center;font-size:12px;line-height:17.9px;color:#dff8df;white-space:nowrap;overflow:hidden;letter-spacing:0.45px;-webkit-text-stroke:0.15px #dff8df;"><span style="">Read</span></div>
<svg style="position:absolute;left:174.7px;top:723.7px" width="39.0" height="39.0" viewBox="0 0 39.0 39.0"><path d="M8.77 33.54 A17.0 17.0 0 1 1 30.23 33.54" stroke="#363636" stroke-width="5" fill="none"/><circle cx="19.5" cy="19.5" r="16" fill="#8c8c8c"/><rect x="18.7" y="3.5" width="1.6" height="5" fill="#222"/></svg>
<div style="position:absolute;left:155.3px;top:773px;width:37.0px;height:19.6px;background:#3c3c3c;border-radius:0px;text-align:center;font-size:12px;line-height:19.6px;color:#e8e8e8;white-space:nowrap;overflow:hidden;letter-spacing:0.45px;-webkit-text-stroke:0.15px #e8e8e8;"><span style="">0.0</span></div>
<div style="position:absolute;left:196.2px;top:773px;width:37.0px;height:19.6px;background:#3c3c3c;border-radius:0px;text-align:center;font-size:12px;line-height:19.6px;color:#5fd060;white-space:nowrap;overflow:hidden;letter-spacing:0.45px;-webkit-text-stroke:0.15px #5fd060;"><span style="">-8.4</span></div>
<div style="position:absolute;left:173.5px;top:817px;width:2px;height:154px;background:#2e2e2e"></div>
<div style="position:absolute;left:159.5px;top:818.0px;width:14px;height:1px;background:#a0a0a0"></div>
<div style="position:absolute;left:167.5px;top:821.4px;width:6px;height:1px;background:#6a6a6a"></div>
<div style="position:absolute;left:167.5px;top:824.8px;width:6px;height:1px;background:#6a6a6a"></div>
<div style="position:absolute;left:164.5px;top:828.1px;width:9px;height:1px;background:#6a6a6a"></div>
<div style="position:absolute;left:167.5px;top:831.5px;width:6px;height:1px;background:#6a6a6a"></div>
<div style="position:absolute;left:167.5px;top:834.9px;width:6px;height:1px;background:#6a6a6a"></div>
<div style="position:absolute;left:164.5px;top:838.3px;width:9px;height:1px;background:#6a6a6a"></div>
<div style="position:absolute;left:167.5px;top:841.6px;width:6px;height:1px;background:#6a6a6a"></div>
<div style="position:absolute;left:167.5px;top:845.0px;width:6px;height:1px;background:#6a6a6a"></div>
<div style="position:absolute;left:164.5px;top:848.4px;width:9px;height:1px;background:#6a6a6a"></div>
<div style="position:absolute;left:167.5px;top:851.8px;width:6px;height:1px;background:#6a6a6a"></div>
<div style="position:absolute;left:167.5px;top:855.2px;width:6px;height:1px;background:#6a6a6a"></div>
<div style="position:absolute;left:164.5px;top:858.5px;width:9px;height:1px;background:#6a6a6a"></div>
<div style="position:absolute;left:167.5px;top:861.9px;width:6px;height:1px;background:#6a6a6a"></div>
<div style="position:absolute;left:167.5px;top:865.3px;width:6px;height:1px;background:#6a6a6a"></div>
<div style="position:absolute;left:159.5px;top:868.7px;width:14px;height:1px;background:#a0a0a0"></div>
<div style="position:absolute;left:167.5px;top:872.0px;width:6px;height:1px;background:#6a6a6a"></div>
<div style="position:absolute;left:167.5px;top:875.4px;width:6px;height:1px;background:#6a6a6a"></div>
<div style="position:absolute;left:164.5px;top:878.8px;width:9px;height:1px;background:#6a6a6a"></div>
<div style="position:absolute;left:167.5px;top:882.2px;width:6px;height:1px;background:#6a6a6a"></div>
<div style="position:absolute;left:167.5px;top:885.6px;width:6px;height:1px;background:#6a6a6a"></div>
<div style="position:absolute;left:164.5px;top:888.9px;width:9px;height:1px;background:#6a6a6a"></div>
<div style="position:absolute;left:167.5px;top:892.3px;width:6px;height:1px;background:#6a6a6a"></div>
<div style="position:absolute;left:167.5px;top:895.7px;width:6px;height:1px;background:#6a6a6a"></div>
<div style="position:absolute;left:164.5px;top:899.1px;width:9px;height:1px;background:#6a6a6a"></div>
<div style="position:absolute;left:167.5px;top:902.4px;width:6px;height:1px;background:#6a6a6a"></div>
<div style="position:absolute;left:167.5px;top:905.8px;width:6px;height:1px;background:#6a6a6a"></div>
<div style="position:absolute;left:164.5px;top:909.2px;width:9px;height:1px;background:#6a6a6a"></div>
<div style="position:absolute;left:167.5px;top:912.6px;width:6px;height:1px;background:#6a6a6a"></div>
<div style="position:absolute;left:167.5px;top:916.0px;width:6px;height:1px;background:#6a6a6a"></div>
<div style="position:absolute;left:159.5px;top:919.3px;width:14px;height:1px;background:#a0a0a0"></div>
<div style="position:absolute;left:167.5px;top:922.7px;width:6px;height:1px;background:#6a6a6a"></div>
<div style="position:absolute;left:167.5px;top:926.1px;width:6px;height:1px;background:#6a6a6a"></div>
<div style="position:absolute;left:164.5px;top:929.5px;width:9px;height:1px;background:#6a6a6a"></div>
<div style="position:absolute;left:167.5px;top:932.8px;width:6px;height:1px;background:#6a6a6a"></div>
<div style="position:absolute;left:167.5px;top:936.2px;width:6px;height:1px;background:#6a6a6a"></div>
<div style="position:absolute;left:164.5px;top:939.6px;width:9px;height:1px;background:#6a6a6a"></div>
<div style="position:absolute;left:167.5px;top:943.0px;width:6px;height:1px;background:#6a6a6a"></div>
<div style="position:absolute;left:167.5px;top:946.4px;width:6px;height:1px;background:#6a6a6a"></div>
<div style="position:absolute;left:164.5px;top:949.7px;width:9px;height:1px;background:#6a6a6a"></div>
<div style="position:absolute;left:167.5px;top:953.1px;width:6px;height:1px;background:#6a6a6a"></div>
<div style="position:absolute;left:167.5px;top:956.5px;width:6px;height:1px;background:#6a6a6a"></div>
<div style="position:absolute;left:164.5px;top:959.9px;width:9px;height:1px;background:#6a6a6a"></div>
<div style="position:absolute;left:167.5px;top:963.2px;width:6px;height:1px;background:#6a6a6a"></div>
<div style="position:absolute;left:167.5px;top:966.6px;width:6px;height:1px;background:#6a6a6a"></div>
<div style="position:absolute;left:159.5px;top:970.0px;width:14px;height:1px;background:#a0a0a0"></div>
<div style="position:absolute;left:187.3px;top:813.5px;width:20px;text-align:right;font-size:8.5px;line-height:9px;color:#7c7c7c">0</div>
<div style="position:absolute;left:208.3px;top:817.0px;width:3px;height:1px;background:#777"></div>
<div style="position:absolute;left:187.3px;top:824.2px;width:20px;text-align:right;font-size:8.5px;line-height:9px;color:#7c7c7c">3</div>
<div style="position:absolute;left:208.3px;top:827.7px;width:3px;height:1px;background:#777"></div>
<div style="position:absolute;left:187.3px;top:834.9px;width:20px;text-align:right;font-size:8.5px;line-height:9px;color:#7c7c7c">6</div>
<div style="position:absolute;left:208.3px;top:838.4px;width:3px;height:1px;background:#777"></div>
<div style="position:absolute;left:187.3px;top:845.6px;width:20px;text-align:right;font-size:8.5px;line-height:9px;color:#7c7c7c">9</div>
<div style="position:absolute;left:208.3px;top:849.1px;width:3px;height:1px;background:#777"></div>
<div style="position:absolute;left:187.3px;top:856.4px;width:20px;text-align:right;font-size:8.5px;line-height:9px;color:#7c7c7c">12</div>
<div style="position:absolute;left:208.3px;top:859.9px;width:3px;height:1px;background:#777"></div>
<div style="position:absolute;left:187.3px;top:867.1px;width:20px;text-align:right;font-size:8.5px;line-height:9px;color:#7c7c7c">15</div>
<div style="position:absolute;left:208.3px;top:870.6px;width:3px;height:1px;background:#777"></div>
<div style="position:absolute;left:187.3px;top:877.8px;width:20px;text-align:right;font-size:8.5px;line-height:9px;color:#7c7c7c">18</div>
<div style="position:absolute;left:208.3px;top:881.3px;width:3px;height:1px;background:#777"></div>
<div style="position:absolute;left:187.3px;top:888.5px;width:20px;text-align:right;font-size:8.5px;line-height:9px;color:#7c7c7c">21</div>
<div style="position:absolute;left:208.3px;top:892.0px;width:3px;height:1px;background:#777"></div>
<div style="position:absolute;left:187.3px;top:899.2px;width:20px;text-align:right;font-size:8.5px;line-height:9px;color:#7c7c7c">24</div>
<div style="position:absolute;left:208.3px;top:902.7px;width:3px;height:1px;background:#777"></div>
<div style="position:absolute;left:187.3px;top:909.9px;width:20px;text-align:right;font-size:8.5px;line-height:9px;color:#7c7c7c">30</div>
<div style="position:absolute;left:208.3px;top:913.4px;width:3px;height:1px;background:#777"></div>
<div style="position:absolute;left:187.3px;top:920.6px;width:20px;text-align:right;font-size:8.5px;line-height:9px;color:#7c7c7c">35</div>
<div style="position:absolute;left:208.3px;top:924.1px;width:3px;height:1px;background:#777"></div>
<div style="position:absolute;left:187.3px;top:931.4px;width:20px;text-align:right;font-size:8.5px;line-height:9px;color:#7c7c7c">40</div>
<div style="position:absolute;left:208.3px;top:934.9px;width:3px;height:1px;background:#777"></div>
<div style="position:absolute;left:187.3px;top:942.1px;width:20px;text-align:right;font-size:8.5px;line-height:9px;color:#7c7c7c">45</div>
<div style="position:absolute;left:208.3px;top:945.6px;width:3px;height:1px;background:#777"></div>
<div style="position:absolute;left:187.3px;top:952.8px;width:20px;text-align:right;font-size:8.5px;line-height:9px;color:#7c7c7c">50</div>
<div style="position:absolute;left:208.3px;top:956.3px;width:3px;height:1px;background:#777"></div>
<div style="position:absolute;left:187.3px;top:963.5px;width:20px;text-align:right;font-size:8.5px;line-height:9px;color:#7c7c7c">60</div>
<div style="position:absolute;left:208.3px;top:967.0px;width:3px;height:1px;background:#777"></div>
<div style="position:absolute;left:207px;top:814px;width:13px;height:157px;background:#393939;border-radius:2px"></div>
<div style="position:absolute;left:209px;top:850px;width:4px;height:120px;background:linear-gradient(#c8d048,#3ccc44 8%,#3ccc44)"></div>
<div style="position:absolute;left:214px;top:849px;width:4px;height:121px;background:linear-gradient(#c8d048,#3ccc44 8%,#3ccc44)"></div>
<div style="position:absolute;left:209px;top:845px;width:4px;height:1.5px;background:#d89a30"></div>
<div style="position:absolute;left:214px;top:844px;width:4px;height:1.5px;background:#d89a30"></div>
<div style="position:absolute;left:164.3px;top:836.6px;width:20.19999999999999px;height:40.799999999999955px;border-radius:2px;background:linear-gradient(#9a9a9a 0%,#c4c4c4 10%,#8a8a8a 22%,#7a7a7a 42%,#4e4e4e 49%,#9a9a9a 55%,#c0c0c0 72%,#8a8a8a 90%,#5a5a5a 100%);box-shadow:0 1px 2px rgba(0,0,0,.5)"></div>
<div style="position:absolute;left:198px;top:978.7px;width:34.0px;height:15.8px;background:#5c5c5c;border-radius:4px;text-align:center;font-size:13px;line-height:15.8px;color:#e8e8e8;white-space:nowrap;overflow:hidden;letter-spacing:0.45px;-webkit-text-stroke:0.15px #e8e8e8;"><span style="">Bnc</span></div>
<div style="position:absolute;left:157.2px;top:1001.2px;width:33.9px;height:16.6px;background:#5c5c5c;border-radius:4px;text-align:center;font-size:13px;line-height:16.6px;color:#e8e8e8;white-space:nowrap;overflow:hidden;letter-spacing:0.45px;-webkit-text-stroke:0.15px #e8e8e8;"><span style="">M</span></div>
<div style="position:absolute;left:94.19999999999999px;top:1036.5px;width:200px;text-align:center;font-size:13px;line-height:13px;color:#e0e0e0;white-space:nowrap;letter-spacing:0.4px">Stereo Out</div>
<div style="position:absolute;left:14px;top:43px;width:150.0px;height:34.5px;background:#919191;border-radius:11px;"></div>
<div style="position:absolute;left:191px;top:43px;width:113.0px;height:34.5px;background:#919191;border-radius:11px;"></div>
<div style="position:absolute;left:380px;top:43px;width:288.0px;height:34.0px;background:#919191;border-radius:11px;"></div>
<div style="position:absolute;left:995px;top:43px;width:110.0px;height:34.5px;background:#919191;border-radius:11px;"></div>
<div style="position:absolute;left:1135px;top:43px;width:73.0px;height:34.5px;background:#919191;border-radius:11px;"></div>
<div style="position:absolute;left:1498px;top:43px;width:149.0px;height:34.5px;background:#919191;border-radius:11px;"></div>
<svg style="position:absolute;left:20.5px;top:49.0px" width="26" height="22" viewBox="0 0 26 22"><rect x="2" y="2" width="14" height="12" rx="2" fill="none" stroke="#4a4a4a" stroke-width="1.6"/><rect x="6" y="6" width="16" height="14" rx="2" fill="#4a4a4a"/><path d="M12 17 A1.8 1.8 0 1 1 12 16.9 M13.6 16.5 V10 L18 9 V15.5" stroke="#b8b8b8" stroke-width="1.3" fill="none"/></svg>
<div style="position:absolute;left:53.3px;top:44px;width:35.2px;height:31.5px;background:#565656;border-radius:9px;"></div>
<svg style="position:absolute;left:61.0px;top:51.0px" width="20" height="18" viewBox="0 0 20 18"><rect x="1.5" y="1.5" width="16" height="6" rx="3" fill="none" stroke="#eee" stroke-width="1.4"/><rect x="3" y="3" width="3" height="3" rx="1" fill="#eee"/><rect x="1" y="10" width="17" height="7" rx="3.5" fill="#eee"/><circle cx="14" cy="13.5" r="2.2" fill="#555"/></svg>
<div style="position:absolute;left:90.5px;top:44px;width:35.0px;height:31.5px;background:#565656;border-radius:9px;"></div>
<svg style="position:absolute;left:97.0px;top:49.0px" width="22" height="22" viewBox="0 0 22 22"><circle cx="11" cy="11" r="9" fill="none" stroke="#eee" stroke-width="1.5"/><path d="M8 8.5 Q8 5.5 11 5.5 Q14 5.5 14 8.3 Q14 10 11.5 11 Q11 11.4 11 13" fill="none" stroke="#eee" stroke-width="1.6"/><circle cx="11" cy="15.8" r="1.1" fill="#eee"/></svg>
<svg style="position:absolute;left:133.5px;top:50.0px" width="24" height="20" viewBox="0 0 24 20"><rect x="2" y="2" width="20" height="16" rx="1" fill="none" stroke="#4a4a4a" stroke-width="1.5"/><path d="M2 6 H22" stroke="#4a4a4a" stroke-width="1.5"/><path d="M12 8.5 V14.5 M9 11.8 L12 14.8 L15 11.8" stroke="#4a4a4a" stroke-width="1.4" fill="none"/></svg>
<svg style="position:absolute;left:197.7px;top:48.0px" width="26" height="24" viewBox="0 0 26 24"><circle cx="13" cy="13" r="6.5" fill="none" stroke="#4a4a4a" stroke-width="1.6"/><path d="M13 13 V7" stroke="#4a4a4a" stroke-width="1.6"/><circle cx="23.0" cy="13.0" r="1" fill="#4a4a4a"/><circle cx="3.0" cy="13.0" r="1" fill="#4a4a4a"/><circle cx="13.0" cy="3.0" r="1" fill="#4a4a4a"/><circle cx="20.0" cy="6.0" r="1" fill="#4a4a4a"/><circle cx="6.0" cy="6.0" r="1" fill="#4a4a4a"/><circle cx="20.0" cy="20.0" r="1" fill="#4a4a4a"/><circle cx="6.0" cy="20.0" r="1" fill="#4a4a4a"/></svg>
<svg style="position:absolute;left:237.5px;top:48.0px" width="22" height="24" viewBox="0 0 22 24"><path d="M4 3 V21 M11 3 V21 M18 3 V21" stroke="#4a4a4a" stroke-width="1.5"/><rect x="2" y="12" width="4" height="5" rx="2" fill="none" stroke="#4a4a4a" stroke-width="1.4"/><rect x="9" y="5" width="4" height="5" rx="2" fill="none" stroke="#4a4a4a" stroke-width="1.4"/><rect x="16" y="11" width="4" height="5" rx="2" fill="none" stroke="#4a4a4a" stroke-width="1.4"/></svg>
<svg style="position:absolute;left:273.3px;top:49.0px" width="22" height="22" viewBox="0 0 22 22"><path d="M3 19 L18 4" stroke="#4a4a4a" stroke-width="2" stroke-linecap="round"/></svg>
<svg style="position:absolute;left:385.8px;top:51.0px" width="28" height="18" viewBox="0 0 28 18"><path d="M1 9 L13 1.5 V16.5 Z M13 9 L25 1.5 V16.5 Z" fill="#4e4e4e"/></svg>
<svg style="position:absolute;left:428.6px;top:51.0px" width="28" height="18" viewBox="0 0 28 18"><path d="M2 1.5 L14 9 L2 16.5 Z M14 1.5 L26 9 L14 16.5 Z" fill="#4e4e4e"/></svg>
<div style="position:absolute;left:476px;top:52px;width:16.0px;height:16.0px;background:#4e4e4e;border-radius:1.5px;"></div>
<div style="position:absolute;left:506px;top:44px;width:39.5px;height:31.7px;background:#2e9a3a;border-radius:7px;"></div>
<svg style="position:absolute;left:515.7px;top:50.0px" width="20" height="20" viewBox="0 0 20 20"><path d="M4 2 L17 10 L4 18 Z" fill="#f2f2f2"/></svg>
<svg style="position:absolute;left:557.8px;top:49.0px" width="22" height="22" viewBox="0 0 22 22"><circle cx="11" cy="11" r="9.5" fill="#c8242a"/></svg>
<svg style="position:absolute;left:595.6px;top:48.0px" width="24" height="24" viewBox="0 0 24 24"><circle cx="12" cy="12" r="9.5" fill="none" stroke="#c8242a" stroke-width="1.6" stroke-dasharray="2.6 1.6"/><circle cx="12" cy="12" r="4" fill="#c8242a"/></svg>
<svg style="position:absolute;left:634.3px;top:50.0px" width="24" height="20" viewBox="0 0 24 20"><path d="M3 11 V8 Q3 5 6 5 H19 M16 2 L19.5 5 L16 8 M21 9 V12 Q21 15 18 15 H5 M8 12 L4.5 15 L8 18" fill="none" stroke="#4e4e4e" stroke-width="2"/></svg>
<div style="position:absolute;left:682px;top:33px;width:297.0px;height:53.6px;background:#26272b;border-radius:9px;"></div>
<div style="position:absolute;left:818px;top:40px;width:1px;height:40px;background:#2f3034"></div>
<div style="position:absolute;left:888.7px;top:40px;width:1px;height:40px;background:#2f3034"></div>
<svg style="position:absolute;left:0;top:0" width="1000" height="90" viewBox="0 0 1000 90"><ellipse cx="712.0" cy="56.5" rx="8.3" ry="12.3" fill="none" stroke="#3a3c42" stroke-width="1.7"/><ellipse cx="731.0" cy="56.5" rx="8.3" ry="12.3" fill="none" stroke="#3a3c42" stroke-width="1.7"/><path d="M755.5 69 V44.2 L742.7 62 H760.0" fill="none" stroke="#d8dbe2" stroke-width="1.7" stroke-linejoin="miter"/><path d="M790.5 69 V44.2 L777.7 62 H795.0" fill="none" stroke="#d8dbe2" stroke-width="1.7" stroke-linejoin="miter"/></svg>
<div style="position:absolute;left:710px;top:74px;width:42px;text-align:center;font-size:9px;line-height:9px;color:#404248;font-weight:bold">BAR</div>
<div style="position:absolute;left:765px;top:74px;width:42px;text-align:center;font-size:9px;line-height:9px;color:#404248;font-weight:bold">BEAT</div>
<div style="position:absolute;left:823px;top:41px;width:60px;text-align:center;font-size:15px;line-height:15px;color:#dde0e6;font-weight:bold">143</div>
<div style="position:absolute;left:823px;top:59px;width:60px;text-align:center;font-size:8.5px;line-height:9px;color:#c8cbd2;font-weight:bold">KEEP</div>
<div style="position:absolute;left:823px;top:74px;width:60px;text-align:center;font-size:9px;line-height:9px;color:#404248;font-weight:bold">TEMPO</div>
<div style="position:absolute;left:894px;top:41px;width:60px;text-align:center;font-size:15px;line-height:15px;color:#dde0e6;-webkit-text-stroke:0.5px #dde0e6">4/4</div>
<div style="position:absolute;left:894px;top:62.5px;width:60px;text-align:center;font-size:15px;line-height:15px;color:#dde0e6;-webkit-text-stroke:0.5px #dde0e6">Gmin</div>
<svg style="position:absolute;left:963.0px;top:55.0px" width="14" height="10" viewBox="0 0 14 10"><path d="M2 2.5 L7 7.5 L12 2.5" fill="none" stroke="#dde0e6" stroke-width="1.6"/></svg>
<svg style="position:absolute;left:1002.0px;top:49.0px" width="20" height="22" viewBox="0 0 20 22"><path d="M2.5 2.5 H17.5 V15 L10 20 L2.5 15 Z" fill="none" stroke="#4a4a4a" stroke-width="1.5"/><path d="M6.5 6.5 L13.5 13.5 M13.5 6.5 L6.5 13.5" stroke="#4a4a4a" stroke-width="1.5"/></svg>
<svg style="position:absolute;left:1038.6px;top:49.0px" width="22" height="22" viewBox="0 0 22 22"><path d="M3 20 L10 12 M10 12 L14 4 M10 12 L18 7" stroke="#7a7a7a" stroke-width="1.6" fill="none"/></svg>
<svg style="position:absolute;left:1077.0px;top:50.0px" width="20" height="20" viewBox="0 0 20 20"><rect x="2" y="2" width="16" height="16" rx="2" fill="none" stroke="#4a4a4a" stroke-width="1.5"/><text x="10" y="14.8" text-anchor="middle" font-size="12" font-family="Liberation Sans" fill="#4a4a4a">S</text></svg>
<div style="position:absolute;left:1138px;top:51px;font-size:15px;line-height:17px;color:#4a4a4a;letter-spacing:-0.5px"><span style="font-size:11px">12</span>34</div>
<svg style="position:absolute;left:1179.4px;top:49.0px" width="22" height="22" viewBox="0 0 22 22"><path d="M3 19.5 L8.5 3 H13 L18.5 19.5 Z" fill="none" stroke="#4a4a4a" stroke-width="1.5"/><path d="M3.5 15.5 H18" stroke="#4a4a4a" stroke-width="1.5"/><path d="M11 13 L6 5" stroke="#4a4a4a" stroke-width="1.5"/></svg>
<div style="position:absolute;left:1273.3px;top:51px;width:160.1px;height:22.0px;background:#3a3a3a;border-radius:11px;"></div>
<div style="position:absolute;left:1283px;top:58px;width:97.0px;height:3.5px;background:#3cd44a;border-radius:2px;"></div>
<div style="position:absolute;left:1283px;top:64.5px;width:97.0px;height:3.5px;background:#3cd44a;border-radius:2px;"></div>
<svg style="position:absolute;left:1391.0px;top:57.0px" width="4" height="10" viewBox="0 0 4 10"><rect x="0.5" y="0" width="3" height="3" fill="#d8d040"/><rect x="0.5" y="6" width="3" height="3" fill="#d8d040"/></svg>
<svg style="position:absolute;left:1396.0px;top:57.0px" width="4" height="10" viewBox="0 0 4 10"><rect x="0.5" y="0" width="3" height="3" fill="#b8b030"/><rect x="0.5" y="6" width="3" height="3" fill="#b8b030"/></svg>
<div style="position:absolute;left:1373px;top:53px;width:17px;height:17px;border-radius:50%;background:#c0c0c0"></div>
<svg style="position:absolute;left:1504.0px;top:50.0px" width="24" height="20" viewBox="0 0 24 20"><circle cx="4" cy="4" r="1.3" fill="#4a4a4a"/><circle cx="4" cy="10" r="1.3" fill="#4a4a4a"/><circle cx="4" cy="16" r="1.3" fill="#4a4a4a"/><path d="M8 4 H21 M8 10 H21 M8 16 H21" stroke="#4a4a4a" stroke-width="1.6"/></svg>
<svg style="position:absolute;left:1542.7px;top:49.0px" width="22" height="22" viewBox="0 0 22 22"><rect x="2" y="2" width="18" height="17" rx="1.5" fill="none" stroke="#4a4a4a" stroke-width="1.5"/><path d="M2 5.5 H20" stroke="#4a4a4a" stroke-width="2.5"/><path d="M5.5 9.5 H16.5 M5.5 12.5 H16.5 M5.5 15.5 H13" stroke="#4a4a4a" stroke-width="1.3"/></svg>
<svg style="position:absolute;left:1577.4px;top:49.0px" width="26" height="22" viewBox="0 0 26 22"><ellipse cx="13" cy="10" rx="8" ry="8" fill="none" stroke="#4a4a4a" stroke-width="1.5"/><path d="M2 20 H24" stroke="#4a4a4a" stroke-width="1.5"/></svg>
<svg style="position:absolute;left:1614.0px;top:48.0px" width="28" height="24" viewBox="0 0 28 24"><rect x="2" y="9" width="9" height="10" rx="1" fill="none" stroke="#4a4a4a" stroke-width="1.4"/><path d="M9 2 H16 L20 6 V17 H9 Z" fill="none" stroke="#4a4a4a" stroke-width="1.4"/><path d="M18 21 A2 2 0 1 1 18 20.9 M20 20 V12 L25 11 V18" stroke="#4a4a4a" stroke-width="1.5" fill="none"/></svg>
<div style="position:absolute;left:272px;top:110.5px;width:37.5px;height:21.0px;background:#4a4a4a;border-radius:6px;"></div>
<svg style="position:absolute;left:281.5px;top:111.0px" width="18" height="20" viewBox="0 0 18 20"><path d="M4.5 5.5 L8 2 L11.5 5.5 M8 2.5 V13 Q8 17.5 13 17.5" fill="none" stroke="#727272" stroke-width="1.5"/></svg>
<div style="position:absolute;left:320px;top:110px;width:248.5px;height:21.5px;background:#535353;border-radius:7px;box-shadow:0 1px 1px rgba(0,0,0,.18)"></div>
<div style="position:absolute;left:386px;top:113px;width:1px;height:15px;background:#474747"></div>
<div style="position:absolute;left:331px;top:112px;font-size:15px;line-height:15px;color:#ececec;white-space:nowrap;">Edit</div>
<svg style="position:absolute;left:366.0px;top:117.0px" width="12" height="8" viewBox="0 0 12 8"><path d="M2 2 L6 6 L10 2" fill="none" stroke="#8a8a8a" stroke-width="1.4"/></svg>
<div style="position:absolute;left:398.5px;top:112px;font-size:15px;line-height:15px;color:#ececec;white-space:nowrap;">Functions</div>
<svg style="position:absolute;left:474.5px;top:117.0px" width="12" height="8" viewBox="0 0 12 8"><path d="M2 2 L6 6 L10 2" fill="none" stroke="#8a8a8a" stroke-width="1.4"/></svg>
<div style="position:absolute;left:507px;top:112px;font-size:15px;line-height:15px;color:#ececec;white-space:nowrap;">View</div>
<svg style="position:absolute;left:550.4px;top:117.0px" width="12" height="8" viewBox="0 0 12 8"><path d="M2 2 L6 6 L10 2" fill="none" stroke="#8a8a8a" stroke-width="1.4"/></svg>
<div style="position:absolute;left:579.3px;top:110px;width:69.7px;height:21.5px;background:#535353;border-radius:7px;box-shadow:0 1px 1px rgba(0,0,0,.18)"></div>
<div style="position:absolute;left:615.4px;top:110px;width:33.6px;height:21.5px;background:#2f6bbf;border-radius:0 7px 7px 0"></div>
<svg style="position:absolute;left:588.0px;top:114.0px" width="16" height="14" viewBox="0 0 16 14"><rect x="1" y="1.0" width="2.4" height="2.4" fill="#e8e8e8"/><rect x="1" y="5.2" width="2.4" height="2.4" fill="#e8e8e8"/><rect x="1" y="9.4" width="2.4" height="2.4" fill="#e8e8e8"/><rect x="5" y="1.0" width="2.4" height="2.4" fill="#e8e8e8"/><rect x="5" y="5.2" width="2.4" height="2.4" fill="#e8e8e8"/><rect x="5" y="9.4" width="2.4" height="2.4" fill="#e8e8e8"/><rect x="9" y="1.0" width="2.4" height="2.4" fill="#e8e8e8"/><rect x="9" y="5.2" width="2.4" height="2.4" fill="#e8e8e8"/><rect x="9" y="9.4" width="2.4" height="2.4" fill="#e8e8e8"/><rect x="13" y="1.0" width="2.4" height="2.4" fill="#e8e8e8"/><rect x="13" y="5.2" width="2.4" height="2.4" fill="#e8e8e8"/><rect x="13" y="9.4" width="2.4" height="2.4" fill="#e8e8e8"/></svg>
<svg style="position:absolute;left:623.0px;top:114.0px" width="18" height="14" viewBox="0 0 18 14"><rect x="1" y="1.5" width="16" height="2.4" fill="#e8e8e8"/><rect x="1" y="5.8" width="6" height="2.4" fill="#e8e8e8"/><rect x="9" y="5.8" width="8" height="2.4" fill="#e8e8e8"/><rect x="1" y="10.1" width="16" height="2.4" fill="#e8e8e8"/></svg>
<div style="position:absolute;left:272px;top:151px;width:36.0px;height:22.5px;background:#4e4e4e;border-radius:6px;box-shadow:0 1px 1px rgba(0,0,0,.18)"></div>
<div style="position:absolute;left:321.4px;top:151px;width:35.0px;height:22.5px;background:#4e4e4e;border-radius:6px;box-shadow:0 1px 1px rgba(0,0,0,.18)"></div>
<div style="position:absolute;left:369.6px;top:151px;width:36.2px;height:22.5px;background:#4e4e4e;border-radius:6px;box-shadow:0 1px 1px rgba(0,0,0,.18)"></div>
<div style="position:absolute;left:604.6px;top:151px;width:36.1px;height:22.5px;background:#4e4e4e;border-radius:6px;box-shadow:0 1px 1px rgba(0,0,0,.18)"></div>
<svg style="position:absolute;left:283.0px;top:155.0px" width="14" height="14" viewBox="0 0 14 14"><path d="M7 1 V13 M1 7 H13" stroke="#e8e8e8" stroke-width="1.6"/></svg>
<svg style="position:absolute;left:330.0px;top:153.0px" width="18" height="18" viewBox="0 0 18 18"><rect x="1.5" y="1.5" width="10" height="10" rx="1.5" fill="none" stroke="#e0e0e0" stroke-width="1.3"/><rect x="5" y="5" width="11" height="11" rx="1.5" fill="#4e4e4e" stroke="#e0e0e0" stroke-width="1.3"/><path d="M10.5 7.5 V13.5 M7.5 10.5 H13.5" stroke="#e0e0e0" stroke-width="1.3"/></svg>
<div style="position:absolute;left:380.5px;top:154.5px;font-size:17px;line-height:17px;color:#ececec;white-space:nowrap;">S</div>
<svg style="position:absolute;left:612.5px;top:154.0px" width="20" height="16" viewBox="0 0 20 16"><rect x="1.5" y="1.5" width="17" height="13" rx="1" fill="none" stroke="#d8d8d8" stroke-width="1.2"/><path d="M1.5 5 H18.5" stroke="#d8d8d8" stroke-width="1.2"/><path d="M10 6.5 V12 M7.5 9.8 L10 12.2 L12.5 9.8" fill="none" stroke="#d8d8d8" stroke-width="1.2"/></svg>
<div style="position:absolute;left:661.6px;top:109.5px;width:67.4px;height:22.1px;background:#4c4c4c;border-radius:7px;box-shadow:0 1px 1px rgba(0,0,0,.18)"></div>
<div style="position:absolute;left:695.5px;top:113px;width:1px;height:15px;background:#444"></div>
<svg style="position:absolute;left:665.4px;top:113.0px" width="22" height="16" viewBox="0 0 22 16"><path d="M1.5 14 L5.5 12 M7.5 10.5 L12.5 5.5 M14.5 4.5 L20 3" fill="none" stroke="#d8d8d8" stroke-width="1.3"/><circle cx="6.5" cy="11.5" r="1.8" fill="none" stroke="#d8d8d8" stroke-width="1.2"/><circle cx="13.5" cy="5" r="1.8" fill="none" stroke="#d8d8d8" stroke-width="1.2"/></svg>
<svg style="position:absolute;left:703.3px;top:113.0px" width="20" height="16" viewBox="0 0 20 16"><path d="M2.5 2 V14 M17.5 2 V14 M2.5 3 Q10 5 10 8 Q10 11 17.5 13 M2.5 13 Q10 11 10 8 Q10 5 17.5 3" fill="none" stroke="#d8d8d8" stroke-width="1.3"/></svg>
<div style="position:absolute;left:742.3px;top:109.5px;width:36.7px;height:22.1px;background:#2f6bbf;border-radius:6px;"></div>
<svg style="position:absolute;left:750.6px;top:112.0px" width="20" height="18" viewBox="0 0 20 18"><path d="M10 5 V16 M3 9 L6 12 L3 15 M17 9 L14 12 L17 15" fill="none" stroke="#e8eeff" stroke-width="1.4"/><path d="M7.5 2 L10 5.5 L12.5 2 Z" fill="#e8eeff"/></svg>
<div style="position:absolute;left:837.6px;top:109.5px;width:93.9px;height:22.1px;background:#4c4c4c;border-radius:7px;box-shadow:0 1px 1px rgba(0,0,0,.18)"></div>
<div style="position:absolute;left:884.5px;top:113px;width:1px;height:15px;background:#444"></div>
<svg style="position:absolute;left:845.0px;top:113.0px" width="14" height="16" viewBox="0 0 14 16"><path d="M3 1.5 V13 L6 10 L8.5 15 L10.5 14 L8 9 H12 Z" fill="#e0e0e0"/></svg>
<svg style="position:absolute;left:864.0px;top:117.0px" width="12" height="8" viewBox="0 0 12 8"><path d="M2 2 L6 6 L10 2" fill="none" stroke="#8a8a8a" stroke-width="1.4"/></svg>
<svg style="position:absolute;left:894.0px;top:113.0px" width="16" height="16" viewBox="0 0 16 16"><circle cx="5" cy="3.5" r="2.2" fill="none" stroke="#e0e0e0" stroke-width="1.3"/><circle cx="11" cy="3.5" r="2.2" fill="none" stroke="#e0e0e0" stroke-width="1.3"/><path d="M5.5 5.5 L10 15 M10.5 5.5 L6 15" stroke="#e0e0e0" stroke-width="1.4"/></svg>
<svg style="position:absolute;left:914.0px;top:117.0px" width="12" height="8" viewBox="0 0 12 8"><path d="M2 2 L6 6 L10 2" fill="none" stroke="#8a8a8a" stroke-width="1.4"/></svg>
<div style="position:absolute;left:945px;top:111px;font-size:15px;line-height:15px;color:#a8a8a8;white-space:nowrap;">Snap:</div>
<div style="position:absolute;left:989.5px;top:109.5px;width:183.5px;height:22.1px;background:#4f4f4f;border-radius:7px;box-shadow:0 1px 1px rgba(0,0,0,.18)"></div>
<div style="position:absolute;left:1000px;top:111px;font-size:15px;line-height:15px;color:#ececec;white-space:nowrap;">Smart</div>
<svg style="position:absolute;left:1157.5px;top:112.5px" width="10" height="16" viewBox="0 0 10 16"><path d="M2 6 L5 2.5 L8 6 M2 10 L5 13.5 L8 10" fill="none" stroke="#a8a8a8" stroke-width="1.4"/></svg>
<div style="position:absolute;left:1185.5px;top:111px;font-size:15px;line-height:15px;color:#a8a8a8;white-space:nowrap;">Drag:</div>
<div style="position:absolute;left:1227.7px;top:109.5px;width:117.0px;height:22.1px;background:#4f4f4f;border-radius:7px;box-shadow:0 1px 1px rgba(0,0,0,.18)"></div>
<div style="position:absolute;left:1238px;top:111px;font-size:15px;line-height:15px;color:#ececec;white-space:nowrap;">No Overlap</div>
<svg style="position:absolute;left:1329.0px;top:112.5px" width="10" height="16" viewBox="0 0 10 16"><path d="M2 6 L5 2.5 L8 6 M2 10 L5 13.5 L8 10" fill="none" stroke="#a8a8a8" stroke-width="1.4"/></svg>
<div style="position:absolute;left:1356.4px;top:109px;width:33.6px;height:21.0px;background:#4c4c4c;border-radius:7px;box-shadow:0 1px 1px rgba(0,0,0,.18)"></div>
<svg style="position:absolute;left:1364.2px;top:111.5px" width="18" height="16" viewBox="0 0 18 16"><rect x="1.5" y="5.5" width="1.3" height="5" fill="#e0e0e0"/><rect x="4.2" y="3.5" width="1.3" height="9" fill="#e0e0e0"/><rect x="6.9" y="1.0" width="1.3" height="14" fill="#e0e0e0"/><rect x="9.6" y="3.5" width="1.3" height="9" fill="#e0e0e0"/><rect x="12.3" y="1.0" width="1.3" height="14" fill="#e0e0e0"/><rect x="15.0" y="4.0" width="1.3" height="8" fill="#e0e0e0"/></svg>
<div style="position:absolute;left:1401.7px;top:109px;width:70.3px;height:21.0px;background:#4c4c4c;border-radius:7px;box-shadow:0 1px 1px rgba(0,0,0,.18)"></div>
<div style="position:absolute;left:1436.5px;top:112px;width:1px;height:15px;background:#444"></div>
<svg style="position:absolute;left:1410.0px;top:110.5px" width="16" height="18" viewBox="0 0 16 18"><path d="M3 2 H13 M3 16 H13 M8 4 V14 M5.5 6.5 L8 4 L10.5 6.5 M5.5 11.5 L8 14 L10.5 11.5" fill="none" stroke="#e0e0e0" stroke-width="1.3"/></svg>
<svg style="position:absolute;left:1445.5px;top:111.5px" width="18" height="16" viewBox="0 0 18 16"><path d="M2 3 V13 M16 3 V13 M4 8 H14 M6.5 5.5 L4 8 L6.5 10.5 M11.5 5.5 L14 8 L11.5 10.5" fill="none" stroke="#e0e0e0" stroke-width="1.3"/></svg>
<div style="position:absolute;left:1482.6px;top:108px;width:164.7px;height:23.0px;background:#414141;border-radius:5px;"></div>
<svg style="position:absolute;left:1487.0px;top:111.0px" width="12" height="18" viewBox="0 0 12 18"><path d="M6 2 V16 M3 5 L6 2 L9 5 M3 13 L6 16 L9 13" fill="none" stroke="#b0b0b0" stroke-width="1.4"/></svg>
<div style="position:absolute;left:1505.7px;top:117.5px;width:52.0px;height:4.5px;background:#383838;border-radius:2px;"></div>
<div style="position:absolute;left:1521.8px;top:113px;width:14px;height:14px;border-radius:50%;background:#8a8a8a"></div>
<div style="position:absolute;left:1565.4px;top:112px;width:1px;height:16px;background:#333"></div>
<svg style="position:absolute;left:1568.4px;top:114.0px" width="18" height="12" viewBox="0 0 18 12"><path d="M2 6 H16 M5 3 L2 6 L5 9 M13 3 L16 6 L13 9" fill="none" stroke="#b0b0b0" stroke-width="1.4"/></svg>
<div style="position:absolute;left:1588px;top:117.5px;width:53.0px;height:4.5px;background:#383838;border-radius:2px;"></div>
<div style="position:absolute;left:1589.3px;top:113px;width:14px;height:14px;border-radius:50%;background:#8a8a8a"></div>
<div style="position:absolute;left:1640px;top:0px;width:6px;height:2px;background:#8a8a80;border-radius:0 0 3px 3px"></div>
<div style="position:absolute;left:0px;top:1057px;width:1660px;height:23px;background:#121212"></div>
</body></html>
